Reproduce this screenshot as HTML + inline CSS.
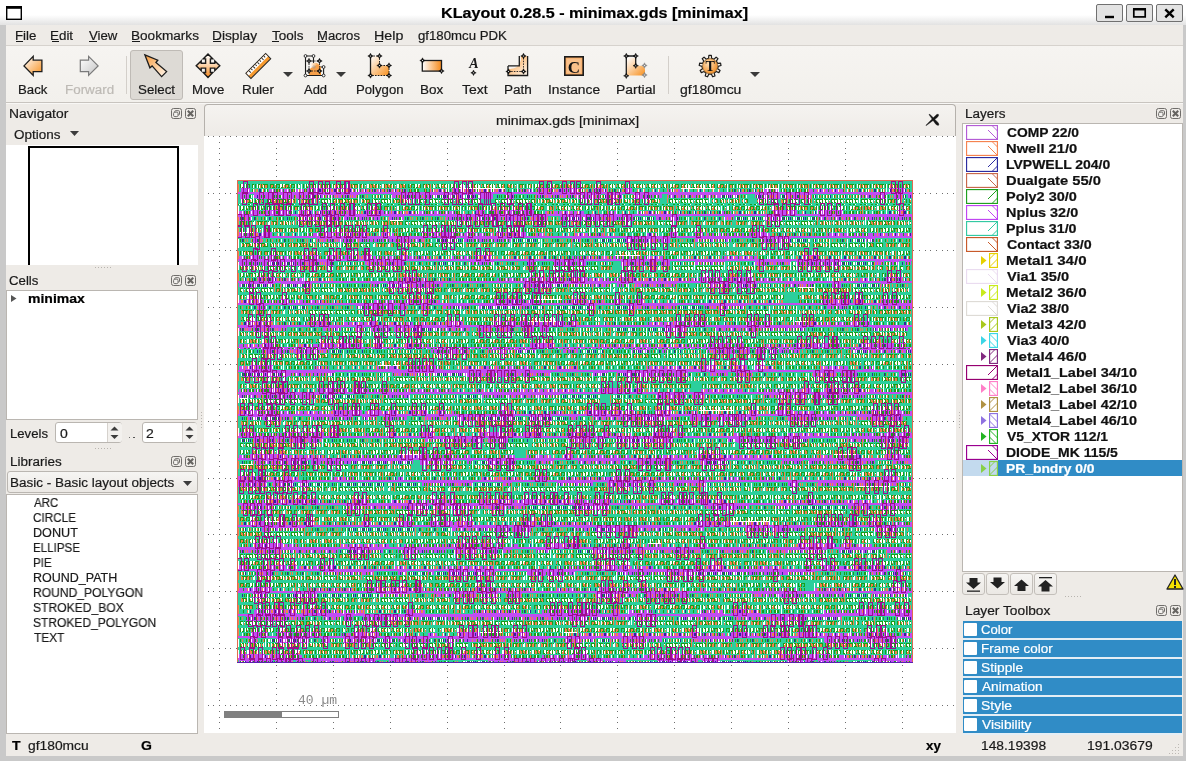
<!DOCTYPE html>
<html><head><meta charset="utf-8"><style>
html,body{margin:0;padding:0;}
body{width:1186px;height:761px;overflow:hidden;position:relative;background:#eeebe7;font-family:"Liberation Sans",sans-serif;}
.t{position:absolute;white-space:pre;line-height:1;transform-origin:0 0;will-change:transform;-webkit-text-stroke:0.2px currentColor;}
</style></head><body>
<div style="position:absolute;left:0px;top:0px;width:1186px;height:25px;background:linear-gradient(#fff 0,#fff 15px,#e2e2e2 25px);"></div>
<svg style="position:absolute;left:0;top:0;overflow:visible" width="1" height="1"><rect x="6.7" y="6.7" width="14.6" height="12.6" fill="#fff" stroke="#000" stroke-width="1.4"/><rect x="6" y="6" width="16" height="2.8" fill="#000"/></svg>
<span class="t" style="left:440.59px;top:5.58px;font-size:14.5px;font-weight:bold;transform:scaleX(1.1109);">KLayout 0.28.5 - minimax.gds [minimax]</span>
<div style="position:absolute;left:1096px;top:4px;width:27px;height:18px;box-sizing:border-box;border:1px solid #707070;border-radius:2px;background:#e3e3e3;"></div>
<div style="position:absolute;left:1126px;top:4px;width:27px;height:18px;box-sizing:border-box;border:1px solid #707070;border-radius:2px;background:#e3e3e3;"></div>
<div style="position:absolute;left:1156px;top:4px;width:27px;height:18px;box-sizing:border-box;border:1px solid #707070;border-radius:2px;background:#e3e3e3;"></div>
<svg style="position:absolute;left:0;top:0;overflow:visible" width="1" height="1"><rect x="1105" y="15.8" width="9" height="2.4" fill="#000"/><rect x="1133.8" y="9.3" width="11.4" height="7.6" fill="none" stroke="#000" stroke-width="1.7"/><rect x="1133" y="8" width="13" height="2.4" fill="#000"/><path d="M1165.3 9.4L1173.7 17.4M1173.7 9.4L1165.3 17.4" stroke="#000" stroke-width="2.4"/></svg>
<div style="position:absolute;left:0px;top:25px;width:6px;height:736px;background:#c9c9c9;"></div>
<div style="position:absolute;left:1183px;top:25px;width:3px;height:736px;background:#c9c9c9;"></div>
<div style="position:absolute;left:0px;top:756px;width:1186px;height:5px;background:#c9c9c9;"></div>
<div style="position:absolute;left:6px;top:25px;width:1177px;height:20px;background:#eeebe7;"></div>
<div style="position:absolute;left:6px;top:45px;width:1177px;height:1px;background:#d6d2cd;"></div>
<span class="t" style="left:14.94px;top:29.68px;font-size:12.5px;color:#1a1a1a;transform:scaleX(1.0632);">File</span>
<div style="position:absolute;left:16px;top:41px;width:7px;height:1px;background:#1a1a1a;"></div>
<span class="t" style="left:50.43px;top:29.68px;font-size:12.5px;color:#1a1a1a;transform:scaleX(1.0714);">Edit</span>
<div style="position:absolute;left:52px;top:41px;width:7px;height:1px;background:#1a1a1a;"></div>
<span class="t" style="left:88.80px;top:29.68px;font-size:12.5px;color:#1a1a1a;transform:scaleX(1.0556);">View</span>
<div style="position:absolute;left:89px;top:41px;width:8px;height:1px;background:#1a1a1a;"></div>
<span class="t" style="left:131.11px;top:29.68px;font-size:12.5px;color:#1a1a1a;transform:scaleX(1.0869);">Bookmarks</span>
<div style="position:absolute;left:132px;top:41px;width:8px;height:1px;background:#1a1a1a;"></div>
<span class="t" style="left:211.90px;top:29.68px;font-size:12.5px;color:#1a1a1a;transform:scaleX(1.1000);">Display</span>
<div style="position:absolute;left:213px;top:41px;width:8px;height:1px;background:#1a1a1a;"></div>
<span class="t" style="left:272.00px;top:29.68px;font-size:12.5px;color:#1a1a1a;transform:scaleX(1.0793);">Tools</span>
<div style="position:absolute;left:272px;top:41px;width:7px;height:1px;background:#1a1a1a;"></div>
<span class="t" style="left:317.35px;top:29.68px;font-size:12.5px;color:#1a1a1a;transform:scaleX(1.0475);">Macros</span>
<div style="position:absolute;left:318px;top:41px;width:8px;height:1px;background:#1a1a1a;"></div>
<span class="t" style="left:373.86px;top:29.68px;font-size:12.5px;color:#1a1a1a;transform:scaleX(1.1417);">Help</span>
<div style="position:absolute;left:375px;top:41px;width:8px;height:1px;background:#1a1a1a;"></div>
<span class="t" style="left:417.80px;top:29.68px;font-size:12.5px;color:#1a1a1a;transform:scaleX(1.0571);">gf180mcu PDK</span>
<div style="position:absolute;left:6px;top:46px;width:1177px;height:56px;background:linear-gradient(#f6f4f1,#f2f0ec);"></div>
<div style="position:absolute;left:6px;top:102px;width:1177px;height:1px;background:#c8c4bf;"></div>
<div style="position:absolute;left:6px;top:103px;width:1177px;height:1px;background:#f8f7f5;"></div>
<div style="position:absolute;left:126px;top:56px;width:1px;height:38px;background:#d3cfca;"></div>
<div style="position:absolute;left:668px;top:56px;width:1px;height:38px;background:#d3cfca;"></div>
<div style="position:absolute;left:130px;top:50px;width:53px;height:50px;box-sizing:border-box;border:1px solid #bfbbb6;border-radius:3px;background:#dddad5;"></div>
<span class="t" style="left:17.54px;top:83.67px;font-size:12.5px;color:#1a1a1a;transform:scaleX(1.0556);">Back</span>
<span class="t" style="left:64.73px;top:83.67px;font-size:12.5px;color:#bdbab5;transform:scaleX(1.0727);">Forward</span>
<span class="t" style="left:137.54px;top:83.67px;font-size:12.5px;color:#1a1a1a;transform:scaleX(1.0647);">Select</span>
<span class="t" style="left:191.94px;top:83.67px;font-size:12.5px;color:#1a1a1a;transform:scaleX(1.0552);">Move</span>
<span class="t" style="left:241.93px;top:83.67px;font-size:12.5px;color:#1a1a1a;transform:scaleX(1.0690);">Ruler</span>
<span class="t" style="left:303.60px;top:83.67px;font-size:12.5px;color:#1a1a1a;transform:scaleX(1.0364);">Add</span>
<span class="t" style="left:355.65px;top:83.67px;font-size:12.5px;color:#1a1a1a;transform:scaleX(1.0523);">Polygon</span>
<span class="t" style="left:420.32px;top:83.67px;font-size:12.5px;color:#1a1a1a;transform:scaleX(1.0800);">Box</span>
<span class="t" style="left:462.00px;top:83.67px;font-size:12.5px;color:#1a1a1a;transform:scaleX(1.1174);">Text</span>
<span class="t" style="left:503.92px;top:83.67px;font-size:12.5px;color:#1a1a1a;transform:scaleX(1.0833);">Path</span>
<span class="t" style="left:547.90px;top:83.67px;font-size:12.5px;color:#1a1a1a;transform:scaleX(1.1022);">Instance</span>
<span class="t" style="left:616.39px;top:83.67px;font-size:12.5px;color:#1a1a1a;transform:scaleX(1.1147);">Partial</span>
<span class="t" style="left:680.00px;top:83.67px;font-size:12.5px;color:#1a1a1a;transform:scaleX(1.1185);">gf180mcu</span>
<svg style="position:absolute;left:0;top:0" width="0" height="0"><defs><linearGradient id="og" x1="0" y1="0" x2="1" y2="1"><stop offset="0" stop-color="#ffffff"/><stop offset="0.25" stop-color="#fde3c8"/><stop offset="1" stop-color="#f7901e"/></linearGradient><linearGradient id="ogh" x1="0" y1="0" x2="1" y2="0"><stop offset="0" stop-color="#ffffff"/><stop offset="1" stop-color="#f5891a"/></linearGradient><linearGradient id="ogr" x1="1" y1="1" x2="0" y2="0"><stop offset="0" stop-color="#fff8f0"/><stop offset="1" stop-color="#f89b3c"/></linearGradient><linearGradient id="ogv" x1="0" y1="0" x2="0" y2="1"><stop offset="0" stop-color="#ffffff"/><stop offset="0.4" stop-color="#fde0c0"/><stop offset="1" stop-color="#f5861a"/></linearGradient><linearGradient id="gg" x1="0" y1="0" x2="1" y2="1"><stop offset="0" stop-color="#ffffff"/><stop offset="1" stop-color="#c4c4c4"/></linearGradient><radialGradient id="gr" cx="0.4" cy="0.35" r="0.7"><stop offset="0" stop-color="#fde0b8"/><stop offset="1" stop-color="#f08a20"/></radialGradient></defs></svg>
<svg style="position:absolute;left:0px;top:0px;overflow:visible" width="1" height="1" viewBox="0 0 1 1"><path d="M24 65.9L33.2 56.4V60.2H41.9V71.6H33.2V75.4Z" fill="url(#og)" stroke="#1c1c1c" stroke-width="1.3" stroke-linejoin="miter"/></svg>
<svg style="position:absolute;left:0px;top:0px;overflow:visible" width="1" height="1" viewBox="0 0 1 1"><path d="M98.1 65.9L88.6 56.4V60.2H80.3V71.6H88.6V75.4Z" fill="url(#gg)" stroke="#7a7a7a" stroke-width="1.2" stroke-linejoin="miter"/></svg>
<svg style="position:absolute;left:0px;top:0px;overflow:visible" width="1" height="1" viewBox="0 0 1 1"><path d="M144.9 54.9L157.8 60.2L155.9 62.5L166.6 71.6L161.6 76.6L152.1 65.9L149.9 67.8Z" fill="url(#ogr)" stroke="#1c1c1c" stroke-width="1.3" stroke-linejoin="miter"/></svg>
<svg style="position:absolute;left:0px;top:0px;overflow:visible" width="1" height="1" viewBox="0 0 1 1"><path d="M205.60 63.30L205.60 58.90L203.20 58.90L208.00 53.90L212.80 58.90L210.40 58.90L210.40 63.30L214.80 63.30L214.80 60.90L219.80 65.70L214.80 70.50L214.80 68.10L210.40 68.10L210.40 72.50L212.80 72.50L208.00 77.50L203.20 72.50L205.60 72.50L205.60 68.10L201.20 68.10L201.20 70.50L196.20 65.70L201.20 60.90L201.20 63.30Z" fill="url(#ogv)" stroke="#1c1c1c" stroke-width="1.4" stroke-linejoin="miter"/></svg>
<svg style="position:absolute;left:0px;top:0px;overflow:visible" width="1" height="1" viewBox="0 0 1 1"><g transform="translate(258.3,66) rotate(-45)"><rect x="-14" y="-3.6" width="28" height="7.2" fill="#f79a2e" stroke="#2a2a2a" stroke-width="1"/><rect x="-13.5" y="-3.1" width="27" height="3.2" fill="#fff"/><path d="M-10 -3.1v2.6M-7 -3.1v1.8M-4 -3.1v2.6M-1 -3.1v1.8M2 -3.1v2.6M5 -3.1v1.8M8 -3.1v2.6M11 -3.1v1.8" stroke="#2a2a2a" stroke-width="1"/></g></svg>
<svg style="position:absolute;left:0px;top:0px;overflow:visible" width="1" height="1" viewBox="0 0 1 1"><path d="M305.5 56H313.5V67H323.6V75.5H305.5Z" fill="none" stroke="#1c1c1c" stroke-width="1.1"/><path d="M310 64Q318 60 321 68V75H310Z" fill="url(#ogh)"/><path d="M314 67Q318 62 320.5 68L320 75H309V70Q311 67 314 67Z" fill="#f7a04a"/><path d="M309 61V71M319.5 61V71M309 61H319.5M309 71H319.5" stroke="#1c1c1c" stroke-width="0.9" stroke-dasharray="1.4 1.2"/><circle cx="314" cy="67" r="1.2" fill="none" stroke="#999" stroke-width="0.7"/><circle cx="305.5" cy="56" r="1.4" fill="#fff" stroke="#1c1c1c" stroke-width="0.9"/><circle cx="313.5" cy="56" r="1.4" fill="#fff" stroke="#1c1c1c" stroke-width="0.9"/><circle cx="305.5" cy="75.5" r="1.4" fill="#fff" stroke="#1c1c1c" stroke-width="0.9"/><circle cx="323.6" cy="75.5" r="1.4" fill="#fff" stroke="#1c1c1c" stroke-width="0.9"/><circle cx="323.6" cy="67" r="1.4" fill="#fff" stroke="#1c1c1c" stroke-width="0.9"/><path d="M309 58.3L309.9 60.1L311.7 61L309.9 61.9L309 63.7L308.1 61.9L306.3 61L308.1 60.1Z" fill="#111" stroke="#111" stroke-width="0.5" stroke-linejoin="round"/><circle cx="309" cy="61" r="0.55" fill="#fff"/><path d="M319.5 58.3L320.4 60.1L322.2 61L320.4 61.9L319.5 63.7L318.6 61.9L316.8 61L318.6 60.1Z" fill="#111" stroke="#111" stroke-width="0.5" stroke-linejoin="round"/><circle cx="319.5" cy="61" r="0.55" fill="#fff"/><path d="M309 68.3L309.9 70.1L311.7 71L309.9 71.9L309 73.7L308.1 71.9L306.3 71L308.1 70.1Z" fill="#111" stroke="#111" stroke-width="0.5" stroke-linejoin="round"/><circle cx="309" cy="71" r="0.55" fill="#fff"/><path d="M319.5 68.3L320.4 70.1L322.2 71L320.4 71.9L319.5 73.7L318.6 71.9L316.8 71L318.6 70.1Z" fill="#111" stroke="#111" stroke-width="0.5" stroke-linejoin="round"/><circle cx="319.5" cy="71" r="0.55" fill="#fff"/></svg>
<svg style="position:absolute;left:283px;top:72px;overflow:visible" width="10" height="5" viewBox="0 0 10 5"><path d="M0 0H10L5 5Z" fill="#3a3a3a"/></svg>
<svg style="position:absolute;left:336px;top:72px;overflow:visible" width="10" height="5" viewBox="0 0 10 5"><path d="M0 0H10L5 5Z" fill="#3a3a3a"/></svg>
<svg style="position:absolute;left:750px;top:72px;overflow:visible" width="10" height="5" viewBox="0 0 10 5"><path d="M0 0H10L5 5Z" fill="#3a3a3a"/></svg>
<svg style="position:absolute;left:0px;top:0px;overflow:visible" width="1" height="1" viewBox="0 0 1 1"><path d="M370.5 56H379.5V65.5H389V75.5H370.5Z" fill="url(#og)"/><path d="M370.5 56V75.5" stroke="#1c1c1c" stroke-width="1.3"/><path d="M370.5 56H379.5V65.5H389V75.5H370.5" fill="none" stroke="#1c1c1c" stroke-width="1" stroke-dasharray="1.6 1.2"/><path d="M370.5 53.3L371.4 55.1L373.2 56L371.4 56.9L370.5 58.7L369.6 56.9L367.8 56L369.6 55.1Z" fill="#111" stroke="#111" stroke-width="0.5" stroke-linejoin="round"/><circle cx="370.5" cy="56" r="0.55" fill="#fff"/><path d="M379.5 53.3L380.4 55.1L382.2 56L380.4 56.9L379.5 58.7L378.6 56.9L376.8 56L378.6 55.1Z" fill="#111" stroke="#111" stroke-width="0.5" stroke-linejoin="round"/><circle cx="379.5" cy="56" r="0.55" fill="#fff"/><path d="M379.5 62.8L380.4 64.6L382.2 65.5L380.4 66.4L379.5 68.2L378.6 66.4L376.8 65.5L378.6 64.6Z" fill="#111" stroke="#111" stroke-width="0.5" stroke-linejoin="round"/><circle cx="379.5" cy="65.5" r="0.55" fill="#fff"/><path d="M389 62.8L389.9 64.6L391.7 65.5L389.9 66.4L389 68.2L388.1 66.4L386.3 65.5L388.1 64.6Z" fill="#111" stroke="#111" stroke-width="0.5" stroke-linejoin="round"/><circle cx="389" cy="65.5" r="0.55" fill="#fff"/><path d="M370.5 72.8L371.4 74.6L373.2 75.5L371.4 76.4L370.5 78.2L369.6 76.4L367.8 75.5L369.6 74.6Z" fill="#111" stroke="#111" stroke-width="0.5" stroke-linejoin="round"/><circle cx="370.5" cy="75.5" r="0.55" fill="#fff"/><path d="M389 72.8L389.9 74.6L391.7 75.5L389.9 76.4L389 78.2L388.1 76.4L386.3 75.5L388.1 74.6Z" fill="#111" stroke="#111" stroke-width="0.5" stroke-linejoin="round"/><circle cx="389" cy="75.5" r="0.55" fill="#fff"/></svg>
<svg style="position:absolute;left:0px;top:0px;overflow:visible" width="1" height="1" viewBox="0 0 1 1"><rect x="422.3" y="60.5" width="19.2" height="10.6" fill="url(#ogh)" stroke="#1c1c1c" stroke-width="1.3"/><path d="M422.5 57.8L423.4 59.6L425.2 60.5L423.4 61.4L422.5 63.2L421.6 61.4L419.8 60.5L421.6 59.6Z" fill="#111" stroke="#111" stroke-width="0.5" stroke-linejoin="round"/><circle cx="422.5" cy="60.5" r="0.55" fill="#fff"/><path d="M441.5 68.3L442.4 70.1L444.2 71L442.4 71.9L441.5 73.7L440.6 71.9L438.8 71L440.6 70.1Z" fill="#111" stroke="#111" stroke-width="0.5" stroke-linejoin="round"/><circle cx="441.5" cy="71" r="0.55" fill="#fff"/></svg>
<svg style="position:absolute;left:0px;top:0px;overflow:visible" width="1" height="1" viewBox="0 0 1 1"><text x="473.8" y="68.3" text-anchor="middle" font-family="Liberation Serif" font-style="italic" font-weight="bold" font-size="14" fill="#1c1c1c">A</text><path d="M473.5 70.1L474.4 71.89999999999999L476.2 72.8L474.4 73.7L473.5 75.5L472.6 73.7L470.8 72.8L472.6 71.89999999999999Z" fill="#111" stroke="#111" stroke-width="0.5" stroke-linejoin="round"/><circle cx="473.5" cy="72.8" r="0.55" fill="#fff"/></svg>
<svg style="position:absolute;left:0px;top:0px;overflow:visible" width="1" height="1" viewBox="0 0 1 1"><path d="M508 65.9H519.3V56H527.6V75.5H508Z" fill="#f3f1ee"/><path d="M509 69Q519 69 521 60V56H527V75H509Z" fill="url(#ogr)"/><path d="M508 65.9H519.3V56M527.6 56V75.5H508V65.9" fill="none" stroke="#1c1c1c" stroke-width="1.3"/><path d="M508.5 71.5H523.5V56" fill="none" stroke="#1c1c1c" stroke-width="0.9" stroke-dasharray="1.5 1.2"/><path d="M508.5 68.8L509.4 70.6L511.2 71.5L509.4 72.4L508.5 74.2L507.6 72.4L505.8 71.5L507.6 70.6Z" fill="#111" stroke="#111" stroke-width="0.5" stroke-linejoin="round"/><circle cx="508.5" cy="71.5" r="0.55" fill="#fff"/><path d="M523.5 68.8L524.4 70.6L526.2 71.5L524.4 72.4L523.5 74.2L522.6 72.4L520.8 71.5L522.6 70.6Z" fill="#111" stroke="#111" stroke-width="0.5" stroke-linejoin="round"/><circle cx="523.5" cy="71.5" r="0.55" fill="#fff"/><path d="M523.5 53.3L524.4 55.1L526.2 56L524.4 56.9L523.5 58.7L522.6 56.9L520.8 56L522.6 55.1Z" fill="#111" stroke="#111" stroke-width="0.5" stroke-linejoin="round"/><circle cx="523.5" cy="56" r="0.55" fill="#fff"/></svg>
<svg style="position:absolute;left:0px;top:0px;overflow:visible" width="1" height="1" viewBox="0 0 1 1"><rect x="564.8" y="56.8" width="18.4" height="18.4" fill="#f7a860" stroke="#1c1c1c" stroke-width="1.6"/><rect x="566.5" y="58.5" width="15" height="15" fill="#f9c08a"/><text x="574" y="72.6" text-anchor="middle" font-family="Liberation Serif" font-weight="bold" font-size="17" fill="#111">C</text></svg>
<svg style="position:absolute;left:0px;top:0px;overflow:visible" width="1" height="1" viewBox="0 0 1 1"><path d="M627 58H635.7V65.7H641Q645 66 645 70V75.5H627Z" fill="url(#og)"/><path d="M626.3 75.8V56H635.7V65.7" fill="none" stroke="#1c1c1c" stroke-width="1.3"/><path d="M626.3 53.3L627.1999999999999 55.1L629.0 56L627.1999999999999 56.9L626.3 58.7L625.4 56.9L623.5999999999999 56L625.4 55.1Z" fill="#111" stroke="#111" stroke-width="0.5" stroke-linejoin="round"/><circle cx="626.3" cy="56" r="0.55" fill="#fff"/><path d="M635.7 53.3L636.6 55.1L638.4000000000001 56L636.6 56.9L635.7 58.7L634.8000000000001 56.9L633.0 56L634.8000000000001 55.1Z" fill="#111" stroke="#111" stroke-width="0.5" stroke-linejoin="round"/><circle cx="635.7" cy="56" r="0.55" fill="#fff"/><path d="M635.7 63.0L636.6 64.8L638.4000000000001 65.7L636.6 66.60000000000001L635.7 68.4L634.8000000000001 66.60000000000001L633.0 65.7L634.8000000000001 64.8Z" fill="#111" stroke="#111" stroke-width="0.5" stroke-linejoin="round"/><circle cx="635.7" cy="65.7" r="0.55" fill="#fff"/><path d="M626.3 73.1L627.1999999999999 74.89999999999999L629.0 75.8L627.1999999999999 76.7L626.3 78.5L625.4 76.7L623.5999999999999 75.8L625.4 74.89999999999999Z" fill="#111" stroke="#111" stroke-width="0.5" stroke-linejoin="round"/><circle cx="626.3" cy="75.8" r="0.55" fill="#fff"/><path d="M644.5 62.8L645.4 64.6L647.2 65.5L645.4 66.4L644.5 68.2L643.6 66.4L641.8 65.5L643.6 64.6Z" fill="#8a8a8a" stroke="#8a8a8a" stroke-width="0.5" stroke-linejoin="round"/><circle cx="644.5" cy="65.5" r="0.55" fill="#fff"/><path d="M644.5 72.3L645.4 74.1L647.2 75L645.4 75.9L644.5 77.7L643.6 75.9L641.8 75L643.6 74.1Z" fill="#8a8a8a" stroke="#8a8a8a" stroke-width="0.5" stroke-linejoin="round"/><circle cx="644.5" cy="75" r="0.55" fill="#fff"/></svg>
<svg style="position:absolute;left:0px;top:0px;overflow:visible" width="1" height="1" viewBox="0 0 1 1"><polygon points="708.57,58.35 708.88,55.37 711.32,55.37 711.63,58.35 712.84,58.68 713.98,59.20 716.13,57.12 717.99,58.68 716.32,61.17 717.03,62.20 717.57,63.33 720.56,63.12 720.98,65.52 718.10,66.34 717.98,67.59 717.66,68.80 720.09,70.56 718.87,72.67 716.14,71.45 715.24,72.33 714.22,73.06 714.95,75.96 712.66,76.79 711.35,74.10 710.10,74.20 708.85,74.10 707.54,76.79 705.25,75.96 705.98,73.06 704.96,72.33 704.06,71.45 701.33,72.67 700.11,70.56 702.54,68.80 702.22,67.59 702.10,66.34 699.22,65.52 699.64,63.12 702.63,63.33 703.17,62.20 703.88,61.17 702.21,58.68 704.07,57.12 706.22,59.20 707.36,58.68" fill="#fdf3e6" stroke="#1c1c1c" stroke-width="1.2" stroke-linejoin="round"/><circle cx="710.1" cy="66.2" r="7.6" fill="url(#gr)" stroke="#6a4a20" stroke-width="0.6"/><text x="710.1" y="71.2" text-anchor="middle" font-family="Liberation Serif" font-weight="bold" font-size="14" fill="#111">T</text></svg>
<span class="t" style="left:9.39px;top:107.77px;font-size:12.5px;color:#1a1a1a;transform:scaleX(1.1077);">Navigator</span>
<div style="position:absolute;left:171px;top:108px;width:11px;height:11px;box-sizing:border-box;border:1px solid #6f6d6a;border-radius:2.5px;"></div><div style="position:absolute;left:185px;top:108px;width:11px;height:11px;box-sizing:border-box;border:1px solid #6f6d6a;border-radius:2.5px;"></div><svg style="position:absolute;left:171px;top:108px" width="11" height="11"><rect x="3.7" y="2.7" width="4.8" height="4.3" rx="1" fill="none" stroke="#6f6d6a" stroke-width="1"/><rect x="2.6" y="4.2" width="4.4" height="4.4" rx="1.2" fill="#f4f2ef" stroke="#6f6d6a" stroke-width="1"/></svg><svg style="position:absolute;left:185px;top:108px" width="11" height="11"><path d="M2.8 2.8L8.2 8.2M8.2 2.8L2.8 8.2" stroke="#666461" stroke-width="2.1"/></svg>
<span class="t" style="left:13.72px;top:129.17px;font-size:12.5px;color:#1a1a1a;transform:scaleX(1.0762);">Options</span>
<svg style="position:absolute;left:70px;top:131px" width="9" height="5"><path d="M0 0H9L4.5 5Z" fill="#3c3c3c"/></svg>
<div style="position:absolute;left:6px;top:145px;width:192px;height:120px;background:#fff;"></div>
<div style="position:absolute;left:28px;top:146px;width:151px;height:2px;background:#000;"></div>
<div style="position:absolute;left:28px;top:146px;width:2px;height:119px;background:#000;"></div>
<div style="position:absolute;left:177px;top:146px;width:2px;height:119px;background:#000;"></div>
<span class="t" style="left:9.44px;top:274.58px;font-size:12.5px;color:#1a1a1a;transform:scaleX(1.0577);">Cells</span>
<div style="position:absolute;left:171px;top:275px;width:11px;height:11px;box-sizing:border-box;border:1px solid #6f6d6a;border-radius:2.5px;"></div><div style="position:absolute;left:185px;top:275px;width:11px;height:11px;box-sizing:border-box;border:1px solid #6f6d6a;border-radius:2.5px;"></div><svg style="position:absolute;left:171px;top:275px" width="11" height="11"><rect x="3.7" y="2.7" width="4.8" height="4.3" rx="1" fill="none" stroke="#6f6d6a" stroke-width="1"/><rect x="2.6" y="4.2" width="4.4" height="4.4" rx="1.2" fill="#f4f2ef" stroke="#6f6d6a" stroke-width="1"/></svg><svg style="position:absolute;left:185px;top:275px" width="11" height="11"><path d="M2.8 2.8L8.2 8.2M8.2 2.8L2.8 8.2" stroke="#666461" stroke-width="2.1"/></svg>
<div style="position:absolute;left:6px;top:290px;width:192px;height:130px;box-sizing:border-box;border:1px solid #bab6b1;background:#fff;"></div>
<svg style="position:absolute;left:11px;top:295px" width="6" height="7"><path d="M0 0L5.5 3.5L0 7Z" fill="#555"/></svg>
<span class="t" style="left:27.58px;top:292.68px;font-size:12.5px;font-weight:bold;transform:scaleX(1.1200);">minimax</span>
<span class="t" style="left:10.45px;top:427.68px;font-size:12.5px;color:#1a1a1a;transform:scaleX(1.0514);">Levels</span>
<div style="position:absolute;left:55px;top:422px;width:67px;height:21px;box-sizing:border-box;border:1px solid #bab6b1;border-radius:3px;background:#fff;"></div><div style="position:absolute;left:107px;top:423px;width:14px;height:19px;background:#f3f1ee;border-left:1px solid #d6d2cd;border-radius:0 2px 2px 0;"></div><svg style="position:absolute;left:110px;top:426px" width="9" height="14"><path d="M0.5 4.5L4.5 0.5L8.5 4.5Z" fill="#3c3c3c"/><path d="M0.5 9L4.5 13L8.5 9Z" fill="#3c3c3c"/></svg>
<div style="position:absolute;left:142px;top:422px;width:55px;height:21px;box-sizing:border-box;border:1px solid #bab6b1;border-radius:3px;background:#fff;"></div><div style="position:absolute;left:182px;top:423px;width:14px;height:19px;background:#f3f1ee;border-left:1px solid #d6d2cd;border-radius:0 2px 2px 0;"></div><svg style="position:absolute;left:185px;top:426px" width="9" height="14"><path d="M0.5 4.5L4.5 0.5L8.5 4.5Z" fill="#3c3c3c"/><path d="M0.5 9L4.5 13L8.5 9Z" fill="#3c3c3c"/></svg>
<span class="t" style="left:60.30px;top:427.68px;font-size:12.5px;color:#1a1a1a;transform:scaleX(1.1200);">0</span>
<span class="t" style="left:146.38px;top:427.68px;font-size:12.5px;color:#1a1a1a;transform:scaleX(1.1200);">2</span>
<div style="position:absolute;left:128.5px;top:436.5px;width:1.6px;height:1.6px;background:#444;border-radius:1px;"></div>
<div style="position:absolute;left:133px;top:436.5px;width:1.6px;height:1.6px;background:#444;border-radius:1px;"></div>
<div style="position:absolute;left:95px;top:267px;width:1px;height:1px;background:#b8b4af;"></div>
<div style="position:absolute;left:98px;top:267px;width:1px;height:1px;background:#b8b4af;"></div>
<div style="position:absolute;left:101px;top:267px;width:1px;height:1px;background:#b8b4af;"></div>
<div style="position:absolute;left:104px;top:267px;width:1px;height:1px;background:#b8b4af;"></div>
<div style="position:absolute;left:107px;top:267px;width:1px;height:1px;background:#b8b4af;"></div>
<div style="position:absolute;left:110px;top:267px;width:1px;height:1px;background:#b8b4af;"></div>
<div style="position:absolute;left:95px;top:448px;width:1px;height:1px;background:#b8b4af;"></div>
<div style="position:absolute;left:98px;top:448px;width:1px;height:1px;background:#b8b4af;"></div>
<div style="position:absolute;left:101px;top:448px;width:1px;height:1px;background:#b8b4af;"></div>
<div style="position:absolute;left:104px;top:448px;width:1px;height:1px;background:#b8b4af;"></div>
<div style="position:absolute;left:107px;top:448px;width:1px;height:1px;background:#b8b4af;"></div>
<div style="position:absolute;left:110px;top:448px;width:1px;height:1px;background:#b8b4af;"></div>
<div style="position:absolute;left:1065px;top:596px;width:1px;height:1px;background:#b8b4af;"></div>
<div style="position:absolute;left:1068px;top:596px;width:1px;height:1px;background:#b8b4af;"></div>
<div style="position:absolute;left:1071px;top:596px;width:1px;height:1px;background:#b8b4af;"></div>
<div style="position:absolute;left:1074px;top:596px;width:1px;height:1px;background:#b8b4af;"></div>
<div style="position:absolute;left:1077px;top:596px;width:1px;height:1px;background:#b8b4af;"></div>
<div style="position:absolute;left:1080px;top:596px;width:1px;height:1px;background:#b8b4af;"></div>
<div style="position:absolute;left:201px;top:412px;width:1px;height:1px;background:#b8b4af;"></div>
<div style="position:absolute;left:201px;top:415px;width:1px;height:1px;background:#b8b4af;"></div>
<div style="position:absolute;left:201px;top:418px;width:1px;height:1px;background:#b8b4af;"></div>
<div style="position:absolute;left:201px;top:421px;width:1px;height:1px;background:#b8b4af;"></div>
<div style="position:absolute;left:201px;top:424px;width:1px;height:1px;background:#b8b4af;"></div>
<div style="position:absolute;left:201px;top:427px;width:1px;height:1px;background:#b8b4af;"></div>
<div style="position:absolute;left:959px;top:412px;width:1px;height:1px;background:#b8b4af;"></div>
<div style="position:absolute;left:959px;top:415px;width:1px;height:1px;background:#b8b4af;"></div>
<div style="position:absolute;left:959px;top:418px;width:1px;height:1px;background:#b8b4af;"></div>
<div style="position:absolute;left:959px;top:421px;width:1px;height:1px;background:#b8b4af;"></div>
<div style="position:absolute;left:959px;top:424px;width:1px;height:1px;background:#b8b4af;"></div>
<div style="position:absolute;left:959px;top:427px;width:1px;height:1px;background:#b8b4af;"></div>
<span class="t" style="left:9.52px;top:455.68px;font-size:12.5px;color:#1a1a1a;transform:scaleX(1.0766);">Libraries</span>
<div style="position:absolute;left:171px;top:456px;width:11px;height:11px;box-sizing:border-box;border:1px solid #6f6d6a;border-radius:2.5px;"></div><div style="position:absolute;left:185px;top:456px;width:11px;height:11px;box-sizing:border-box;border:1px solid #6f6d6a;border-radius:2.5px;"></div><svg style="position:absolute;left:171px;top:456px" width="11" height="11"><rect x="3.7" y="2.7" width="4.8" height="4.3" rx="1" fill="none" stroke="#6f6d6a" stroke-width="1"/><rect x="2.6" y="4.2" width="4.4" height="4.4" rx="1.2" fill="#f4f2ef" stroke="#6f6d6a" stroke-width="1"/></svg><svg style="position:absolute;left:185px;top:456px" width="11" height="11"><path d="M2.8 2.8L8.2 8.2M8.2 2.8L2.8 8.2" stroke="#666461" stroke-width="2.1"/></svg>
<div style="position:absolute;left:7px;top:471px;width:191px;height:22px;box-sizing:border-box;border:1px solid #bab6b1;border-radius:3px;background:linear-gradient(#f6f5f3,#ebe8e4);"></div>
<span class="t" style="left:10.12px;top:477.18px;font-size:12.5px;color:#1a1a1a;transform:scaleX(1.0795);">Basic - Basic layout objects</span>
<svg style="position:absolute;left:183px;top:481px" width="9" height="5"><path d="M0 0H9L4.5 5Z" fill="#3c3c3c"/></svg>
<div style="position:absolute;left:6px;top:494px;width:192px;height:240px;box-sizing:border-box;border:1px solid #bab6b1;background:#fff;"></div>
<span class="t" style="left:33.90px;top:496.58px;font-size:12.5px;color:#1a1a1a;transform:scaleX(0.9231);">ARC</span>
<span class="t" style="left:32.96px;top:511.58px;font-size:12.5px;color:#1a1a1a;transform:scaleX(0.9378);">CIRCLE</span>
<span class="t" style="left:32.89px;top:526.58px;font-size:12.5px;color:#1a1a1a;transform:scaleX(1.0093);">DONUT</span>
<span class="t" style="left:32.97px;top:541.58px;font-size:12.5px;color:#1a1a1a;transform:scaleX(0.9260);">ELLIPSE</span>
<span class="t" style="left:32.97px;top:556.58px;font-size:12.5px;color:#1a1a1a;transform:scaleX(0.9316);">PIE</span>
<span class="t" style="left:32.90px;top:571.58px;font-size:12.5px;color:#1a1a1a;">ROUND_PATH</span>
<span class="t" style="left:32.93px;top:586.58px;font-size:12.5px;color:#1a1a1a;transform:scaleX(0.9679);">ROUND_POLYGON</span>
<span class="t" style="left:32.93px;top:601.58px;font-size:12.5px;color:#1a1a1a;transform:scaleX(0.9674);">STROKED_BOX</span>
<span class="t" style="left:32.94px;top:616.58px;font-size:12.5px;color:#1a1a1a;transform:scaleX(0.9603);">STROKED_POLYGON</span>
<span class="t" style="left:33.90px;top:631.58px;font-size:12.5px;color:#1a1a1a;transform:scaleX(0.9500);">TEXT</span>
<span class="t" style="left:11.80px;top:739.58px;font-size:12.5px;font-weight:bold;transform:scaleX(1.1200);">T</span>
<span class="t" style="left:27.50px;top:739.58px;font-size:12.5px;color:#1a1a1a;transform:scaleX(1.1056);">gf180mcu</span>
<span class="t" style="left:141.00px;top:739.58px;font-size:12.5px;font-weight:bold;transform:scaleX(1.1200);">G</span>
<span class="t" style="left:925.50px;top:739.58px;font-size:12.5px;font-weight:bold;transform:scaleX(1.0714);">xy</span>
<span class="t" style="left:981.20px;top:739.98px;font-size:12.5px;color:#1a1a1a;transform:scaleX(1.1017);">148.19398</span>
<span class="t" style="left:1086.89px;top:739.98px;font-size:12.5px;color:#1a1a1a;transform:scaleX(1.1103);">191.03679</span>
<div style="position:absolute;left:204px;top:104px;width:752px;height:32px;box-sizing:border-box;border:1px solid #b5b1ac;border-bottom:none;border-radius:4px 4px 0 0;background:linear-gradient(#f5f3f0,#eeebe7);"></div>
<span class="t" style="left:495.57px;top:114.97px;font-size:12.5px;color:#1a1a1a;transform:scaleX(1.1262);">minimax.gds [minimax]</span>
<svg style="position:absolute;left:0;top:0;overflow:visible" width="1" height="1"><path d="M929 114.6L929.8 114.3L937.6 122.2Q939.6 124.4 938.6 125.2Q937.6 125.8 935.8 124.2Z" fill="#151515" stroke="#151515" stroke-width="0.5"/><path d="M926.2 125.6L926 125.2L935.6 115.6Q937.2 113.8 938.4 114.4Q939.2 115.4 937.2 117.4Z" fill="#151515" stroke="#151515" stroke-width="0.5"/></svg>
<div style="position:absolute;left:204px;top:136px;width:752px;height:597px;background:#fff;"></div>
<svg style="position:absolute;left:0;top:0" width="1186" height="761"><path stroke="#6e6e6e" stroke-width="1" shape-rendering="crispEdges" d="M208.5 136v1m5 -1v1m6 -1v1m6 -1v1m5 -1v1m6 -1v1m6 -1v1m5 -1v1m6 -1v1m6 -1v1m6 -1v1m5 -1v1m6 -1v1m6 -1v1m5 -1v1m6 -1v1m6 -1v1m5 -1v1m6 -1v1m6 -1v1m5 -1v1m6 -1v1m6 -1v1m5 -1v1m6 -1v1m6 -1v1m6 -1v1m5 -1v1m6 -1v1m6 -1v1m5 -1v1m6 -1v1m6 -1v1m5 -1v1m6 -1v1m6 -1v1m5 -1v1m6 -1v1m6 -1v1m6 -1v1m5 -1v1m6 -1v1m6 -1v1m5 -1v1m6 -1v1m6 -1v1m5 -1v1m6 -1v1m6 -1v1m5 -1v1m6 -1v1m6 -1v1m6 -1v1m5 -1v1m6 -1v1m6 -1v1m5 -1v1m6 -1v1m6 -1v1m5 -1v1m6 -1v1m6 -1v1m5 -1v1m6 -1v1m6 -1v1m5 -1v1m6 -1v1m6 -1v1m6 -1v1m5 -1v1m6 -1v1m6 -1v1m5 -1v1m6 -1v1m6 -1v1m5 -1v1m6 -1v1m6 -1v1m5 -1v1m6 -1v1m6 -1v1m6 -1v1m5 -1v1m6 -1v1m6 -1v1m5 -1v1m6 -1v1m6 -1v1m5 -1v1m6 -1v1m6 -1v1m5 -1v1m6 -1v1m6 -1v1m5 -1v1m6 -1v1m6 -1v1m6 -1v1m5 -1v1m6 -1v1m6 -1v1m5 -1v1m6 -1v1m6 -1v1m5 -1v1m6 -1v1m6 -1v1m5 -1v1m6 -1v1m6 -1v1m6 -1v1m5 -1v1m6 -1v1m6 -1v1m5 -1v1m6 -1v1m6 -1v1m5 -1v1m6 -1v1m6 -1v1m5 -1v1m6 -1v1m6 -1v1m5 -1v1m6 -1v1m6 -1v1m6 -1v1m5 -1v1m6 -1v1m6 -1v1m5 -1v1m6 -1v1M208.5 193v1m5 -1v1m6 -1v1m6 -1v1m5 -1v1m6 -1v1m6 -1v1m5 -1v1m6 -1v1m6 -1v1m6 -1v1m5 -1v1m6 -1v1m6 -1v1m5 -1v1m6 -1v1m6 -1v1m5 -1v1m6 -1v1m6 -1v1m5 -1v1m6 -1v1m6 -1v1m5 -1v1m6 -1v1m6 -1v1m6 -1v1m5 -1v1m6 -1v1m6 -1v1m5 -1v1m6 -1v1m6 -1v1m5 -1v1m6 -1v1m6 -1v1m5 -1v1m6 -1v1m6 -1v1m6 -1v1m5 -1v1m6 -1v1m6 -1v1m5 -1v1m6 -1v1m6 -1v1m5 -1v1m6 -1v1m6 -1v1m5 -1v1m6 -1v1m6 -1v1m6 -1v1m5 -1v1m6 -1v1m6 -1v1m5 -1v1m6 -1v1m6 -1v1m5 -1v1m6 -1v1m6 -1v1m5 -1v1m6 -1v1m6 -1v1m5 -1v1m6 -1v1m6 -1v1m6 -1v1m5 -1v1m6 -1v1m6 -1v1m5 -1v1m6 -1v1m6 -1v1m5 -1v1m6 -1v1m6 -1v1m5 -1v1m6 -1v1m6 -1v1m6 -1v1m5 -1v1m6 -1v1m6 -1v1m5 -1v1m6 -1v1m6 -1v1m5 -1v1m6 -1v1m6 -1v1m5 -1v1m6 -1v1m6 -1v1m5 -1v1m6 -1v1m6 -1v1m6 -1v1m5 -1v1m6 -1v1m6 -1v1m5 -1v1m6 -1v1m6 -1v1m5 -1v1m6 -1v1m6 -1v1m5 -1v1m6 -1v1m6 -1v1m6 -1v1m5 -1v1m6 -1v1m6 -1v1m5 -1v1m6 -1v1m6 -1v1m5 -1v1m6 -1v1m6 -1v1m5 -1v1m6 -1v1m6 -1v1m5 -1v1m6 -1v1m6 -1v1m6 -1v1m5 -1v1m6 -1v1m6 -1v1m5 -1v1m6 -1v1M208.5 250v1m5 -1v1m6 -1v1m6 -1v1m5 -1v1m6 -1v1m6 -1v1m5 -1v1m6 -1v1m6 -1v1m6 -1v1m5 -1v1m6 -1v1m6 -1v1m5 -1v1m6 -1v1m6 -1v1m5 -1v1m6 -1v1m6 -1v1m5 -1v1m6 -1v1m6 -1v1m5 -1v1m6 -1v1m6 -1v1m6 -1v1m5 -1v1m6 -1v1m6 -1v1m5 -1v1m6 -1v1m6 -1v1m5 -1v1m6 -1v1m6 -1v1m5 -1v1m6 -1v1m6 -1v1m6 -1v1m5 -1v1m6 -1v1m6 -1v1m5 -1v1m6 -1v1m6 -1v1m5 -1v1m6 -1v1m6 -1v1m5 -1v1m6 -1v1m6 -1v1m6 -1v1m5 -1v1m6 -1v1m6 -1v1m5 -1v1m6 -1v1m6 -1v1m5 -1v1m6 -1v1m6 -1v1m5 -1v1m6 -1v1m6 -1v1m5 -1v1m6 -1v1m6 -1v1m6 -1v1m5 -1v1m6 -1v1m6 -1v1m5 -1v1m6 -1v1m6 -1v1m5 -1v1m6 -1v1m6 -1v1m5 -1v1m6 -1v1m6 -1v1m6 -1v1m5 -1v1m6 -1v1m6 -1v1m5 -1v1m6 -1v1m6 -1v1m5 -1v1m6 -1v1m6 -1v1m5 -1v1m6 -1v1m6 -1v1m5 -1v1m6 -1v1m6 -1v1m6 -1v1m5 -1v1m6 -1v1m6 -1v1m5 -1v1m6 -1v1m6 -1v1m5 -1v1m6 -1v1m6 -1v1m5 -1v1m6 -1v1m6 -1v1m6 -1v1m5 -1v1m6 -1v1m6 -1v1m5 -1v1m6 -1v1m6 -1v1m5 -1v1m6 -1v1m6 -1v1m5 -1v1m6 -1v1m6 -1v1m5 -1v1m6 -1v1m6 -1v1m6 -1v1m5 -1v1m6 -1v1m6 -1v1m5 -1v1m6 -1v1M208.5 307v1m5 -1v1m6 -1v1m6 -1v1m5 -1v1m6 -1v1m6 -1v1m5 -1v1m6 -1v1m6 -1v1m6 -1v1m5 -1v1m6 -1v1m6 -1v1m5 -1v1m6 -1v1m6 -1v1m5 -1v1m6 -1v1m6 -1v1m5 -1v1m6 -1v1m6 -1v1m5 -1v1m6 -1v1m6 -1v1m6 -1v1m5 -1v1m6 -1v1m6 -1v1m5 -1v1m6 -1v1m6 -1v1m5 -1v1m6 -1v1m6 -1v1m5 -1v1m6 -1v1m6 -1v1m6 -1v1m5 -1v1m6 -1v1m6 -1v1m5 -1v1m6 -1v1m6 -1v1m5 -1v1m6 -1v1m6 -1v1m5 -1v1m6 -1v1m6 -1v1m6 -1v1m5 -1v1m6 -1v1m6 -1v1m5 -1v1m6 -1v1m6 -1v1m5 -1v1m6 -1v1m6 -1v1m5 -1v1m6 -1v1m6 -1v1m5 -1v1m6 -1v1m6 -1v1m6 -1v1m5 -1v1m6 -1v1m6 -1v1m5 -1v1m6 -1v1m6 -1v1m5 -1v1m6 -1v1m6 -1v1m5 -1v1m6 -1v1m6 -1v1m6 -1v1m5 -1v1m6 -1v1m6 -1v1m5 -1v1m6 -1v1m6 -1v1m5 -1v1m6 -1v1m6 -1v1m5 -1v1m6 -1v1m6 -1v1m5 -1v1m6 -1v1m6 -1v1m6 -1v1m5 -1v1m6 -1v1m6 -1v1m5 -1v1m6 -1v1m6 -1v1m5 -1v1m6 -1v1m6 -1v1m5 -1v1m6 -1v1m6 -1v1m6 -1v1m5 -1v1m6 -1v1m6 -1v1m5 -1v1m6 -1v1m6 -1v1m5 -1v1m6 -1v1m6 -1v1m5 -1v1m6 -1v1m6 -1v1m5 -1v1m6 -1v1m6 -1v1m6 -1v1m5 -1v1m6 -1v1m6 -1v1m5 -1v1m6 -1v1M208.5 364v1m5 -1v1m6 -1v1m6 -1v1m5 -1v1m6 -1v1m6 -1v1m5 -1v1m6 -1v1m6 -1v1m6 -1v1m5 -1v1m6 -1v1m6 -1v1m5 -1v1m6 -1v1m6 -1v1m5 -1v1m6 -1v1m6 -1v1m5 -1v1m6 -1v1m6 -1v1m5 -1v1m6 -1v1m6 -1v1m6 -1v1m5 -1v1m6 -1v1m6 -1v1m5 -1v1m6 -1v1m6 -1v1m5 -1v1m6 -1v1m6 -1v1m5 -1v1m6 -1v1m6 -1v1m6 -1v1m5 -1v1m6 -1v1m6 -1v1m5 -1v1m6 -1v1m6 -1v1m5 -1v1m6 -1v1m6 -1v1m5 -1v1m6 -1v1m6 -1v1m6 -1v1m5 -1v1m6 -1v1m6 -1v1m5 -1v1m6 -1v1m6 -1v1m5 -1v1m6 -1v1m6 -1v1m5 -1v1m6 -1v1m6 -1v1m5 -1v1m6 -1v1m6 -1v1m6 -1v1m5 -1v1m6 -1v1m6 -1v1m5 -1v1m6 -1v1m6 -1v1m5 -1v1m6 -1v1m6 -1v1m5 -1v1m6 -1v1m6 -1v1m6 -1v1m5 -1v1m6 -1v1m6 -1v1m5 -1v1m6 -1v1m6 -1v1m5 -1v1m6 -1v1m6 -1v1m5 -1v1m6 -1v1m6 -1v1m5 -1v1m6 -1v1m6 -1v1m6 -1v1m5 -1v1m6 -1v1m6 -1v1m5 -1v1m6 -1v1m6 -1v1m5 -1v1m6 -1v1m6 -1v1m5 -1v1m6 -1v1m6 -1v1m6 -1v1m5 -1v1m6 -1v1m6 -1v1m5 -1v1m6 -1v1m6 -1v1m5 -1v1m6 -1v1m6 -1v1m5 -1v1m6 -1v1m6 -1v1m5 -1v1m6 -1v1m6 -1v1m6 -1v1m5 -1v1m6 -1v1m6 -1v1m5 -1v1m6 -1v1M208.5 421v1m5 -1v1m6 -1v1m6 -1v1m5 -1v1m6 -1v1m6 -1v1m5 -1v1m6 -1v1m6 -1v1m6 -1v1m5 -1v1m6 -1v1m6 -1v1m5 -1v1m6 -1v1m6 -1v1m5 -1v1m6 -1v1m6 -1v1m5 -1v1m6 -1v1m6 -1v1m5 -1v1m6 -1v1m6 -1v1m6 -1v1m5 -1v1m6 -1v1m6 -1v1m5 -1v1m6 -1v1m6 -1v1m5 -1v1m6 -1v1m6 -1v1m5 -1v1m6 -1v1m6 -1v1m6 -1v1m5 -1v1m6 -1v1m6 -1v1m5 -1v1m6 -1v1m6 -1v1m5 -1v1m6 -1v1m6 -1v1m5 -1v1m6 -1v1m6 -1v1m6 -1v1m5 -1v1m6 -1v1m6 -1v1m5 -1v1m6 -1v1m6 -1v1m5 -1v1m6 -1v1m6 -1v1m5 -1v1m6 -1v1m6 -1v1m5 -1v1m6 -1v1m6 -1v1m6 -1v1m5 -1v1m6 -1v1m6 -1v1m5 -1v1m6 -1v1m6 -1v1m5 -1v1m6 -1v1m6 -1v1m5 -1v1m6 -1v1m6 -1v1m6 -1v1m5 -1v1m6 -1v1m6 -1v1m5 -1v1m6 -1v1m6 -1v1m5 -1v1m6 -1v1m6 -1v1m5 -1v1m6 -1v1m6 -1v1m5 -1v1m6 -1v1m6 -1v1m6 -1v1m5 -1v1m6 -1v1m6 -1v1m5 -1v1m6 -1v1m6 -1v1m5 -1v1m6 -1v1m6 -1v1m5 -1v1m6 -1v1m6 -1v1m6 -1v1m5 -1v1m6 -1v1m6 -1v1m5 -1v1m6 -1v1m6 -1v1m5 -1v1m6 -1v1m6 -1v1m5 -1v1m6 -1v1m6 -1v1m5 -1v1m6 -1v1m6 -1v1m6 -1v1m5 -1v1m6 -1v1m6 -1v1m5 -1v1m6 -1v1M208.5 478v1m5 -1v1m6 -1v1m6 -1v1m5 -1v1m6 -1v1m6 -1v1m5 -1v1m6 -1v1m6 -1v1m6 -1v1m5 -1v1m6 -1v1m6 -1v1m5 -1v1m6 -1v1m6 -1v1m5 -1v1m6 -1v1m6 -1v1m5 -1v1m6 -1v1m6 -1v1m5 -1v1m6 -1v1m6 -1v1m6 -1v1m5 -1v1m6 -1v1m6 -1v1m5 -1v1m6 -1v1m6 -1v1m5 -1v1m6 -1v1m6 -1v1m5 -1v1m6 -1v1m6 -1v1m6 -1v1m5 -1v1m6 -1v1m6 -1v1m5 -1v1m6 -1v1m6 -1v1m5 -1v1m6 -1v1m6 -1v1m5 -1v1m6 -1v1m6 -1v1m6 -1v1m5 -1v1m6 -1v1m6 -1v1m5 -1v1m6 -1v1m6 -1v1m5 -1v1m6 -1v1m6 -1v1m5 -1v1m6 -1v1m6 -1v1m5 -1v1m6 -1v1m6 -1v1m6 -1v1m5 -1v1m6 -1v1m6 -1v1m5 -1v1m6 -1v1m6 -1v1m5 -1v1m6 -1v1m6 -1v1m5 -1v1m6 -1v1m6 -1v1m6 -1v1m5 -1v1m6 -1v1m6 -1v1m5 -1v1m6 -1v1m6 -1v1m5 -1v1m6 -1v1m6 -1v1m5 -1v1m6 -1v1m6 -1v1m5 -1v1m6 -1v1m6 -1v1m6 -1v1m5 -1v1m6 -1v1m6 -1v1m5 -1v1m6 -1v1m6 -1v1m5 -1v1m6 -1v1m6 -1v1m5 -1v1m6 -1v1m6 -1v1m6 -1v1m5 -1v1m6 -1v1m6 -1v1m5 -1v1m6 -1v1m6 -1v1m5 -1v1m6 -1v1m6 -1v1m5 -1v1m6 -1v1m6 -1v1m5 -1v1m6 -1v1m6 -1v1m6 -1v1m5 -1v1m6 -1v1m6 -1v1m5 -1v1m6 -1v1M208.5 534v1m5 -1v1m6 -1v1m6 -1v1m5 -1v1m6 -1v1m6 -1v1m5 -1v1m6 -1v1m6 -1v1m6 -1v1m5 -1v1m6 -1v1m6 -1v1m5 -1v1m6 -1v1m6 -1v1m5 -1v1m6 -1v1m6 -1v1m5 -1v1m6 -1v1m6 -1v1m5 -1v1m6 -1v1m6 -1v1m6 -1v1m5 -1v1m6 -1v1m6 -1v1m5 -1v1m6 -1v1m6 -1v1m5 -1v1m6 -1v1m6 -1v1m5 -1v1m6 -1v1m6 -1v1m6 -1v1m5 -1v1m6 -1v1m6 -1v1m5 -1v1m6 -1v1m6 -1v1m5 -1v1m6 -1v1m6 -1v1m5 -1v1m6 -1v1m6 -1v1m6 -1v1m5 -1v1m6 -1v1m6 -1v1m5 -1v1m6 -1v1m6 -1v1m5 -1v1m6 -1v1m6 -1v1m5 -1v1m6 -1v1m6 -1v1m5 -1v1m6 -1v1m6 -1v1m6 -1v1m5 -1v1m6 -1v1m6 -1v1m5 -1v1m6 -1v1m6 -1v1m5 -1v1m6 -1v1m6 -1v1m5 -1v1m6 -1v1m6 -1v1m6 -1v1m5 -1v1m6 -1v1m6 -1v1m5 -1v1m6 -1v1m6 -1v1m5 -1v1m6 -1v1m6 -1v1m5 -1v1m6 -1v1m6 -1v1m5 -1v1m6 -1v1m6 -1v1m6 -1v1m5 -1v1m6 -1v1m6 -1v1m5 -1v1m6 -1v1m6 -1v1m5 -1v1m6 -1v1m6 -1v1m5 -1v1m6 -1v1m6 -1v1m6 -1v1m5 -1v1m6 -1v1m6 -1v1m5 -1v1m6 -1v1m6 -1v1m5 -1v1m6 -1v1m6 -1v1m5 -1v1m6 -1v1m6 -1v1m5 -1v1m6 -1v1m6 -1v1m6 -1v1m5 -1v1m6 -1v1m6 -1v1m5 -1v1m6 -1v1M208.5 591v1m5 -1v1m6 -1v1m6 -1v1m5 -1v1m6 -1v1m6 -1v1m5 -1v1m6 -1v1m6 -1v1m6 -1v1m5 -1v1m6 -1v1m6 -1v1m5 -1v1m6 -1v1m6 -1v1m5 -1v1m6 -1v1m6 -1v1m5 -1v1m6 -1v1m6 -1v1m5 -1v1m6 -1v1m6 -1v1m6 -1v1m5 -1v1m6 -1v1m6 -1v1m5 -1v1m6 -1v1m6 -1v1m5 -1v1m6 -1v1m6 -1v1m5 -1v1m6 -1v1m6 -1v1m6 -1v1m5 -1v1m6 -1v1m6 -1v1m5 -1v1m6 -1v1m6 -1v1m5 -1v1m6 -1v1m6 -1v1m5 -1v1m6 -1v1m6 -1v1m6 -1v1m5 -1v1m6 -1v1m6 -1v1m5 -1v1m6 -1v1m6 -1v1m5 -1v1m6 -1v1m6 -1v1m5 -1v1m6 -1v1m6 -1v1m5 -1v1m6 -1v1m6 -1v1m6 -1v1m5 -1v1m6 -1v1m6 -1v1m5 -1v1m6 -1v1m6 -1v1m5 -1v1m6 -1v1m6 -1v1m5 -1v1m6 -1v1m6 -1v1m6 -1v1m5 -1v1m6 -1v1m6 -1v1m5 -1v1m6 -1v1m6 -1v1m5 -1v1m6 -1v1m6 -1v1m5 -1v1m6 -1v1m6 -1v1m5 -1v1m6 -1v1m6 -1v1m6 -1v1m5 -1v1m6 -1v1m6 -1v1m5 -1v1m6 -1v1m6 -1v1m5 -1v1m6 -1v1m6 -1v1m5 -1v1m6 -1v1m6 -1v1m6 -1v1m5 -1v1m6 -1v1m6 -1v1m5 -1v1m6 -1v1m6 -1v1m5 -1v1m6 -1v1m6 -1v1m5 -1v1m6 -1v1m6 -1v1m5 -1v1m6 -1v1m6 -1v1m6 -1v1m5 -1v1m6 -1v1m6 -1v1m5 -1v1m6 -1v1M208.5 648v1m5 -1v1m6 -1v1m6 -1v1m5 -1v1m6 -1v1m6 -1v1m5 -1v1m6 -1v1m6 -1v1m6 -1v1m5 -1v1m6 -1v1m6 -1v1m5 -1v1m6 -1v1m6 -1v1m5 -1v1m6 -1v1m6 -1v1m5 -1v1m6 -1v1m6 -1v1m5 -1v1m6 -1v1m6 -1v1m6 -1v1m5 -1v1m6 -1v1m6 -1v1m5 -1v1m6 -1v1m6 -1v1m5 -1v1m6 -1v1m6 -1v1m5 -1v1m6 -1v1m6 -1v1m6 -1v1m5 -1v1m6 -1v1m6 -1v1m5 -1v1m6 -1v1m6 -1v1m5 -1v1m6 -1v1m6 -1v1m5 -1v1m6 -1v1m6 -1v1m6 -1v1m5 -1v1m6 -1v1m6 -1v1m5 -1v1m6 -1v1m6 -1v1m5 -1v1m6 -1v1m6 -1v1m5 -1v1m6 -1v1m6 -1v1m5 -1v1m6 -1v1m6 -1v1m6 -1v1m5 -1v1m6 -1v1m6 -1v1m5 -1v1m6 -1v1m6 -1v1m5 -1v1m6 -1v1m6 -1v1m5 -1v1m6 -1v1m6 -1v1m6 -1v1m5 -1v1m6 -1v1m6 -1v1m5 -1v1m6 -1v1m6 -1v1m5 -1v1m6 -1v1m6 -1v1m5 -1v1m6 -1v1m6 -1v1m5 -1v1m6 -1v1m6 -1v1m6 -1v1m5 -1v1m6 -1v1m6 -1v1m5 -1v1m6 -1v1m6 -1v1m5 -1v1m6 -1v1m6 -1v1m5 -1v1m6 -1v1m6 -1v1m6 -1v1m5 -1v1m6 -1v1m6 -1v1m5 -1v1m6 -1v1m6 -1v1m5 -1v1m6 -1v1m6 -1v1m5 -1v1m6 -1v1m6 -1v1m5 -1v1m6 -1v1m6 -1v1m6 -1v1m5 -1v1m6 -1v1m6 -1v1m5 -1v1m6 -1v1M208.5 705v1m5 -1v1m6 -1v1m6 -1v1m5 -1v1m6 -1v1m6 -1v1m5 -1v1m6 -1v1m6 -1v1m6 -1v1m5 -1v1m6 -1v1m6 -1v1m5 -1v1m6 -1v1m6 -1v1m5 -1v1m6 -1v1m6 -1v1m5 -1v1m6 -1v1m6 -1v1m5 -1v1m6 -1v1m6 -1v1m6 -1v1m5 -1v1m6 -1v1m6 -1v1m5 -1v1m6 -1v1m6 -1v1m5 -1v1m6 -1v1m6 -1v1m5 -1v1m6 -1v1m6 -1v1m6 -1v1m5 -1v1m6 -1v1m6 -1v1m5 -1v1m6 -1v1m6 -1v1m5 -1v1m6 -1v1m6 -1v1m5 -1v1m6 -1v1m6 -1v1m6 -1v1m5 -1v1m6 -1v1m6 -1v1m5 -1v1m6 -1v1m6 -1v1m5 -1v1m6 -1v1m6 -1v1m5 -1v1m6 -1v1m6 -1v1m5 -1v1m6 -1v1m6 -1v1m6 -1v1m5 -1v1m6 -1v1m6 -1v1m5 -1v1m6 -1v1m6 -1v1m5 -1v1m6 -1v1m6 -1v1m5 -1v1m6 -1v1m6 -1v1m6 -1v1m5 -1v1m6 -1v1m6 -1v1m5 -1v1m6 -1v1m6 -1v1m5 -1v1m6 -1v1m6 -1v1m5 -1v1m6 -1v1m6 -1v1m5 -1v1m6 -1v1m6 -1v1m6 -1v1m5 -1v1m6 -1v1m6 -1v1m5 -1v1m6 -1v1m6 -1v1m5 -1v1m6 -1v1m6 -1v1m5 -1v1m6 -1v1m6 -1v1m6 -1v1m5 -1v1m6 -1v1m6 -1v1m5 -1v1m6 -1v1m6 -1v1m5 -1v1m6 -1v1m6 -1v1m5 -1v1m6 -1v1m6 -1v1m5 -1v1m6 -1v1m6 -1v1m6 -1v1m5 -1v1m6 -1v1m6 -1v1m5 -1v1m6 -1v1M219.5 136v1m0 5v1m0 5v1m0 4v1m0 5v1m0 5v1m0 4v1m0 5v1m0 5v1m0 4v1m0 5v1m0 5v1m0 4v1m0 5v1m0 5v1m0 5v1m0 4v1m0 5v1m0 5v1m0 4v1m0 5v1m0 5v1m0 4v1m0 5v1m0 5v1m0 4v1m0 5v1m0 5v1m0 5v1m0 4v1m0 5v1m0 5v1m0 4v1m0 5v1m0 5v1m0 4v1m0 5v1m0 5v1m0 4v1m0 5v1m0 5v1m0 4v1m0 5v1m0 5v1m0 5v1m0 4v1m0 5v1m0 5v1m0 4v1m0 5v1m0 5v1m0 4v1m0 5v1m0 5v1m0 4v1m0 5v1m0 5v1m0 5v1m0 4v1m0 5v1m0 5v1m0 4v1m0 5v1m0 5v1m0 4v1m0 5v1m0 5v1m0 4v1m0 5v1m0 5v1m0 4v1m0 5v1m0 5v1m0 5v1m0 4v1m0 5v1m0 5v1m0 4v1m0 5v1m0 5v1m0 4v1m0 5v1m0 5v1m0 4v1m0 5v1m0 5v1m0 5v1m0 4v1m0 5v1m0 5v1m0 4v1m0 5v1m0 5v1m0 4v1m0 5v1m0 5v1m0 4v1m0 5v1m0 5v1m0 5v1m0 4v1m0 5v1m0 5v1m0 4v1m0 5v1M276.5 136v1m0 5v1m0 5v1m0 4v1m0 5v1m0 5v1m0 4v1m0 5v1m0 5v1m0 4v1m0 5v1m0 5v1m0 4v1m0 5v1m0 5v1m0 5v1m0 4v1m0 5v1m0 5v1m0 4v1m0 5v1m0 5v1m0 4v1m0 5v1m0 5v1m0 4v1m0 5v1m0 5v1m0 5v1m0 4v1m0 5v1m0 5v1m0 4v1m0 5v1m0 5v1m0 4v1m0 5v1m0 5v1m0 4v1m0 5v1m0 5v1m0 4v1m0 5v1m0 5v1m0 5v1m0 4v1m0 5v1m0 5v1m0 4v1m0 5v1m0 5v1m0 4v1m0 5v1m0 5v1m0 4v1m0 5v1m0 5v1m0 5v1m0 4v1m0 5v1m0 5v1m0 4v1m0 5v1m0 5v1m0 4v1m0 5v1m0 5v1m0 4v1m0 5v1m0 5v1m0 4v1m0 5v1m0 5v1m0 5v1m0 4v1m0 5v1m0 5v1m0 4v1m0 5v1m0 5v1m0 4v1m0 5v1m0 5v1m0 4v1m0 5v1m0 5v1m0 5v1m0 4v1m0 5v1m0 5v1m0 4v1m0 5v1m0 5v1m0 4v1m0 5v1m0 5v1m0 4v1m0 5v1m0 5v1m0 5v1m0 4v1m0 5v1m0 5v1m0 4v1m0 5v1M333.5 136v1m0 5v1m0 5v1m0 4v1m0 5v1m0 5v1m0 4v1m0 5v1m0 5v1m0 4v1m0 5v1m0 5v1m0 4v1m0 5v1m0 5v1m0 5v1m0 4v1m0 5v1m0 5v1m0 4v1m0 5v1m0 5v1m0 4v1m0 5v1m0 5v1m0 4v1m0 5v1m0 5v1m0 5v1m0 4v1m0 5v1m0 5v1m0 4v1m0 5v1m0 5v1m0 4v1m0 5v1m0 5v1m0 4v1m0 5v1m0 5v1m0 4v1m0 5v1m0 5v1m0 5v1m0 4v1m0 5v1m0 5v1m0 4v1m0 5v1m0 5v1m0 4v1m0 5v1m0 5v1m0 4v1m0 5v1m0 5v1m0 5v1m0 4v1m0 5v1m0 5v1m0 4v1m0 5v1m0 5v1m0 4v1m0 5v1m0 5v1m0 4v1m0 5v1m0 5v1m0 4v1m0 5v1m0 5v1m0 5v1m0 4v1m0 5v1m0 5v1m0 4v1m0 5v1m0 5v1m0 4v1m0 5v1m0 5v1m0 4v1m0 5v1m0 5v1m0 5v1m0 4v1m0 5v1m0 5v1m0 4v1m0 5v1m0 5v1m0 4v1m0 5v1m0 5v1m0 4v1m0 5v1m0 5v1m0 5v1m0 4v1m0 5v1m0 5v1m0 4v1m0 5v1M390.5 136v1m0 5v1m0 5v1m0 4v1m0 5v1m0 5v1m0 4v1m0 5v1m0 5v1m0 4v1m0 5v1m0 5v1m0 4v1m0 5v1m0 5v1m0 5v1m0 4v1m0 5v1m0 5v1m0 4v1m0 5v1m0 5v1m0 4v1m0 5v1m0 5v1m0 4v1m0 5v1m0 5v1m0 5v1m0 4v1m0 5v1m0 5v1m0 4v1m0 5v1m0 5v1m0 4v1m0 5v1m0 5v1m0 4v1m0 5v1m0 5v1m0 4v1m0 5v1m0 5v1m0 5v1m0 4v1m0 5v1m0 5v1m0 4v1m0 5v1m0 5v1m0 4v1m0 5v1m0 5v1m0 4v1m0 5v1m0 5v1m0 5v1m0 4v1m0 5v1m0 5v1m0 4v1m0 5v1m0 5v1m0 4v1m0 5v1m0 5v1m0 4v1m0 5v1m0 5v1m0 4v1m0 5v1m0 5v1m0 5v1m0 4v1m0 5v1m0 5v1m0 4v1m0 5v1m0 5v1m0 4v1m0 5v1m0 5v1m0 4v1m0 5v1m0 5v1m0 5v1m0 4v1m0 5v1m0 5v1m0 4v1m0 5v1m0 5v1m0 4v1m0 5v1m0 5v1m0 4v1m0 5v1m0 5v1m0 5v1m0 4v1m0 5v1m0 5v1m0 4v1m0 5v1M447.5 136v1m0 5v1m0 5v1m0 4v1m0 5v1m0 5v1m0 4v1m0 5v1m0 5v1m0 4v1m0 5v1m0 5v1m0 4v1m0 5v1m0 5v1m0 5v1m0 4v1m0 5v1m0 5v1m0 4v1m0 5v1m0 5v1m0 4v1m0 5v1m0 5v1m0 4v1m0 5v1m0 5v1m0 5v1m0 4v1m0 5v1m0 5v1m0 4v1m0 5v1m0 5v1m0 4v1m0 5v1m0 5v1m0 4v1m0 5v1m0 5v1m0 4v1m0 5v1m0 5v1m0 5v1m0 4v1m0 5v1m0 5v1m0 4v1m0 5v1m0 5v1m0 4v1m0 5v1m0 5v1m0 4v1m0 5v1m0 5v1m0 5v1m0 4v1m0 5v1m0 5v1m0 4v1m0 5v1m0 5v1m0 4v1m0 5v1m0 5v1m0 4v1m0 5v1m0 5v1m0 4v1m0 5v1m0 5v1m0 5v1m0 4v1m0 5v1m0 5v1m0 4v1m0 5v1m0 5v1m0 4v1m0 5v1m0 5v1m0 4v1m0 5v1m0 5v1m0 5v1m0 4v1m0 5v1m0 5v1m0 4v1m0 5v1m0 5v1m0 4v1m0 5v1m0 5v1m0 4v1m0 5v1m0 5v1m0 5v1m0 4v1m0 5v1m0 5v1m0 4v1m0 5v1M504.5 136v1m0 5v1m0 5v1m0 4v1m0 5v1m0 5v1m0 4v1m0 5v1m0 5v1m0 4v1m0 5v1m0 5v1m0 4v1m0 5v1m0 5v1m0 5v1m0 4v1m0 5v1m0 5v1m0 4v1m0 5v1m0 5v1m0 4v1m0 5v1m0 5v1m0 4v1m0 5v1m0 5v1m0 5v1m0 4v1m0 5v1m0 5v1m0 4v1m0 5v1m0 5v1m0 4v1m0 5v1m0 5v1m0 4v1m0 5v1m0 5v1m0 4v1m0 5v1m0 5v1m0 5v1m0 4v1m0 5v1m0 5v1m0 4v1m0 5v1m0 5v1m0 4v1m0 5v1m0 5v1m0 4v1m0 5v1m0 5v1m0 5v1m0 4v1m0 5v1m0 5v1m0 4v1m0 5v1m0 5v1m0 4v1m0 5v1m0 5v1m0 4v1m0 5v1m0 5v1m0 4v1m0 5v1m0 5v1m0 5v1m0 4v1m0 5v1m0 5v1m0 4v1m0 5v1m0 5v1m0 4v1m0 5v1m0 5v1m0 4v1m0 5v1m0 5v1m0 5v1m0 4v1m0 5v1m0 5v1m0 4v1m0 5v1m0 5v1m0 4v1m0 5v1m0 5v1m0 4v1m0 5v1m0 5v1m0 5v1m0 4v1m0 5v1m0 5v1m0 4v1m0 5v1M560.5 136v1m0 5v1m0 5v1m0 4v1m0 5v1m0 5v1m0 4v1m0 5v1m0 5v1m0 4v1m0 5v1m0 5v1m0 4v1m0 5v1m0 5v1m0 5v1m0 4v1m0 5v1m0 5v1m0 4v1m0 5v1m0 5v1m0 4v1m0 5v1m0 5v1m0 4v1m0 5v1m0 5v1m0 5v1m0 4v1m0 5v1m0 5v1m0 4v1m0 5v1m0 5v1m0 4v1m0 5v1m0 5v1m0 4v1m0 5v1m0 5v1m0 4v1m0 5v1m0 5v1m0 5v1m0 4v1m0 5v1m0 5v1m0 4v1m0 5v1m0 5v1m0 4v1m0 5v1m0 5v1m0 4v1m0 5v1m0 5v1m0 5v1m0 4v1m0 5v1m0 5v1m0 4v1m0 5v1m0 5v1m0 4v1m0 5v1m0 5v1m0 4v1m0 5v1m0 5v1m0 4v1m0 5v1m0 5v1m0 5v1m0 4v1m0 5v1m0 5v1m0 4v1m0 5v1m0 5v1m0 4v1m0 5v1m0 5v1m0 4v1m0 5v1m0 5v1m0 5v1m0 4v1m0 5v1m0 5v1m0 4v1m0 5v1m0 5v1m0 4v1m0 5v1m0 5v1m0 4v1m0 5v1m0 5v1m0 5v1m0 4v1m0 5v1m0 5v1m0 4v1m0 5v1M617.5 136v1m0 5v1m0 5v1m0 4v1m0 5v1m0 5v1m0 4v1m0 5v1m0 5v1m0 4v1m0 5v1m0 5v1m0 4v1m0 5v1m0 5v1m0 5v1m0 4v1m0 5v1m0 5v1m0 4v1m0 5v1m0 5v1m0 4v1m0 5v1m0 5v1m0 4v1m0 5v1m0 5v1m0 5v1m0 4v1m0 5v1m0 5v1m0 4v1m0 5v1m0 5v1m0 4v1m0 5v1m0 5v1m0 4v1m0 5v1m0 5v1m0 4v1m0 5v1m0 5v1m0 5v1m0 4v1m0 5v1m0 5v1m0 4v1m0 5v1m0 5v1m0 4v1m0 5v1m0 5v1m0 4v1m0 5v1m0 5v1m0 5v1m0 4v1m0 5v1m0 5v1m0 4v1m0 5v1m0 5v1m0 4v1m0 5v1m0 5v1m0 4v1m0 5v1m0 5v1m0 4v1m0 5v1m0 5v1m0 5v1m0 4v1m0 5v1m0 5v1m0 4v1m0 5v1m0 5v1m0 4v1m0 5v1m0 5v1m0 4v1m0 5v1m0 5v1m0 5v1m0 4v1m0 5v1m0 5v1m0 4v1m0 5v1m0 5v1m0 4v1m0 5v1m0 5v1m0 4v1m0 5v1m0 5v1m0 5v1m0 4v1m0 5v1m0 5v1m0 4v1m0 5v1M674.5 136v1m0 5v1m0 5v1m0 4v1m0 5v1m0 5v1m0 4v1m0 5v1m0 5v1m0 4v1m0 5v1m0 5v1m0 4v1m0 5v1m0 5v1m0 5v1m0 4v1m0 5v1m0 5v1m0 4v1m0 5v1m0 5v1m0 4v1m0 5v1m0 5v1m0 4v1m0 5v1m0 5v1m0 5v1m0 4v1m0 5v1m0 5v1m0 4v1m0 5v1m0 5v1m0 4v1m0 5v1m0 5v1m0 4v1m0 5v1m0 5v1m0 4v1m0 5v1m0 5v1m0 5v1m0 4v1m0 5v1m0 5v1m0 4v1m0 5v1m0 5v1m0 4v1m0 5v1m0 5v1m0 4v1m0 5v1m0 5v1m0 5v1m0 4v1m0 5v1m0 5v1m0 4v1m0 5v1m0 5v1m0 4v1m0 5v1m0 5v1m0 4v1m0 5v1m0 5v1m0 4v1m0 5v1m0 5v1m0 5v1m0 4v1m0 5v1m0 5v1m0 4v1m0 5v1m0 5v1m0 4v1m0 5v1m0 5v1m0 4v1m0 5v1m0 5v1m0 5v1m0 4v1m0 5v1m0 5v1m0 4v1m0 5v1m0 5v1m0 4v1m0 5v1m0 5v1m0 4v1m0 5v1m0 5v1m0 5v1m0 4v1m0 5v1m0 5v1m0 4v1m0 5v1M731.5 136v1m0 5v1m0 5v1m0 4v1m0 5v1m0 5v1m0 4v1m0 5v1m0 5v1m0 4v1m0 5v1m0 5v1m0 4v1m0 5v1m0 5v1m0 5v1m0 4v1m0 5v1m0 5v1m0 4v1m0 5v1m0 5v1m0 4v1m0 5v1m0 5v1m0 4v1m0 5v1m0 5v1m0 5v1m0 4v1m0 5v1m0 5v1m0 4v1m0 5v1m0 5v1m0 4v1m0 5v1m0 5v1m0 4v1m0 5v1m0 5v1m0 4v1m0 5v1m0 5v1m0 5v1m0 4v1m0 5v1m0 5v1m0 4v1m0 5v1m0 5v1m0 4v1m0 5v1m0 5v1m0 4v1m0 5v1m0 5v1m0 5v1m0 4v1m0 5v1m0 5v1m0 4v1m0 5v1m0 5v1m0 4v1m0 5v1m0 5v1m0 4v1m0 5v1m0 5v1m0 4v1m0 5v1m0 5v1m0 5v1m0 4v1m0 5v1m0 5v1m0 4v1m0 5v1m0 5v1m0 4v1m0 5v1m0 5v1m0 4v1m0 5v1m0 5v1m0 5v1m0 4v1m0 5v1m0 5v1m0 4v1m0 5v1m0 5v1m0 4v1m0 5v1m0 5v1m0 4v1m0 5v1m0 5v1m0 5v1m0 4v1m0 5v1m0 5v1m0 4v1m0 5v1M788.5 136v1m0 5v1m0 5v1m0 4v1m0 5v1m0 5v1m0 4v1m0 5v1m0 5v1m0 4v1m0 5v1m0 5v1m0 4v1m0 5v1m0 5v1m0 5v1m0 4v1m0 5v1m0 5v1m0 4v1m0 5v1m0 5v1m0 4v1m0 5v1m0 5v1m0 4v1m0 5v1m0 5v1m0 5v1m0 4v1m0 5v1m0 5v1m0 4v1m0 5v1m0 5v1m0 4v1m0 5v1m0 5v1m0 4v1m0 5v1m0 5v1m0 4v1m0 5v1m0 5v1m0 5v1m0 4v1m0 5v1m0 5v1m0 4v1m0 5v1m0 5v1m0 4v1m0 5v1m0 5v1m0 4v1m0 5v1m0 5v1m0 5v1m0 4v1m0 5v1m0 5v1m0 4v1m0 5v1m0 5v1m0 4v1m0 5v1m0 5v1m0 4v1m0 5v1m0 5v1m0 4v1m0 5v1m0 5v1m0 5v1m0 4v1m0 5v1m0 5v1m0 4v1m0 5v1m0 5v1m0 4v1m0 5v1m0 5v1m0 4v1m0 5v1m0 5v1m0 5v1m0 4v1m0 5v1m0 5v1m0 4v1m0 5v1m0 5v1m0 4v1m0 5v1m0 5v1m0 4v1m0 5v1m0 5v1m0 5v1m0 4v1m0 5v1m0 5v1m0 4v1m0 5v1M845.5 136v1m0 5v1m0 5v1m0 4v1m0 5v1m0 5v1m0 4v1m0 5v1m0 5v1m0 4v1m0 5v1m0 5v1m0 4v1m0 5v1m0 5v1m0 5v1m0 4v1m0 5v1m0 5v1m0 4v1m0 5v1m0 5v1m0 4v1m0 5v1m0 5v1m0 4v1m0 5v1m0 5v1m0 5v1m0 4v1m0 5v1m0 5v1m0 4v1m0 5v1m0 5v1m0 4v1m0 5v1m0 5v1m0 4v1m0 5v1m0 5v1m0 4v1m0 5v1m0 5v1m0 5v1m0 4v1m0 5v1m0 5v1m0 4v1m0 5v1m0 5v1m0 4v1m0 5v1m0 5v1m0 4v1m0 5v1m0 5v1m0 5v1m0 4v1m0 5v1m0 5v1m0 4v1m0 5v1m0 5v1m0 4v1m0 5v1m0 5v1m0 4v1m0 5v1m0 5v1m0 4v1m0 5v1m0 5v1m0 5v1m0 4v1m0 5v1m0 5v1m0 4v1m0 5v1m0 5v1m0 4v1m0 5v1m0 5v1m0 4v1m0 5v1m0 5v1m0 5v1m0 4v1m0 5v1m0 5v1m0 4v1m0 5v1m0 5v1m0 4v1m0 5v1m0 5v1m0 4v1m0 5v1m0 5v1m0 5v1m0 4v1m0 5v1m0 5v1m0 4v1m0 5v1M902.5 136v1m0 5v1m0 5v1m0 4v1m0 5v1m0 5v1m0 4v1m0 5v1m0 5v1m0 4v1m0 5v1m0 5v1m0 4v1m0 5v1m0 5v1m0 5v1m0 4v1m0 5v1m0 5v1m0 4v1m0 5v1m0 5v1m0 4v1m0 5v1m0 5v1m0 4v1m0 5v1m0 5v1m0 5v1m0 4v1m0 5v1m0 5v1m0 4v1m0 5v1m0 5v1m0 4v1m0 5v1m0 5v1m0 4v1m0 5v1m0 5v1m0 4v1m0 5v1m0 5v1m0 5v1m0 4v1m0 5v1m0 5v1m0 4v1m0 5v1m0 5v1m0 4v1m0 5v1m0 5v1m0 4v1m0 5v1m0 5v1m0 5v1m0 4v1m0 5v1m0 5v1m0 4v1m0 5v1m0 5v1m0 4v1m0 5v1m0 5v1m0 4v1m0 5v1m0 5v1m0 4v1m0 5v1m0 5v1m0 5v1m0 4v1m0 5v1m0 5v1m0 4v1m0 5v1m0 5v1m0 4v1m0 5v1m0 5v1m0 4v1m0 5v1m0 5v1m0 5v1m0 4v1m0 5v1m0 5v1m0 4v1m0 5v1m0 5v1m0 4v1m0 5v1m0 5v1m0 4v1m0 5v1m0 5v1m0 5v1m0 4v1m0 5v1m0 5v1m0 4v1m0 5v1"/></svg><svg style="position:absolute;left:237px;top:180px" width="676" height="483" viewBox="0 0 676 483" shape-rendering="crispEdges"><defs><pattern id="tT0" patternUnits="userSpaceOnUse" width="15" height="24"><rect x="0" y="2" width="1" height="4" fill="#1a9e1a"/><rect x="1" y="2" width="1" height="3" fill="#ffffff"/><rect x="1" y="5" width="1" height="1" fill="#f2804c"/><rect x="2" y="2" width="1" height="1" fill="#ffffff"/><rect x="2" y="3" width="1" height="3" fill="#f2804c"/><rect x="3" y="2" width="1" height="4" fill="#1a9e1a"/><rect x="4" y="2" width="1" height="1" fill="#1a9e1a"/><rect x="4" y="3" width="1" height="3" fill="#f2804c"/><rect x="5" y="2" width="1" height="1" fill="#1a9e1a"/><rect x="5" y="3" width="1" height="2" fill="#f2804c"/><rect x="5" y="5" width="1" height="1" fill="#1a9e1a"/><rect x="6" y="2" width="1" height="4" fill="#1a9e1a"/><rect x="7" y="5" width="1" height="1" fill="#1a9e1a"/><rect x="8" y="2" width="1" height="1" fill="#ffffff"/><rect x="8" y="3" width="1" height="3" fill="#f2804c"/><rect x="9" y="2" width="1" height="4" fill="#1a9e1a"/><rect x="10" y="2" width="1" height="1" fill="#1a9e1a"/><rect x="11" y="2" width="1" height="1" fill="#1a9e1a"/><rect x="11" y="5" width="1" height="1" fill="#1a9e1a"/><rect x="12" y="2" width="1" height="4" fill="#1a9e1a"/><rect x="13" y="2" width="1" height="4" fill="#ffffff"/><rect x="14" y="2" width="1" height="3" fill="#ffffff"/><rect x="14" y="5" width="1" height="1" fill="#1a9e1a"/></pattern><pattern id="mT0" patternUnits="userSpaceOnUse" width="15" height="24"><rect x="0" y="7" width="1" height="3" fill="#1a9e1a"/><rect x="1" y="7" width="1" height="3" fill="#ffffff"/><rect x="2" y="7" width="1" height="3" fill="#f2804c"/><rect x="4" y="7" width="1" height="3" fill="#f2804c"/><rect x="5" y="7" width="1" height="3" fill="#f2804c"/><rect x="7" y="7" width="1" height="3" fill="#30289a"/><rect x="8" y="7" width="1" height="3" fill="#30289a"/><rect x="10" y="7" width="1" height="3" fill="#ffffff"/><rect x="11" y="7" width="1" height="3" fill="#f2804c"/><rect x="12" y="7" width="1" height="3" fill="#1a9e1a"/><rect x="14" y="7" width="1" height="3" fill="#ffffff"/></pattern><pattern id="tT1" patternUnits="userSpaceOnUse" width="15" height="24"><rect x="0" y="2" width="1" height="4" fill="#1a9e1a"/><rect x="1" y="2" width="1" height="4" fill="#ffffff"/><rect x="2" y="2" width="1" height="1" fill="#1a9e1a"/><rect x="2" y="3" width="1" height="3" fill="#ffffff"/><rect x="3" y="2" width="1" height="4" fill="#1a9e1a"/><rect x="4" y="2" width="1" height="4" fill="#ffffff"/><rect x="5" y="2" width="1" height="3" fill="#ffffff"/><rect x="5" y="5" width="1" height="1" fill="#1a9e1a"/><rect x="6" y="2" width="1" height="4" fill="#1a9e1a"/><rect x="8" y="2" width="1" height="4" fill="#ffffff"/><rect x="9" y="2" width="1" height="4" fill="#1a9e1a"/><rect x="10" y="2" width="1" height="2" fill="#ffffff"/><rect x="10" y="4" width="1" height="1" fill="#f2804c"/><rect x="10" y="5" width="1" height="1" fill="#1a9e1a"/><rect x="11" y="2" width="1" height="1" fill="#1a9e1a"/><rect x="12" y="2" width="1" height="4" fill="#1a9e1a"/><rect x="13" y="2" width="1" height="1" fill="#1a9e1a"/><rect x="14" y="2" width="1" height="1" fill="#1a9e1a"/><rect x="14" y="3" width="1" height="3" fill="#f2804c"/></pattern><pattern id="mT1" patternUnits="userSpaceOnUse" width="15" height="24"><rect x="0" y="7" width="1" height="3" fill="#1a9e1a"/><rect x="1" y="7" width="1" height="3" fill="#1a9e1a"/><rect x="4" y="7" width="1" height="3" fill="#1a9e1a"/><rect x="5" y="7" width="1" height="3" fill="#ffffff"/><rect x="7" y="7" width="1" height="3" fill="#1a9e1a"/><rect x="8" y="7" width="1" height="3" fill="#f2804c"/><rect x="9" y="7" width="1" height="3" fill="#1a9e1a"/><rect x="12" y="7" width="1" height="3" fill="#1a9e1a"/><rect x="13" y="7" width="1" height="3" fill="#1a9e1a"/><rect x="14" y="7" width="1" height="3" fill="#ffffff"/></pattern><pattern id="tT2" patternUnits="userSpaceOnUse" width="15" height="24"><rect x="0" y="2" width="1" height="4" fill="#1a9e1a"/><rect x="1" y="2" width="1" height="3" fill="#f2804c"/><rect x="1" y="5" width="1" height="1" fill="#1a9e1a"/><rect x="2" y="2" width="1" height="1" fill="#ffffff"/><rect x="2" y="3" width="1" height="3" fill="#f2804c"/><rect x="3" y="2" width="1" height="4" fill="#1a9e1a"/><rect x="4" y="2" width="1" height="1" fill="#1a9e1a"/><rect x="4" y="3" width="1" height="3" fill="#f2804c"/><rect x="5" y="2" width="1" height="4" fill="#ffffff"/><rect x="6" y="2" width="1" height="4" fill="#1a9e1a"/><rect x="8" y="2" width="1" height="1" fill="#1a9e1a"/><rect x="8" y="3" width="1" height="1" fill="#ffffff"/><rect x="8" y="4" width="1" height="2" fill="#f2804c"/><rect x="10" y="2" width="1" height="4" fill="#ffffff"/><rect x="11" y="2" width="1" height="4" fill="#ffffff"/><rect x="12" y="2" width="1" height="4" fill="#1a9e1a"/><rect x="13" y="2" width="1" height="4" fill="#f2804c"/><rect x="14" y="2" width="1" height="1" fill="#1a9e1a"/><rect x="14" y="3" width="1" height="3" fill="#f2804c"/></pattern><pattern id="mT2" patternUnits="userSpaceOnUse" width="15" height="24"><rect x="1" y="7" width="1" height="3" fill="#ffffff"/><rect x="2" y="7" width="1" height="3" fill="#f2804c"/><rect x="6" y="7" width="1" height="3" fill="#1a9e1a"/><rect x="10" y="7" width="1" height="3" fill="#f2804c"/><rect x="11" y="7" width="1" height="3" fill="#ffffff"/><rect x="13" y="7" width="1" height="3" fill="#30289a"/></pattern><pattern id="tT3" patternUnits="userSpaceOnUse" width="15" height="24"><rect x="0" y="2" width="1" height="4" fill="#1a9e1a"/><rect x="1" y="2" width="1" height="4" fill="#ffffff"/><rect x="2" y="2" width="1" height="1" fill="#1a9e1a"/><rect x="2" y="3" width="1" height="3" fill="#ffffff"/><rect x="4" y="2" width="1" height="3" fill="#f2804c"/><rect x="4" y="5" width="1" height="1" fill="#1a9e1a"/><rect x="5" y="2" width="1" height="1" fill="#1a9e1a"/><rect x="6" y="2" width="1" height="4" fill="#1a9e1a"/><rect x="7" y="2" width="1" height="3" fill="#ffffff"/><rect x="7" y="5" width="1" height="1" fill="#1a9e1a"/><rect x="8" y="2" width="1" height="4" fill="#ffffff"/><rect x="9" y="2" width="1" height="4" fill="#1a9e1a"/><rect x="10" y="2" width="1" height="1" fill="#1a9e1a"/><rect x="10" y="3" width="1" height="1" fill="#ffffff"/><rect x="10" y="4" width="1" height="2" fill="#f2804c"/><rect x="11" y="2" width="1" height="4" fill="#f2804c"/><rect x="12" y="2" width="1" height="4" fill="#1a9e1a"/><rect x="13" y="2" width="1" height="1" fill="#1a9e1a"/><rect x="13" y="3" width="1" height="2" fill="#ffffff"/><rect x="13" y="5" width="1" height="1" fill="#f2804c"/><rect x="14" y="2" width="1" height="4" fill="#ffffff"/></pattern><pattern id="mT3" patternUnits="userSpaceOnUse" width="15" height="24"><rect x="1" y="7" width="1" height="3" fill="#1a9e1a"/><rect x="5" y="7" width="1" height="3" fill="#ffffff"/><rect x="7" y="7" width="1" height="3" fill="#1a9e1a"/><rect x="9" y="7" width="1" height="3" fill="#1a9e1a"/><rect x="10" y="7" width="1" height="3" fill="#1a9e1a"/><rect x="11" y="7" width="1" height="3" fill="#f2804c"/><rect x="12" y="7" width="1" height="3" fill="#1a9e1a"/><rect x="14" y="7" width="1" height="3" fill="#ffffff"/></pattern><pattern id="tT4" patternUnits="userSpaceOnUse" width="15" height="24"><rect x="0" y="2" width="1" height="4" fill="#1a9e1a"/><rect x="1" y="2" width="1" height="1" fill="#1a9e1a"/><rect x="1" y="3" width="1" height="3" fill="#ffffff"/><rect x="3" y="2" width="1" height="4" fill="#1a9e1a"/><rect x="5" y="2" width="1" height="4" fill="#ffffff"/><rect x="6" y="2" width="1" height="4" fill="#1a9e1a"/><rect x="7" y="2" width="1" height="1" fill="#1a9e1a"/><rect x="7" y="3" width="1" height="3" fill="#ffffff"/><rect x="8" y="2" width="1" height="4" fill="#f2804c"/><rect x="9" y="2" width="1" height="4" fill="#1a9e1a"/><rect x="10" y="2" width="1" height="3" fill="#f2804c"/><rect x="10" y="5" width="1" height="1" fill="#1a9e1a"/><rect x="11" y="2" width="1" height="1" fill="#1a9e1a"/><rect x="11" y="3" width="1" height="3" fill="#ffffff"/><rect x="12" y="2" width="1" height="4" fill="#1a9e1a"/><rect x="13" y="2" width="1" height="1" fill="#1a9e1a"/><rect x="13" y="3" width="1" height="3" fill="#f2804c"/><rect x="14" y="2" width="1" height="1" fill="#1a9e1a"/><rect x="14" y="3" width="1" height="3" fill="#f2804c"/></pattern><pattern id="mT4" patternUnits="userSpaceOnUse" width="15" height="24"><rect x="0" y="7" width="1" height="3" fill="#1a9e1a"/><rect x="2" y="7" width="1" height="3" fill="#30289a"/><rect x="3" y="7" width="1" height="3" fill="#1a9e1a"/><rect x="5" y="7" width="1" height="3" fill="#f2804c"/><rect x="7" y="7" width="1" height="3" fill="#ffffff"/><rect x="8" y="7" width="1" height="3" fill="#30289a"/><rect x="10" y="7" width="1" height="3" fill="#f2804c"/><rect x="11" y="7" width="1" height="3" fill="#f2804c"/><rect x="12" y="7" width="1" height="3" fill="#1a9e1a"/><rect x="14" y="7" width="1" height="3" fill="#f2804c"/></pattern><pattern id="tM0" patternUnits="userSpaceOnUse" width="15" height="24"><rect x="0" y="6" width="1" height="4" fill="#1a9e1a"/><rect x="1" y="6" width="1" height="4" fill="#ffffff"/><rect x="2" y="6" width="1" height="1" fill="#1a9e1a"/><rect x="2" y="7" width="1" height="2" fill="#ffffff"/><rect x="2" y="9" width="1" height="1" fill="#1a9e1a"/><rect x="3" y="6" width="1" height="4" fill="#1a9e1a"/><rect x="4" y="6" width="1" height="3" fill="#f2804c"/><rect x="4" y="9" width="1" height="1" fill="#1a9e1a"/><rect x="5" y="6" width="1" height="1" fill="#1a9e1a"/><rect x="5" y="7" width="1" height="3" fill="#f2804c"/><rect x="6" y="6" width="1" height="4" fill="#1a9e1a"/><rect x="7" y="6" width="1" height="1" fill="#1a9e1a"/><rect x="7" y="7" width="1" height="1" fill="#ffffff"/><rect x="7" y="8" width="1" height="2" fill="#f2804c"/><rect x="8" y="6" width="1" height="4" fill="#f2804c"/><rect x="9" y="6" width="1" height="4" fill="#1a9e1a"/><rect x="10" y="6" width="1" height="4" fill="#ffffff"/><rect x="11" y="6" width="1" height="1" fill="#1a9e1a"/><rect x="11" y="7" width="1" height="3" fill="#f2804c"/><rect x="12" y="6" width="1" height="4" fill="#1a9e1a"/><rect x="13" y="6" width="1" height="1" fill="#1a9e1a"/><rect x="13" y="7" width="1" height="3" fill="#f2804c"/><rect x="14" y="6" width="1" height="1" fill="#1a9e1a"/><rect x="14" y="7" width="1" height="3" fill="#f2804c"/></pattern><pattern id="mM0" patternUnits="userSpaceOnUse" width="15" height="24"><rect x="2" y="2" width="1" height="3" fill="#30289a"/><rect x="3" y="2" width="1" height="3" fill="#1a9e1a"/><rect x="5" y="2" width="1" height="3" fill="#f2804c"/><rect x="9" y="2" width="1" height="3" fill="#1a9e1a"/><rect x="11" y="2" width="1" height="3" fill="#f2804c"/><rect x="12" y="2" width="1" height="3" fill="#1a9e1a"/><rect x="14" y="2" width="1" height="3" fill="#ffffff"/></pattern><pattern id="tM1" patternUnits="userSpaceOnUse" width="15" height="24"><rect x="0" y="6" width="1" height="4" fill="#1a9e1a"/><rect x="1" y="6" width="1" height="4" fill="#ffffff"/><rect x="2" y="6" width="1" height="1" fill="#1a9e1a"/><rect x="2" y="7" width="1" height="3" fill="#f2804c"/><rect x="4" y="6" width="1" height="4" fill="#ffffff"/><rect x="5" y="6" width="1" height="1" fill="#1a9e1a"/><rect x="5" y="7" width="1" height="2" fill="#f2804c"/><rect x="5" y="9" width="1" height="1" fill="#1a9e1a"/><rect x="6" y="6" width="1" height="4" fill="#1a9e1a"/><rect x="7" y="6" width="1" height="1" fill="#ffffff"/><rect x="7" y="7" width="1" height="3" fill="#f2804c"/><rect x="8" y="6" width="1" height="1" fill="#1a9e1a"/><rect x="8" y="7" width="1" height="3" fill="#ffffff"/><rect x="9" y="6" width="1" height="4" fill="#1a9e1a"/><rect x="10" y="6" width="1" height="1" fill="#1a9e1a"/><rect x="10" y="7" width="1" height="3" fill="#f2804c"/><rect x="11" y="6" width="1" height="1" fill="#1a9e1a"/><rect x="11" y="7" width="1" height="2" fill="#f2804c"/><rect x="11" y="9" width="1" height="1" fill="#1a9e1a"/><rect x="12" y="6" width="1" height="4" fill="#1a9e1a"/><rect x="13" y="6" width="1" height="1" fill="#ffffff"/><rect x="13" y="7" width="1" height="2" fill="#f2804c"/><rect x="13" y="9" width="1" height="1" fill="#1a9e1a"/><rect x="14" y="6" width="1" height="3" fill="#ffffff"/><rect x="14" y="9" width="1" height="1" fill="#1a9e1a"/></pattern><pattern id="mM1" patternUnits="userSpaceOnUse" width="15" height="24"><rect x="0" y="2" width="1" height="3" fill="#1a9e1a"/><rect x="1" y="2" width="1" height="3" fill="#ffffff"/><rect x="3" y="2" width="1" height="3" fill="#1a9e1a"/><rect x="4" y="2" width="1" height="3" fill="#ffffff"/><rect x="5" y="2" width="1" height="3" fill="#f2804c"/><rect x="6" y="2" width="1" height="3" fill="#1a9e1a"/><rect x="7" y="2" width="1" height="3" fill="#ffffff"/><rect x="8" y="2" width="1" height="3" fill="#30289a"/><rect x="11" y="2" width="1" height="3" fill="#ffffff"/><rect x="12" y="2" width="1" height="3" fill="#1a9e1a"/><rect x="13" y="2" width="1" height="3" fill="#f2804c"/></pattern><pattern id="tM2" patternUnits="userSpaceOnUse" width="15" height="24"><rect x="1" y="6" width="1" height="1" fill="#1a9e1a"/><rect x="1" y="7" width="1" height="3" fill="#ffffff"/><rect x="2" y="6" width="1" height="4" fill="#ffffff"/><rect x="4" y="6" width="1" height="4" fill="#f2804c"/><rect x="5" y="6" width="1" height="1" fill="#1a9e1a"/><rect x="5" y="7" width="1" height="3" fill="#f2804c"/><rect x="6" y="6" width="1" height="4" fill="#1a9e1a"/><rect x="7" y="6" width="1" height="1" fill="#1a9e1a"/><rect x="7" y="7" width="1" height="3" fill="#ffffff"/><rect x="8" y="6" width="1" height="1" fill="#1a9e1a"/><rect x="8" y="7" width="1" height="2" fill="#f2804c"/><rect x="8" y="9" width="1" height="1" fill="#1a9e1a"/><rect x="9" y="6" width="1" height="4" fill="#1a9e1a"/><rect x="10" y="6" width="1" height="1" fill="#1a9e1a"/><rect x="10" y="7" width="1" height="3" fill="#f2804c"/><rect x="11" y="6" width="1" height="4" fill="#f2804c"/><rect x="12" y="6" width="1" height="4" fill="#1a9e1a"/><rect x="13" y="6" width="1" height="1" fill="#1a9e1a"/><rect x="14" y="6" width="1" height="1" fill="#1a9e1a"/><rect x="14" y="7" width="1" height="3" fill="#f2804c"/></pattern><pattern id="mM2" patternUnits="userSpaceOnUse" width="15" height="24"><rect x="0" y="2" width="1" height="3" fill="#1a9e1a"/><rect x="3" y="2" width="1" height="3" fill="#1a9e1a"/><rect x="5" y="2" width="1" height="3" fill="#30289a"/><rect x="6" y="2" width="1" height="3" fill="#1a9e1a"/><rect x="8" y="2" width="1" height="3" fill="#f2804c"/><rect x="10" y="2" width="1" height="3" fill="#f2804c"/><rect x="14" y="2" width="1" height="3" fill="#f2804c"/></pattern><pattern id="tM3" patternUnits="userSpaceOnUse" width="15" height="24"><rect x="0" y="6" width="1" height="4" fill="#1a9e1a"/><rect x="1" y="6" width="1" height="4" fill="#ffffff"/><rect x="2" y="6" width="1" height="1" fill="#1a9e1a"/><rect x="2" y="7" width="1" height="3" fill="#ffffff"/><rect x="3" y="6" width="1" height="4" fill="#1a9e1a"/><rect x="4" y="6" width="1" height="1" fill="#1a9e1a"/><rect x="4" y="7" width="1" height="2" fill="#ffffff"/><rect x="4" y="9" width="1" height="1" fill="#1a9e1a"/><rect x="5" y="6" width="1" height="1" fill="#1a9e1a"/><rect x="5" y="7" width="1" height="3" fill="#ffffff"/><rect x="7" y="6" width="1" height="1" fill="#1a9e1a"/><rect x="7" y="7" width="1" height="1" fill="#ffffff"/><rect x="7" y="8" width="1" height="2" fill="#f2804c"/><rect x="9" y="6" width="1" height="4" fill="#1a9e1a"/><rect x="10" y="6" width="1" height="1" fill="#1a9e1a"/><rect x="10" y="7" width="1" height="2" fill="#ffffff"/><rect x="10" y="9" width="1" height="1" fill="#1a9e1a"/><rect x="11" y="6" width="1" height="1" fill="#1a9e1a"/><rect x="11" y="7" width="1" height="3" fill="#ffffff"/><rect x="12" y="6" width="1" height="4" fill="#1a9e1a"/><rect x="13" y="6" width="1" height="1" fill="#1a9e1a"/><rect x="13" y="7" width="1" height="2" fill="#ffffff"/><rect x="13" y="9" width="1" height="1" fill="#1a9e1a"/><rect x="14" y="6" width="1" height="1" fill="#1a9e1a"/><rect x="14" y="7" width="1" height="3" fill="#ffffff"/></pattern><pattern id="mM3" patternUnits="userSpaceOnUse" width="15" height="24"><rect x="1" y="2" width="1" height="3" fill="#1a9e1a"/><rect x="5" y="2" width="1" height="3" fill="#30289a"/><rect x="7" y="2" width="1" height="3" fill="#1a9e1a"/><rect x="9" y="2" width="1" height="3" fill="#1a9e1a"/><rect x="12" y="2" width="1" height="3" fill="#1a9e1a"/><rect x="13" y="2" width="1" height="3" fill="#1a9e1a"/><rect x="14" y="2" width="1" height="3" fill="#ffffff"/></pattern><pattern id="tM4" patternUnits="userSpaceOnUse" width="15" height="24"><rect x="0" y="6" width="1" height="4" fill="#1a9e1a"/><rect x="1" y="6" width="1" height="4" fill="#f2804c"/><rect x="2" y="6" width="1" height="4" fill="#ffffff"/><rect x="3" y="6" width="1" height="4" fill="#1a9e1a"/><rect x="4" y="6" width="1" height="1" fill="#ffffff"/><rect x="4" y="7" width="1" height="2" fill="#f2804c"/><rect x="4" y="9" width="1" height="1" fill="#1a9e1a"/><rect x="5" y="6" width="1" height="1" fill="#1a9e1a"/><rect x="5" y="7" width="1" height="3" fill="#ffffff"/><rect x="6" y="6" width="1" height="4" fill="#1a9e1a"/><rect x="7" y="6" width="1" height="4" fill="#ffffff"/><rect x="8" y="6" width="1" height="1" fill="#1a9e1a"/><rect x="8" y="7" width="1" height="3" fill="#f2804c"/><rect x="10" y="6" width="1" height="1" fill="#1a9e1a"/><rect x="10" y="7" width="1" height="2" fill="#f2804c"/><rect x="10" y="9" width="1" height="1" fill="#1a9e1a"/><rect x="11" y="6" width="1" height="4" fill="#ffffff"/><rect x="13" y="6" width="1" height="1" fill="#1a9e1a"/><rect x="13" y="7" width="1" height="2" fill="#ffffff"/><rect x="13" y="9" width="1" height="1" fill="#1a9e1a"/><rect x="14" y="6" width="1" height="1" fill="#1a9e1a"/><rect x="14" y="7" width="1" height="3" fill="#f2804c"/></pattern><pattern id="mM4" patternUnits="userSpaceOnUse" width="15" height="24"><rect x="0" y="2" width="1" height="3" fill="#1a9e1a"/><rect x="1" y="2" width="1" height="3" fill="#ffffff"/><rect x="2" y="2" width="1" height="3" fill="#ffffff"/><rect x="4" y="2" width="1" height="3" fill="#ffffff"/><rect x="5" y="2" width="1" height="3" fill="#30289a"/><rect x="6" y="2" width="1" height="3" fill="#1a9e1a"/><rect x="7" y="2" width="1" height="3" fill="#30289a"/><rect x="8" y="2" width="1" height="3" fill="#ffffff"/><rect x="9" y="2" width="1" height="3" fill="#1a9e1a"/><rect x="10" y="2" width="1" height="3" fill="#ffffff"/><rect x="11" y="2" width="1" height="3" fill="#30289a"/><rect x="13" y="2" width="1" height="3" fill="#30289a"/></pattern><pattern id="rl" patternUnits="userSpaceOnUse" width="11" height="24"><rect x="0" y="0" width="2" height="1" fill="#1a9e1a"/><rect x="2" y="0" width="1" height="1" fill="#ffffff"/><rect x="7" y="0" width="2" height="1" fill="#1a9e1a"/></pattern></defs><rect x="0" y="0" width="676" height="483" fill="#2ccf9c"/><path fill="#c24cf2" d="M0 12H676V14H0zM0 34H676V36H0zM0 56H676V58H0zM0 79H676V81H0zM0 101H676V103H0zM0 123H676V125H0zM0 145H676V147H0zM0 167H676V169H0zM0 190H676V192H0zM0 212H676V214H0zM0 234H676V236H0zM0 256H676V258H0zM0 278H676V280H0zM0 300H676V302H0zM0 323H676V325H0zM0 345H676V347H0zM0 367H676V369H0zM0 389H676V391H0zM0 411H676V413H0zM0 434H676V436H0zM0 456H676V458H0zM0 478H676V480H0zM4 8h9v5h-9zM70 8h9v5h-9zM79 8h9v5h-9zM86 8h9v5h-9zM97 8h9v5h-9zM106 8h9v5h-9zM105 8h9v5h-9zM215 8h9v5h-9zM223 8h9v5h-9zM229 8h9v5h-9zM300 8h9v5h-9zM308 8h9v5h-9zM323 8h9v5h-9zM331 8h9v5h-9zM337 8h9v5h-9zM357 8h9v5h-9zM386 8h9v5h-9zM652 8h9v5h-9zM659 8h9v5h-9zM32 9h27v4h-27zM59 9h6v4h-6zM65 9h15v4h-15zM80 9h42v4h-42zM122 9h48v4h-48zM194 9h18v4h-18zM221 9h48v4h-48zM281 9h15v4h-15zM308 9h18v4h-18zM356 9h15v4h-15zM431 9h12v4h-12zM527 9h15v4h-15zM572 9h36v4h-36zM3 13h9v6h-9zM20 13h9v6h-9zM29 13h9v6h-9zM34 13h9v6h-9zM44 13h9v6h-9zM48 13h9v6h-9zM60 13h9v6h-9zM74 13h9v6h-9zM69 13h9v6h-9zM162 13h9v6h-9zM169 13h9v6h-9zM176 13h9v6h-9zM186 13h9v6h-9zM205 13h9v6h-9zM213 13h9v6h-9zM219 13h9v6h-9zM229 13h9v6h-9zM241 13h9v6h-9zM245 13h9v6h-9zM247 13h9v6h-9zM268 13h9v6h-9zM341 13h9v6h-9zM348 13h9v6h-9zM355 13h9v6h-9zM368 13h9v6h-9zM369 13h9v6h-9zM376 13h9v6h-9zM396 13h9v6h-9zM405 13h9v6h-9zM520 13h9v6h-9zM528 13h9v6h-9zM534 13h9v6h-9zM547 13h9v6h-9zM556 13h9v6h-9zM565 13h9v6h-9zM641 13h9v6h-9zM657 13h9v6h-9zM17 13h12v5h-12zM29 13h30v5h-30zM59 13h21v5h-21zM80 13h15v5h-15zM95 13h27v5h-27zM155 13h9v5h-9zM191 13h30v5h-30zM299 13h42v5h-42zM341 13h15v5h-15zM404 13h21v5h-21zM431 13h42v5h-42zM473 13h9v5h-9zM482 13h21v5h-21zM518 13h12v5h-12zM569 13h6v5h-6zM623 13h27v5h-27zM671 13h4v5h-4zM14 30h9v5h-9zM26 30h9v5h-9zM35 30h9v5h-9zM40 30h9v5h-9zM47 30h9v5h-9zM62 30h9v5h-9zM66 30h9v5h-9zM83 30h9v5h-9zM91 30h9v5h-9zM101 30h9v5h-9zM110 30h9v5h-9zM111 30h9v5h-9zM128 30h9v5h-9zM137 30h9v5h-9zM132 30h9v5h-9zM239 30h9v5h-9zM252 30h9v5h-9zM261 30h9v5h-9zM270 30h9v5h-9zM279 30h9v5h-9zM288 30h9v5h-9zM287 30h9v5h-9zM535 30h9v5h-9zM543 30h9v5h-9zM551 30h9v5h-9zM581 30h9v5h-9zM588 30h9v5h-9zM597 30h9v5h-9zM660 30h9v5h-9zM2 31h27v4h-27zM29 31h27v4h-27zM77 31h24v4h-24zM101 31h15v4h-15zM146 31h9v4h-9zM155 31h9v4h-9zM164 31h18v4h-18zM182 31h42v4h-42zM260 31h30v4h-30zM308 31h9v4h-9zM317 31h30v4h-30zM371 31h9v4h-9zM401 31h36v4h-36zM485 31h9v4h-9zM-2 35h9v6h-9zM5 35h9v6h-9zM60 35h9v6h-9zM68 35h9v6h-9zM76 35h9v6h-9zM87 35h9v6h-9zM88 35h9v6h-9zM95 35h9v6h-9zM218 35h9v6h-9zM227 35h9v6h-9zM236 35h9v6h-9zM245 35h9v6h-9zM254 35h9v6h-9zM253 35h9v6h-9zM267 35h9v6h-9zM274 35h9v6h-9zM281 35h9v6h-9zM294 35h9v6h-9zM299 35h9v6h-9zM302 35h9v6h-9zM323 35h9v6h-9zM330 35h9v6h-9zM337 35h9v6h-9zM347 35h9v6h-9zM356 35h9v6h-9zM364 35h9v6h-9zM370 35h9v6h-9zM383 35h9v6h-9zM388 35h9v6h-9zM433 35h9v6h-9zM528 35h9v6h-9zM536 35h9v6h-9zM107 35h36v5h-36zM152 35h15v5h-15zM209 35h27v5h-27zM236 35h12v5h-12zM248 35h27v5h-27zM326 35h18v5h-18zM344 35h15v5h-15zM374 35h15v5h-15zM389 35h6v5h-6zM419 35h18v5h-18zM488 35h9v5h-9zM581 35h48v5h-48zM629 35h30v5h-30zM659 35h16v5h-16zM-2 52h9v5h-9zM6 52h9v5h-9zM12 52h9v5h-9zM25 52h9v5h-9zM26 52h9v5h-9zM81 52h9v5h-9zM88 52h9v5h-9zM97 52h9v5h-9zM105 52h9v5h-9zM109 52h9v5h-9zM116 52h9v5h-9zM123 52h9v5h-9zM144 52h9v5h-9zM184 52h9v5h-9zM193 52h9v5h-9zM202 52h9v5h-9zM205 52h9v5h-9zM212 52h9v5h-9zM229 52h9v5h-9zM259 52h9v5h-9zM268 52h9v5h-9zM275 52h9v5h-9zM280 52h9v5h-9zM432 52h9v5h-9zM457 52h9v5h-9zM513 52h9v5h-9zM520 52h9v5h-9zM2 53h15v4h-15zM17 53h9v4h-9zM71 53h6v4h-6zM77 53h15v4h-15zM155 53h6v4h-6zM209 53h48v4h-48zM299 53h9v4h-9zM338 53h15v4h-15zM353 53h6v4h-6zM359 53h9v4h-9zM410 53h12v4h-12zM470 53h12v4h-12zM482 53h42v4h-42zM524 53h9v4h-9zM590 53h6v4h-6zM596 53h15v4h-15zM611 53h21v4h-21zM632 53h9v4h-9zM641 53h34v4h-34zM16 57h9v6h-9zM107 57h9v6h-9zM158 57h9v6h-9zM165 57h9v6h-9zM203 57h9v6h-9zM211 57h9v6h-9zM388 57h9v6h-9zM395 57h9v6h-9zM402 57h9v6h-9zM412 57h9v6h-9zM424 57h9v6h-9zM523 57h9v6h-9zM531 57h9v6h-9zM539 57h9v6h-9zM545 57h9v6h-9zM80 57h24v5h-24zM104 57h18v5h-18zM122 57h12v5h-12zM134 57h24v5h-24zM158 57h30v5h-30zM227 57h48v5h-48zM335 57h9v5h-9zM398 57h15v5h-15zM413 57h12v5h-12zM425 57h6v5h-6zM458 57h36v5h-36zM629 57h9v5h-9zM14 75h9v5h-9zM32 75h9v5h-9zM65 75h9v5h-9zM73 75h9v5h-9zM90 75h9v5h-9zM97 75h9v5h-9zM108 75h9v5h-9zM114 75h9v5h-9zM126 75h9v5h-9zM125 75h9v5h-9zM162 75h9v5h-9zM237 75h9v5h-9zM246 75h9v5h-9zM565 75h9v5h-9zM574 75h9v5h-9zM2 76h24v4h-24zM26 76h30v4h-30zM122 76h15v4h-15zM137 76h9v4h-9zM146 76h18v4h-18zM164 76h12v4h-12zM176 76h18v4h-18zM215 76h21v4h-21zM335 76h6v4h-6zM341 76h27v4h-27zM368 76h9v4h-9zM377 76h27v4h-27zM404 76h9v4h-9zM413 76h15v4h-15zM485 76h36v4h-36zM3 80h9v6h-9zM12 80h9v6h-9zM25 80h9v6h-9zM34 80h9v6h-9zM41 80h9v6h-9zM52 80h9v6h-9zM61 80h9v6h-9zM70 80h9v6h-9zM73 80h9v6h-9zM88 80h9v6h-9zM130 80h9v6h-9zM138 80h9v6h-9zM146 80h9v6h-9zM154 80h9v6h-9zM158 80h9v6h-9zM290 80h9v6h-9zM316 80h9v6h-9zM325 80h9v6h-9zM330 80h9v6h-9zM340 80h9v6h-9zM384 80h9v6h-9zM392 80h9v6h-9zM400 80h9v6h-9zM411 80h9v6h-9zM412 80h9v6h-9zM424 80h9v6h-9zM520 80h9v6h-9zM559 80h9v6h-9zM568 80h9v6h-9zM577 80h9v6h-9zM586 80h9v6h-9zM595 80h9v6h-9zM2 80h27v5h-27zM29 80h30v5h-30zM59 80h30v5h-30zM128 80h36v5h-36zM233 80h24v5h-24zM458 80h30v5h-30zM518 80h36v5h-36zM638 80h9v5h-9zM653 80h9v5h-9zM668 80h6v5h-6zM20 97h9v5h-9zM29 97h9v5h-9zM166 97h9v5h-9zM173 97h9v5h-9zM292 97h9v5h-9zM300 97h9v5h-9zM310 97h9v5h-9zM316 97h9v5h-9zM320 97h9v5h-9zM332 97h9v5h-9zM334 97h9v5h-9zM341 97h9v5h-9zM382 97h9v5h-9zM389 97h9v5h-9zM462 97h9v5h-9zM469 97h9v5h-9zM476 97h9v5h-9zM489 97h9v5h-9zM498 97h9v5h-9zM507 97h9v5h-9zM648 97h9v5h-9zM657 97h9v5h-9zM29 98h24v4h-24zM53 98h15v4h-15zM161 98h30v4h-30zM260 98h48v4h-48zM329 98h15v4h-15zM344 98h24v4h-24zM368 98h21v4h-21zM389 98h15v4h-15zM404 98h18v4h-18zM422 98h30v4h-30zM452 98h9v4h-9zM518 98h27v4h-27zM623 98h9v4h-9zM10 102h9v6h-9zM66 102h9v6h-9zM150 102h9v6h-9zM159 102h9v6h-9zM168 102h9v6h-9zM177 102h9v6h-9zM186 102h9v6h-9zM190 102h9v6h-9zM286 102h9v6h-9zM295 102h9v6h-9zM300 102h9v6h-9zM307 102h9v6h-9zM471 102h9v6h-9zM480 102h9v6h-9zM485 102h9v6h-9zM498 102h9v6h-9zM507 102h9v6h-9zM511 102h9v6h-9zM595 102h9v6h-9zM2 102h36v5h-36zM44 102h30v5h-30zM134 102h9v5h-9zM173 102h24v5h-24zM197 102h9v5h-9zM296 102h36v5h-36zM332 102h24v5h-24zM356 102h18v5h-18zM380 102h12v5h-12zM398 102h42v5h-42zM548 102h12v5h-12zM560 102h18v5h-18zM644 102h9v5h-9zM10 119h9v5h-9zM17 119h9v5h-9zM43 119h9v5h-9zM170 119h9v5h-9zM177 119h9v5h-9zM188 119h9v5h-9zM257 119h9v5h-9zM264 119h9v5h-9zM273 119h9v5h-9zM278 119h9v5h-9zM293 119h9v5h-9zM297 119h9v5h-9zM334 119h9v5h-9zM341 119h9v5h-9zM376 119h9v5h-9zM398 119h9v5h-9zM584 119h9v5h-9zM592 119h9v5h-9zM602 119h9v5h-9zM605 119h9v5h-9zM616 119h9v5h-9zM619 119h9v5h-9zM644 119h9v5h-9zM653 119h9v5h-9zM2 120h21v4h-21zM23 120h36v4h-36zM59 120h9v4h-9zM68 120h9v4h-9zM77 120h15v4h-15zM137 120h27v4h-27zM164 120h24v4h-24zM188 120h15v4h-15zM281 120h15v4h-15zM326 120h42v4h-42zM644 120h31v4h-31zM20 124h9v6h-9zM125 124h9v6h-9zM134 124h9v6h-9zM139 124h9v6h-9zM149 124h9v6h-9zM161 124h9v6h-9zM184 124h9v6h-9zM350 124h9v6h-9zM390 124h9v6h-9zM481 124h9v6h-9zM119 124h9v5h-9zM206 124h9v5h-9zM215 124h9v5h-9zM224 124h9v5h-9zM242 124h42v5h-42zM284 124h9v5h-9zM398 124h42v5h-42zM467 124h15v5h-15zM482 124h27v5h-27zM590 124h6v5h-6zM596 124h15v5h-15zM641 124h34v5h-34zM9 141h9v5h-9zM17 141h9v5h-9zM27 141h9v5h-9zM71 141h9v5h-9zM80 141h9v5h-9zM85 141h9v5h-9zM132 141h9v5h-9zM208 141h9v5h-9zM216 141h9v5h-9zM255 141h9v5h-9zM262 141h9v5h-9zM271 141h9v5h-9zM282 141h9v5h-9zM287 141h9v5h-9zM295 141h9v5h-9zM305 141h9v5h-9zM313 141h9v5h-9zM319 141h9v5h-9zM332 141h9v5h-9zM437 141h9v5h-9zM446 141h9v5h-9zM455 141h9v5h-9zM461 141h9v5h-9zM508 141h9v5h-9zM515 141h9v5h-9zM526 141h9v5h-9zM563 141h9v5h-9zM570 141h9v5h-9zM615 141h9v5h-9zM624 141h9v5h-9zM107 142h30v4h-30zM146 142h21v4h-21zM167 142h9v4h-9zM182 142h30v4h-30zM212 142h6v4h-6zM218 142h9v4h-9zM263 142h27v4h-27zM290 142h30v4h-30zM326 142h18v4h-18zM410 142h27v4h-27zM557 142h15v4h-15zM572 142h15v4h-15zM587 142h6v4h-6zM593 142h24v4h-24zM17 146h9v6h-9zM25 146h9v6h-9zM118 146h9v6h-9zM135 146h9v6h-9zM144 146h9v6h-9zM157 146h9v6h-9zM165 146h9v6h-9zM175 146h9v6h-9zM178 146h9v6h-9zM240 146h9v6h-9zM247 146h9v6h-9zM258 146h9v6h-9zM264 146h9v6h-9zM268 146h9v6h-9zM285 146h9v6h-9zM288 146h9v6h-9zM303 146h9v6h-9zM427 146h9v6h-9zM436 146h9v6h-9zM441 146h9v6h-9zM512 146h9v6h-9zM2 146h48v5h-48zM86 146h9v5h-9zM95 146h9v5h-9zM134 146h12v5h-12zM173 146h30v5h-30zM203 146h30v5h-30zM479 146h42v5h-42zM521 146h48v5h-48zM635 146h36v5h-36zM25 163h9v5h-9zM32 163h9v5h-9zM82 163h9v5h-9zM89 163h9v5h-9zM100 163h9v5h-9zM103 163h9v5h-9zM110 163h9v5h-9zM117 163h9v5h-9zM136 163h9v5h-9zM138 163h9v5h-9zM168 163h9v5h-9zM177 163h9v5h-9zM293 163h9v5h-9zM300 163h9v5h-9zM309 163h9v5h-9zM471 163h9v5h-9zM479 163h9v5h-9zM487 163h9v5h-9zM498 163h9v5h-9zM558 163h9v5h-9zM567 163h9v5h-9zM574 163h9v5h-9zM585 163h9v5h-9zM594 163h9v5h-9zM593 163h9v5h-9zM624 163h9v5h-9zM632 163h9v5h-9zM640 163h9v5h-9zM648 163h9v5h-9zM660 163h9v5h-9zM2 164h30v4h-30zM62 164h15v4h-15zM77 164h30v4h-30zM176 164h21v4h-21zM362 164h36v4h-36zM398 164h21v4h-21zM419 164h30v4h-30zM449 164h36v4h-36zM527 164h48v4h-48zM24 168h9v6h-9zM31 168h9v6h-9zM38 168h9v6h-9zM58 168h9v6h-9zM67 168h9v6h-9zM74 168h9v6h-9zM199 168h9v6h-9zM207 168h9v6h-9zM213 168h9v6h-9zM223 168h9v6h-9zM261 168h9v6h-9zM476 168h9v6h-9zM484 168h9v6h-9zM490 168h9v6h-9zM500 168h9v6h-9zM504 168h9v6h-9zM521 168h9v6h-9zM518 168h9v6h-9zM532 168h9v6h-9zM29 168h36v5h-36zM65 168h6v5h-6zM71 168h9v5h-9zM80 168h12v5h-12zM194 168h21v5h-21zM251 168h27v5h-27zM278 168h21v5h-21zM326 168h15v5h-15zM395 168h18v5h-18zM425 168h6v5h-6zM470 168h24v5h-24zM542 168h21v5h-21zM614 168h18v5h-18zM632 168h36v5h-36zM668 168h7v5h-7zM13 185h9v6h-9zM22 185h9v6h-9zM27 185h9v6h-9zM169 185h9v6h-9zM176 185h9v6h-9zM183 185h9v6h-9zM190 185h9v6h-9zM462 185h9v6h-9zM471 185h9v6h-9zM492 185h9v6h-9zM501 185h9v6h-9zM519 185h9v6h-9zM2 186h6v5h-6zM8 186h12v5h-12zM77 186h15v5h-15zM140 186h15v5h-15zM155 186h9v5h-9zM179 186h27v5h-27zM224 186h27v5h-27zM251 186h9v5h-9zM260 186h36v5h-36zM320 186h21v5h-21zM410 186h30v5h-30zM440 186h27v5h-27zM467 186h6v5h-6zM518 186h21v5h-21zM584 186h12v5h-12zM596 186h15v5h-15zM626 186h12v5h-12zM6 191h9v6h-9zM15 191h9v6h-9zM24 191h9v6h-9zM33 191h9v6h-9zM42 191h9v6h-9zM230 191h9v6h-9zM237 191h9v6h-9zM248 191h9v6h-9zM251 191h9v6h-9zM258 191h9v6h-9zM265 191h9v6h-9zM272 191h9v6h-9zM286 191h9v6h-9zM388 191h9v6h-9zM396 191h9v6h-9zM404 191h9v6h-9zM412 191h9v6h-9zM420 191h9v6h-9zM428 191h9v6h-9zM442 191h9v6h-9zM437 191h9v6h-9zM498 191h9v6h-9zM506 191h9v6h-9zM576 191h9v6h-9zM585 191h9v6h-9zM590 191h9v6h-9zM603 191h9v6h-9zM608 191h9v6h-9zM611 191h9v6h-9zM662 191h9v6h-9zM50 191h24v5h-24zM74 191h9v5h-9zM83 191h6v5h-6zM89 191h9v5h-9zM155 191h24v5h-24zM179 191h15v5h-15zM194 191h36v5h-36zM230 191h30v5h-30zM260 191h6v5h-6zM266 191h48v5h-48zM356 191h15v5h-15zM380 191h24v5h-24zM404 191h6v5h-6zM473 191h18v5h-18zM23 208h9v5h-9zM32 208h9v5h-9zM39 208h9v5h-9zM44 208h9v5h-9zM80 208h9v5h-9zM89 208h9v5h-9zM94 208h9v5h-9zM101 208h9v5h-9zM116 208h9v5h-9zM115 208h9v5h-9zM122 208h9v5h-9zM143 208h9v5h-9zM362 208h9v5h-9zM369 208h9v5h-9zM378 208h9v5h-9zM386 208h9v5h-9zM398 208h9v5h-9zM565 208h9v5h-9zM588 208h9v5h-9zM595 208h9v5h-9zM604 208h9v5h-9zM615 208h9v5h-9zM2 209h36v4h-36zM116 209h36v4h-36zM152 209h21v4h-21zM173 209h42v4h-42zM239 209h9v4h-9zM257 209h27v4h-27zM284 209h36v4h-36zM320 209h18v4h-18zM464 209h42v4h-42zM521 209h15v4h-15zM536 209h24v4h-24zM560 209h9v4h-9zM587 209h9v4h-9zM611 209h24v4h-24zM635 209h12v4h-12zM27 213h9v6h-9zM36 213h9v6h-9zM41 213h9v6h-9zM51 213h9v6h-9zM63 213h9v6h-9zM70 213h9v6h-9zM89 213h9v6h-9zM419 213h9v6h-9zM426 213h9v6h-9zM435 213h9v6h-9zM440 213h9v6h-9zM455 213h9v6h-9zM459 213h9v6h-9zM540 213h9v6h-9zM547 213h9v6h-9zM556 213h9v6h-9zM561 213h9v6h-9zM576 213h9v6h-9zM575 213h9v6h-9zM594 213h9v6h-9zM589 213h9v6h-9zM2 213h9v5h-9zM11 213h15v5h-15zM26 213h48v5h-48zM74 213h9v5h-9zM146 213h27v5h-27zM245 213h27v5h-27zM272 213h30v5h-30zM302 213h21v5h-21zM527 213h9v5h-9zM536 213h15v5h-15zM581 213h48v5h-48zM668 213h7v5h-7zM1 230h9v5h-9zM9 230h9v5h-9zM19 230h9v5h-9zM28 230h9v5h-9zM33 230h9v5h-9zM95 230h9v5h-9zM104 230h9v5h-9zM113 230h9v5h-9zM116 230h9v5h-9zM131 230h9v5h-9zM135 230h9v5h-9zM152 230h9v5h-9zM173 230h9v5h-9zM182 230h9v5h-9zM200 230h9v5h-9zM261 230h9v5h-9zM268 230h9v5h-9zM348 230h9v5h-9zM355 230h9v5h-9zM362 230h9v5h-9zM372 230h9v5h-9zM376 230h9v5h-9zM388 230h9v5h-9zM418 230h9v5h-9zM426 230h9v5h-9zM512 230h9v5h-9zM539 230h9v5h-9zM547 230h9v5h-9zM634 230h9v5h-9zM642 230h9v5h-9zM648 230h9v5h-9zM655 230h9v5h-9zM2 231h15v4h-15zM17 231h42v4h-42zM59 231h24v4h-24zM83 231h18v4h-18zM128 231h27v4h-27zM215 231h9v4h-9zM311 231h18v4h-18zM356 231h6v4h-6zM446 231h15v4h-15zM533 231h15v4h-15zM548 231h6v4h-6zM554 231h21v4h-21zM575 231h27v4h-27zM602 231h42v4h-42zM644 231h12v4h-12zM656 231h19v4h-19zM27 235h9v6h-9zM36 235h9v6h-9zM146 235h9v6h-9zM220 235h9v6h-9zM229 235h9v6h-9zM236 235h9v6h-9zM241 235h9v6h-9zM252 235h9v6h-9zM265 235h9v6h-9zM262 235h9v6h-9zM269 235h9v6h-9zM292 235h9v6h-9zM299 235h9v6h-9zM306 235h9v6h-9zM384 235h9v6h-9zM392 235h9v6h-9zM398 235h9v6h-9zM405 235h9v6h-9zM412 235h9v6h-9zM419 235h9v6h-9zM453 235h9v6h-9zM462 235h9v6h-9zM467 235h9v6h-9zM480 235h9v6h-9zM489 235h9v6h-9zM493 235h9v6h-9zM495 235h9v6h-9zM502 235h9v6h-9zM551 235h9v6h-9zM558 235h9v6h-9zM565 235h9v6h-9zM572 235h9v6h-9zM633 235h9v6h-9zM640 235h9v6h-9zM651 235h9v6h-9zM657 235h9v6h-9zM11 235h15v5h-15zM26 235h18v5h-18zM44 235h12v5h-12zM74 235h42v5h-42zM125 235h15v5h-15zM149 235h21v5h-21zM188 235h27v5h-27zM224 235h18v5h-18zM332 235h9v5h-9zM356 235h48v5h-48zM428 235h15v5h-15zM461 235h24v5h-24zM506 235h15v5h-15zM572 235h30v5h-30zM620 235h15v5h-15zM3 252h9v5h-9zM10 252h9v5h-9zM46 252h9v5h-9zM54 252h9v5h-9zM64 252h9v5h-9zM73 252h9v5h-9zM78 252h9v5h-9zM91 252h9v5h-9zM94 252h9v5h-9zM95 252h9v5h-9zM150 252h9v5h-9zM182 252h9v5h-9zM189 252h9v5h-9zM241 252h9v5h-9zM250 252h9v5h-9zM257 252h9v5h-9zM262 252h9v5h-9zM269 252h9v5h-9zM286 252h9v5h-9zM295 252h9v5h-9zM297 252h9v5h-9zM329 252h9v5h-9zM337 252h9v5h-9zM343 252h9v5h-9zM350 252h9v5h-9zM365 252h9v5h-9zM415 252h9v5h-9zM422 252h9v5h-9zM429 252h9v5h-9zM439 252h9v5h-9zM650 252h9v5h-9zM665 252h9v5h-9zM2 253h42v4h-42zM44 253h48v4h-48zM128 253h18v4h-18zM182 253h6v4h-6zM263 253h24v4h-24zM368 253h21v4h-21zM389 253h6v4h-6zM497 253h12v4h-12zM551 253h42v4h-42zM614 253h15v4h-15zM629 253h46v4h-46zM16 257h9v6h-9zM24 257h9v6h-9zM30 257h9v6h-9zM40 257h9v6h-9zM52 257h9v6h-9zM61 257h9v6h-9zM58 257h9v6h-9zM72 257h9v6h-9zM206 257h9v6h-9zM215 257h9v6h-9zM222 257h9v6h-9zM233 257h9v6h-9zM238 257h9v6h-9zM251 257h9v6h-9zM260 257h9v6h-9zM262 257h9v6h-9zM332 257h9v6h-9zM340 257h9v6h-9zM346 257h9v6h-9zM359 257h9v6h-9zM378 257h9v6h-9zM386 257h9v6h-9zM394 257h9v6h-9zM405 257h9v6h-9zM414 257h9v6h-9zM420 257h9v6h-9zM427 257h9v6h-9zM500 257h9v6h-9zM508 257h9v6h-9zM516 257h9v6h-9zM527 257h9v6h-9zM532 257h9v6h-9zM545 257h9v6h-9zM554 257h9v6h-9zM556 257h9v6h-9zM642 257h9v6h-9zM649 257h9v6h-9zM660 257h9v6h-9zM663 257h9v6h-9zM59 257h27v5h-27zM188 257h36v5h-36zM224 257h12v5h-12zM392 257h12v5h-12zM491 257h9v5h-9zM500 257h42v5h-42zM542 257h9v5h-9zM551 257h21v5h-21zM611 257h15v5h-15zM626 257h24v5h-24zM13 274h9v5h-9zM22 274h9v5h-9zM30 274h9v5h-9zM39 274h9v5h-9zM162 274h9v5h-9zM169 274h9v5h-9zM180 274h9v5h-9zM183 274h9v5h-9zM194 274h9v5h-9zM207 274h9v5h-9zM327 274h9v5h-9zM460 274h9v5h-9zM468 274h9v5h-9zM476 274h9v5h-9zM599 274h9v5h-9zM608 274h9v5h-9zM613 274h9v5h-9zM648 274h9v5h-9zM655 274h9v5h-9zM2 275h12v4h-12zM14 275h48v4h-48zM62 275h15v4h-15zM77 275h12v4h-12zM125 275h36v4h-36zM161 275h24v4h-24zM185 275h48v4h-48zM263 275h15v4h-15zM290 275h12v4h-12zM302 275h12v4h-12zM350 275h42v4h-42zM419 275h9v4h-9zM428 275h24v4h-24zM461 275h9v4h-9zM470 275h21v4h-21zM491 275h36v4h-36zM527 275h9v4h-9zM584 275h12v4h-12zM653 275h21v4h-21zM19 279h9v6h-9zM34 279h9v6h-9zM43 279h9v6h-9zM52 279h9v6h-9zM55 279h9v6h-9zM62 279h9v6h-9zM74 279h9v6h-9zM88 279h9v6h-9zM97 279h9v6h-9zM183 279h9v6h-9zM192 279h9v6h-9zM197 279h9v6h-9zM207 279h9v6h-9zM249 279h9v6h-9zM257 279h9v6h-9zM267 279h9v6h-9zM270 279h9v6h-9zM399 279h9v6h-9zM407 279h9v6h-9zM417 279h9v6h-9zM426 279h9v6h-9zM427 279h9v6h-9zM463 279h9v6h-9zM471 279h9v6h-9zM481 279h9v6h-9zM610 279h9v6h-9zM617 279h9v6h-9zM17 279h36v5h-36zM74 279h15v5h-15zM89 279h24v5h-24zM113 279h42v5h-42zM155 279h21v5h-21zM188 279h15v5h-15zM230 279h6v5h-6zM263 279h9v5h-9zM299 279h18v5h-18zM341 279h42v5h-42zM416 279h15v5h-15zM545 279h21v5h-21zM572 279h18v5h-18zM590 279h48v5h-48zM656 279h19v5h-19zM1 296h9v5h-9zM9 296h9v5h-9zM19 296h9v5h-9zM22 296h9v5h-9zM45 296h9v5h-9zM296 296h9v5h-9zM303 296h9v5h-9zM377 296h9v5h-9zM386 296h9v5h-9zM645 296h9v5h-9zM652 296h9v5h-9zM20 297h27v4h-27zM47 297h15v4h-15zM95 297h12v4h-12zM107 297h15v4h-15zM161 297h6v4h-6zM209 297h12v4h-12zM245 297h18v4h-18zM263 297h24v4h-24zM329 297h42v4h-42zM371 297h15v4h-15zM386 297h42v4h-42zM428 297h48v4h-48zM491 297h18v4h-18zM524 297h15v4h-15zM620 297h27v4h-27zM671 297h4v4h-4zM0 301h9v6h-9zM9 301h9v6h-9zM16 301h9v6h-9zM21 301h9v6h-9zM36 301h9v6h-9zM40 301h9v6h-9zM48 301h9v6h-9zM63 301h9v6h-9zM370 301h9v6h-9zM378 301h9v6h-9zM384 301h9v6h-9zM394 301h9v6h-9zM398 301h9v6h-9zM410 301h9v6h-9zM460 301h9v6h-9zM553 301h9v6h-9zM626 301h9v6h-9zM635 301h9v6h-9zM644 301h9v6h-9zM185 301h6v5h-6zM191 301h18v5h-18zM209 301h27v5h-27zM266 301h9v5h-9zM320 301h36v5h-36zM380 301h15v5h-15zM437 301h15v5h-15zM452 301h12v5h-12zM551 301h9v5h-9zM581 301h36v5h-36zM617 301h36v5h-36zM653 301h9v5h-9zM27 319h9v5h-9zM34 319h9v5h-9zM43 319h9v5h-9zM54 319h9v5h-9zM63 319h9v5h-9zM72 319h9v5h-9zM115 319h9v5h-9zM123 319h9v5h-9zM193 319h9v5h-9zM201 319h9v5h-9zM211 319h9v5h-9zM240 319h9v5h-9zM247 319h9v5h-9zM256 319h9v5h-9zM264 319h9v5h-9zM268 319h9v5h-9zM285 319h9v5h-9zM293 319h9v5h-9zM301 319h9v5h-9zM311 319h9v5h-9zM314 319h9v5h-9zM325 319h9v5h-9zM338 319h9v5h-9zM356 319h9v5h-9zM365 319h9v5h-9zM422 319h9v5h-9zM429 319h9v5h-9zM440 319h9v5h-9zM443 319h9v5h-9zM450 319h9v5h-9zM462 319h9v5h-9zM464 319h9v5h-9zM478 319h9v5h-9zM569 319h9v5h-9zM11 320h18v4h-18zM56 320h24v4h-24zM155 320h24v4h-24zM179 320h9v4h-9zM188 320h21v4h-21zM251 320h24v4h-24zM275 320h30v4h-30zM305 320h30v4h-30zM335 320h21v4h-21zM386 320h18v4h-18zM536 320h21v4h-21zM557 320h48v4h-48zM605 320h30v4h-30zM644 320h31v4h-31zM4 324h9v6h-9zM11 324h9v6h-9zM18 324h9v6h-9zM28 324h9v6h-9zM108 324h9v6h-9zM116 324h9v6h-9zM169 324h9v6h-9zM177 324h9v6h-9zM183 324h9v6h-9zM196 324h9v6h-9zM201 324h9v6h-9zM214 324h9v6h-9zM217 324h9v6h-9zM225 324h9v6h-9zM253 324h9v6h-9zM260 324h9v6h-9zM336 324h9v6h-9zM345 324h9v6h-9zM354 324h9v6h-9zM363 324h9v6h-9zM474 324h9v6h-9zM483 324h9v6h-9zM490 324h9v6h-9zM615 324h9v6h-9zM624 324h9v6h-9zM643 324h9v6h-9zM651 324h9v6h-9zM20 324h6v5h-6zM113 324h15v5h-15zM128 324h30v5h-30zM158 324h21v5h-21zM200 324h15v5h-15zM230 324h15v5h-15zM245 324h24v5h-24zM269 324h21v5h-21zM395 324h15v5h-15zM467 324h24v5h-24zM491 324h21v5h-21zM539 324h15v5h-15zM611 324h6v5h-6zM653 324h22v5h-22zM13 341h9v5h-9zM21 341h9v5h-9zM29 341h9v5h-9zM40 341h9v5h-9zM41 341h9v5h-9zM53 341h9v5h-9zM67 341h9v5h-9zM69 341h9v5h-9zM125 341h9v5h-9zM160 341h9v5h-9zM168 341h9v5h-9zM192 341h9v5h-9zM201 341h9v5h-9zM206 341h9v5h-9zM219 341h9v5h-9zM228 341h9v5h-9zM284 341h9v5h-9zM291 341h9v5h-9zM302 341h9v5h-9zM308 341h9v5h-9zM459 341h9v5h-9zM466 341h9v5h-9zM475 341h9v5h-9zM486 341h9v5h-9zM578 341h9v5h-9zM585 341h9v5h-9zM592 341h9v5h-9zM599 341h9v5h-9zM610 341h9v5h-9zM613 341h9v5h-9zM630 341h9v5h-9zM637 341h9v5h-9zM209 342h15v4h-15zM314 342h42v4h-42zM467 342h24v4h-24zM491 342h42v4h-42zM656 342h19v4h-19zM25 346h9v6h-9zM257 346h9v6h-9zM264 346h9v6h-9zM275 346h9v6h-9zM278 346h9v6h-9zM285 346h9v6h-9zM358 346h9v6h-9zM367 346h9v6h-9zM376 346h9v6h-9zM385 346h9v6h-9zM390 346h9v6h-9zM393 346h9v6h-9zM508 346h9v6h-9zM515 346h9v6h-9zM524 346h9v6h-9zM535 346h9v6h-9zM544 346h9v6h-9zM638 346h9v6h-9zM646 346h9v6h-9zM652 346h9v6h-9zM26 346h42v5h-42zM215 346h30v5h-30zM245 346h15v5h-15zM290 346h6v5h-6zM338 346h15v5h-15zM395 346h30v5h-30zM437 346h30v5h-30zM539 346h30v5h-30zM16 363h9v5h-9zM23 363h9v5h-9zM30 363h9v5h-9zM37 363h9v5h-9zM219 363h9v5h-9zM226 363h9v5h-9zM233 363h9v5h-9zM243 363h9v5h-9zM247 363h9v5h-9zM259 363h9v5h-9zM307 363h9v5h-9zM315 363h9v5h-9zM325 363h9v5h-9zM334 363h9v5h-9zM335 363h9v5h-9zM384 363h9v5h-9zM461 363h9v5h-9zM561 363h9v5h-9zM570 363h9v5h-9zM577 363h9v5h-9zM588 363h9v5h-9zM589 363h9v5h-9zM606 363h9v5h-9zM41 364h15v4h-15zM56 364h6v4h-6zM104 364h48v4h-48zM167 364h42v4h-42zM209 364h15v4h-15zM275 364h6v4h-6zM317 364h12v4h-12zM410 364h15v4h-15zM602 364h21v4h-21zM623 364h12v4h-12zM18 368h9v6h-9zM26 368h9v6h-9zM36 368h9v6h-9zM111 368h9v6h-9zM118 368h9v6h-9zM125 368h9v6h-9zM165 368h9v6h-9zM172 368h9v6h-9zM217 368h9v6h-9zM226 368h9v6h-9zM231 368h9v6h-9zM243 368h9v6h-9zM252 368h9v6h-9zM354 368h9v6h-9zM363 368h9v6h-9zM370 368h9v6h-9zM378 368h9v6h-9zM386 368h9v6h-9zM399 368h9v6h-9zM437 368h9v6h-9zM445 368h9v6h-9zM570 368h9v6h-9zM578 368h9v6h-9zM2 368h42v5h-42zM44 368h15v5h-15zM59 368h42v5h-42zM131 368h15v5h-15zM161 368h12v5h-12zM173 368h36v5h-36zM218 368h9v5h-9zM266 368h9v5h-9zM299 368h15v5h-15zM407 368h15v5h-15zM422 368h42v5h-42zM482 368h30v5h-30zM530 368h12v5h-12zM542 368h6v5h-6zM548 368h42v5h-42zM602 368h15v5h-15zM617 368h9v5h-9zM626 368h15v5h-15zM650 368h25v5h-25zM-2 385h9v5h-9zM5 385h9v5h-9zM24 385h9v5h-9zM31 385h9v5h-9zM40 385h9v5h-9zM51 385h9v5h-9zM81 385h9v5h-9zM90 385h9v5h-9zM357 385h9v5h-9zM366 385h9v5h-9zM371 385h9v5h-9zM384 385h9v5h-9zM457 385h9v5h-9zM471 385h9v5h-9zM478 385h9v5h-9zM567 385h9v5h-9zM583 385h9v5h-9zM591 385h9v5h-9zM615 385h9v5h-9zM622 385h9v5h-9zM633 385h9v5h-9zM639 385h9v5h-9zM62 386h15v4h-15zM77 386h18v4h-18zM158 386h12v4h-12zM206 386h15v4h-15zM221 386h36v4h-36zM326 386h42v4h-42zM368 386h27v4h-27zM401 386h6v4h-6zM407 386h9v4h-9zM506 386h15v4h-15zM521 386h24v4h-24zM593 386h12v4h-12zM605 386h21v4h-21zM18 390h9v6h-9zM27 390h9v6h-9zM210 390h9v6h-9zM217 390h9v6h-9zM224 390h9v6h-9zM237 390h9v6h-9zM246 390h9v6h-9zM250 390h9v6h-9zM292 390h9v6h-9zM299 390h9v6h-9zM310 390h9v6h-9zM319 390h9v6h-9zM399 390h9v6h-9zM428 390h9v6h-9zM435 390h9v6h-9zM444 390h9v6h-9zM449 390h9v6h-9zM460 390h9v6h-9zM534 390h9v6h-9zM657 390h9v6h-9zM86 390h15v5h-15zM101 390h24v5h-24zM125 390h12v5h-12zM161 390h9v5h-9zM191 390h6v5h-6zM290 390h18v5h-18zM308 390h30v5h-30zM380 390h9v5h-9zM389 390h27v5h-27zM416 390h18v5h-18zM434 390h15v5h-15zM458 390h48v5h-48zM506 390h42v5h-42zM548 390h30v5h-30zM632 390h18v5h-18zM17 407h9v5h-9zM26 407h9v5h-9zM128 407h9v5h-9zM137 407h9v5h-9zM142 407h9v5h-9zM152 407h9v5h-9zM156 407h9v5h-9zM163 407h9v5h-9zM176 407h9v5h-9zM177 407h9v5h-9zM238 407h9v5h-9zM247 407h9v5h-9zM362 407h9v5h-9zM369 407h9v5h-9zM384 407h9v5h-9zM402 407h9v5h-9zM654 407h9v5h-9zM662 407h9v5h-9zM2 408h15v4h-15zM71 408h48v4h-48zM143 408h36v4h-36zM197 408h30v4h-30zM251 408h48v4h-48zM320 408h9v4h-9zM329 408h15v4h-15zM371 408h48v4h-48zM419 408h24v4h-24zM464 408h6v4h-6zM524 408h36v4h-36zM578 408h36v4h-36zM668 408h7v4h-7zM15 412h9v6h-9zM22 412h9v6h-9zM57 412h9v6h-9zM65 412h9v6h-9zM71 412h9v6h-9zM216 412h9v6h-9zM224 412h9v6h-9zM230 412h9v6h-9zM243 412h9v6h-9zM252 412h9v6h-9zM269 412h9v6h-9zM276 412h9v6h-9zM358 412h9v6h-9zM367 412h9v6h-9zM372 412h9v6h-9zM379 412h9v6h-9zM407 412h9v6h-9zM416 412h9v6h-9zM425 412h9v6h-9zM431 412h9v6h-9zM443 412h9v6h-9zM545 412h9v6h-9zM553 412h9v6h-9zM143 412h30v5h-30zM197 412h18v5h-18zM359 412h15v5h-15zM374 412h9v5h-9zM383 412h18v5h-18zM515 412h15v5h-15zM530 412h12v5h-12zM542 412h30v5h-30zM572 412h9v5h-9zM581 412h27v5h-27zM635 412h36v5h-36zM19 429h9v6h-9zM26 429h9v6h-9zM35 429h9v6h-9zM40 429h9v6h-9zM51 429h9v6h-9zM64 429h9v6h-9zM73 429h9v6h-9zM82 429h9v6h-9zM169 429h9v6h-9zM311 429h9v6h-9zM318 429h9v6h-9zM329 429h9v6h-9zM338 429h9v6h-9zM343 429h9v6h-9zM346 429h9v6h-9zM353 429h9v6h-9zM374 429h9v6h-9zM494 429h9v6h-9zM503 429h9v6h-9zM620 429h9v6h-9zM629 429h9v6h-9zM638 429h9v6h-9zM641 429h9v6h-9zM656 429h9v6h-9zM665 429h9v6h-9zM17 430h9v5h-9zM68 430h21v5h-21zM89 430h18v5h-18zM107 430h12v5h-12zM119 430h9v5h-9zM173 430h15v5h-15zM236 430h48v5h-48zM305 430h42v5h-42zM392 430h24v5h-24zM464 430h15v5h-15zM479 430h9v5h-9zM494 430h30v5h-30zM587 430h12v5h-12zM599 430h24v5h-24zM623 430h6v5h-6zM629 430h46v5h-46zM9 435h9v6h-9zM17 435h9v6h-9zM27 435h9v6h-9zM33 435h9v6h-9zM41 435h9v6h-9zM107 435h9v6h-9zM126 435h9v6h-9zM135 435h9v6h-9zM142 435h9v6h-9zM147 435h9v6h-9zM154 435h9v6h-9zM166 435h9v6h-9zM333 435h9v6h-9zM341 435h9v6h-9zM398 435h9v6h-9zM407 435h9v6h-9zM412 435h9v6h-9zM532 435h9v6h-9zM541 435h9v6h-9zM550 435h9v6h-9zM559 435h9v6h-9zM560 435h9v6h-9zM29 435h30v5h-30zM59 435h9v5h-9zM86 435h18v5h-18zM146 435h36v5h-36zM182 435h27v5h-27zM209 435h48v5h-48zM257 435h30v5h-30zM287 435h30v5h-30zM317 435h30v5h-30zM353 435h24v5h-24zM377 435h18v5h-18zM443 435h18v5h-18zM461 435h24v5h-24zM497 435h36v5h-36zM563 435h42v5h-42zM659 435h16v5h-16zM14 452h9v5h-9zM22 452h9v5h-9zM39 452h9v5h-9zM47 452h9v5h-9zM57 452h9v5h-9zM66 452h9v5h-9zM75 452h9v5h-9zM115 452h9v5h-9zM123 452h9v5h-9zM133 452h9v5h-9zM220 452h9v5h-9zM229 452h9v5h-9zM234 452h9v5h-9zM244 452h9v5h-9zM252 452h9v5h-9zM255 452h9v5h-9zM274 452h9v5h-9zM283 452h9v5h-9zM453 452h9v5h-9zM494 452h9v5h-9zM503 452h9v5h-9zM524 452h9v5h-9zM531 452h9v5h-9zM542 452h9v5h-9zM545 452h9v5h-9zM560 452h9v5h-9zM569 452h9v5h-9zM566 452h9v5h-9zM573 452h9v5h-9zM628 452h9v5h-9zM637 452h9v5h-9zM642 452h9v5h-9zM104 453h9v4h-9zM113 453h15v4h-15zM128 453h12v4h-12zM167 453h9v4h-9zM191 453h9v4h-9zM242 453h24v4h-24zM341 453h42v4h-42zM383 453h24v4h-24zM407 453h27v4h-27zM434 453h30v4h-30zM464 453h24v4h-24zM497 453h9v4h-9zM506 453h6v4h-6zM512 453h42v4h-42zM563 453h15v4h-15zM578 453h36v4h-36zM614 453h12v4h-12zM650 453h9v4h-9zM665 453h10v4h-10zM11 457h9v6h-9zM39 457h9v6h-9zM48 457h9v6h-9zM55 457h9v6h-9zM63 457h9v6h-9zM84 457h9v6h-9zM106 457h9v6h-9zM115 457h9v6h-9zM122 457h9v6h-9zM130 457h9v6h-9zM146 457h9v6h-9zM166 457h9v6h-9zM173 457h9v6h-9zM184 457h9v6h-9zM209 457h9v6h-9zM328 457h9v6h-9zM336 457h9v6h-9zM384 457h9v6h-9zM393 457h9v6h-9zM400 457h9v6h-9zM588 457h9v6h-9zM596 457h9v6h-9zM604 457h9v6h-9zM631 457h9v6h-9zM639 457h9v6h-9zM647 457h9v6h-9zM652 457h9v6h-9zM161 457h30v5h-30zM218 457h15v5h-15zM233 457h36v5h-36zM275 457h36v5h-36zM338 457h9v5h-9zM347 457h12v5h-12zM374 457h9v5h-9zM410 457h15v5h-15zM455 457h15v5h-15zM470 457h27v5h-27zM587 457h48v5h-48zM635 457h18v5h-18zM1 474h9v5h-9zM10 474h9v5h-9zM19 474h9v5h-9zM33 474h9v5h-9zM40 474h9v5h-9zM49 474h9v5h-9zM54 474h9v5h-9zM174 474h9v5h-9zM183 474h9v5h-9zM190 474h9v5h-9zM198 474h9v5h-9zM206 474h9v5h-9zM209 474h9v5h-9zM222 474h9v5h-9zM237 474h9v5h-9zM256 474h9v5h-9zM265 474h9v5h-9zM335 474h9v5h-9zM342 474h9v5h-9zM411 474h9v5h-9zM418 474h9v5h-9zM427 474h9v5h-9zM432 474h9v5h-9zM439 474h9v5h-9zM446 474h9v5h-9zM541 474h9v5h-9zM548 474h9v5h-9zM557 474h9v5h-9zM562 474h9v5h-9zM573 474h9v5h-9zM584 474h9v5h-9zM2 475h36v4h-36zM38 475h27v4h-27zM167 475h36v4h-36zM203 475h30v4h-30zM305 475h27v4h-27zM332 475h27v4h-27zM407 475h12v4h-12zM443 475h42v4h-42zM485 475h18v4h-18zM548 475h30v4h-30zM596 475h9v4h-9zM605 475h42v4h-42zM647 475h15v4h-15zM668 475h7v4h-7zM11 479h9v6h-9zM19 479h9v6h-9zM27 479h9v6h-9zM38 479h9v6h-9zM47 479h9v6h-9zM46 479h9v6h-9zM59 479h9v6h-9zM74 479h9v6h-9zM106 479h9v6h-9zM115 479h9v6h-9zM122 479h9v6h-9zM130 479h9v6h-9zM156 479h9v6h-9zM163 479h9v6h-9zM172 479h9v6h-9zM275 479h9v6h-9zM283 479h9v6h-9zM291 479h9v6h-9zM302 479h9v6h-9zM311 479h9v6h-9zM320 479h9v6h-9zM329 479h9v6h-9zM331 479h9v6h-9zM350 479h9v6h-9zM357 479h9v6h-9zM420 479h9v6h-9zM429 479h9v6h-9zM438 479h9v6h-9zM441 479h9v6h-9zM452 479h9v6h-9zM465 479h9v6h-9zM474 479h9v6h-9zM469 479h9v6h-9zM550 479h9v6h-9zM557 479h9v6h-9zM568 479h9v6h-9zM635 479h9v6h-9zM642 479h9v6h-9zM2 479h9v3h-9zM41 479h9v3h-9zM77 479h15v3h-15zM92 479h36v3h-36zM152 479h48v3h-48zM251 479h9v3h-9zM260 479h36v3h-36zM323 479h9v3h-9zM368 479h12v3h-12zM380 479h9v3h-9zM431 479h27v3h-27zM581 479h9v3h-9zM590 479h9v3h-9zM644 479h12v3h-12zM656 479h6v3h-6zM662 479h13v3h-13z"/><g transform="translate(0,2)"><path fill="url(#tT1)" d="M3 2h10v4h-10zM66 2h13v4h-13zM213 2h7v4h-7z"/><path fill="url(#mT2)" d="M3 7h10v3h-10zM60 7h4v3h-4zM390 7h40v3h-40zM444 7h34v3h-34zM480 7h10v3h-10zM573 7h34v3h-34z"/><path fill="url(#tT4)" d="M15 2h16v4h-16zM81 2h40v4h-40zM186 2h7v4h-7zM282 2h13v4h-13zM492 2h34v4h-34zM528 2h13v4h-13zM543 2h28v4h-28zM573 2h34v4h-34zM609 2h40v4h-40zM651 2h10v4h-10zM663 2h10v4h-10z"/><path fill="url(#mT0)" d="M15 7h16v3h-16zM81 7h40v3h-40zM195 7h16v3h-16zM222 7h46v3h-46zM309 7h16v3h-16zM339 7h16v3h-16zM432 7h10v3h-10zM609 7h40v3h-40z"/><path fill="url(#tT0)" d="M33 2h25v4h-25zM171 2h13v4h-13zM297 2h10v4h-10zM309 2h16v4h-16zM339 2h16v4h-16zM357 2h13v4h-13zM432 2h10v4h-10zM480 2h10v4h-10z"/><path fill="url(#mT3)" d="M33 7h25v3h-25zM270 7h10v3h-10zM327 7h10v3h-10zM528 7h13v3h-13z"/><path fill="url(#tT3)" d="M60 2h4v4h-4zM195 2h16v4h-16zM222 2h46v4h-46zM372 2h16v4h-16zM390 2h40v4h-40zM444 2h34v4h-34z"/><path fill="url(#mT1)" d="M66 7h13v3h-13zM171 7h13v3h-13zM186 7h7v3h-7zM543 7h28v3h-28z"/><path fill="url(#tT2)" d="M123 2h46v4h-46zM270 2h10v4h-10zM327 2h10v4h-10z"/><path fill="url(#mT4)" d="M123 7h46v3h-46zM213 7h7v3h-7zM282 7h13v3h-13zM297 7h10v3h-10zM357 7h13v3h-13zM372 7h16v3h-16zM492 7h34v3h-34zM651 7h10v3h-10zM663 7h10v3h-10z"/><path fill="#ffffff" d="M222 6h46v1h-46zM444 6h34v1h-34zM528 6h13v1h-13z"/><path fill="#f2804c" d="M1 2h1v8h-1zM193 2h1v8h-1zM325 2h1v8h-1zM355 2h1v8h-1zM370 2h1v8h-1zM430 2h1v8h-1zM571 2h1v8h-1zM607 2h1v8h-1zM661 2h1v8h-1z"/><path fill="#ffffff" d="M58 2h1v8h-1zM64 2h1v8h-1zM79 2h1v8h-1zM121 2h1v8h-1zM211 2h1v8h-1zM280 2h1v8h-1zM295 2h1v8h-1zM337 2h1v8h-1zM490 2h1v8h-1zM526 2h1v8h-1zM541 2h1v8h-1zM649 2h1v8h-1z"/></g><g transform="translate(0,13)"><path fill="url(#tM1)" d="M3 6h13v4h-13zM123 6h10v4h-10zM156 6h7v4h-7zM300 6h40v4h-40zM342 6h13v4h-13zM387 6h16v4h-16zM405 6h19v4h-19zM672 6h2v4h-2z"/><path fill="url(#mM3)" d="M3 2h13v3h-13zM18 2h10v3h-10zM30 2h28v3h-28zM165 2h13v3h-13zM258 2h40v3h-40zM342 2h13v3h-13zM405 2h19v3h-19z"/><path fill="url(#tM4)" d="M18 6h10v4h-10zM165 6h13v4h-13zM474 6h7v4h-7zM483 6h19v4h-19zM504 6h7v4h-7zM519 6h10v4h-10zM570 6h4v4h-4z"/><path fill="url(#tM0)" d="M30 6h28v4h-28zM96 6h25v4h-25zM357 6h28v4h-28z"/><path fill="url(#tM2)" d="M60 6h19v4h-19zM543 6h7v4h-7zM651 6h13v4h-13z"/><path fill="url(#mM0)" d="M60 2h19v3h-19zM156 2h7v3h-7zM180 2h10v3h-10zM432 2h40v3h-40zM474 2h7v3h-7zM504 2h7v3h-7zM624 2h25v3h-25z"/><path fill="url(#tM3)" d="M81 6h13v4h-13zM135 6h19v4h-19zM180 6h10v4h-10zM192 6h28v4h-28zM222 6h22v4h-22zM258 6h40v4h-40zM432 6h40v4h-40zM531 6h10v4h-10zM552 6h16v4h-16zM576 6h46v4h-46zM624 6h25v4h-25zM666 6h4v4h-4z"/><path fill="url(#mM1)" d="M81 2h13v3h-13zM135 2h19v3h-19zM357 2h28v3h-28zM387 2h16v3h-16zM576 2h46v3h-46zM666 2h4v3h-4z"/><path fill="url(#mM2)" d="M96 2h25v3h-25zM123 2h10v3h-10zM300 2h40v3h-40zM531 2h10v3h-10zM552 2h16v3h-16zM651 2h13v3h-13z"/><path fill="url(#mM4)" d="M192 2h28v3h-28zM222 2h22v3h-22zM483 2h19v3h-19zM519 2h10v3h-10zM543 2h7v3h-7zM570 2h4v3h-4zM672 2h2v3h-2z"/><path fill="#f2804c" d="M58 2h1v8h-1zM79 2h1v8h-1zM163 2h1v8h-1zM178 2h1v8h-1zM220 2h1v8h-1zM298 2h1v8h-1zM430 2h1v8h-1zM502 2h1v8h-1zM550 2h1v8h-1zM568 2h1v8h-1zM574 2h1v8h-1zM664 2h1v8h-1z"/><path fill="#ffffff" d="M16 2h1v8h-1zM94 2h1v8h-1zM121 2h1v8h-1zM154 2h1v8h-1zM340 2h1v8h-1zM355 2h1v8h-1zM385 2h1v8h-1zM472 2h1v8h-1zM529 2h1v8h-1zM622 2h1v8h-1zM649 2h1v8h-1z"/></g><g transform="translate(0,24)"><path fill="url(#tT1)" d="M3 2h25v4h-25zM78 2h22v4h-22zM348 2h13v4h-13zM363 2h7v4h-7zM588 2h22v4h-22z"/><path fill="url(#mT3)" d="M3 7h25v3h-25zM30 7h25v3h-25zM147 7h7v3h-7zM183 7h40v3h-40zM261 7h28v3h-28zM363 7h7v3h-7zM372 7h7v3h-7zM486 7h7v3h-7zM531 7h16v3h-16zM582 7h4v3h-4zM588 7h22v3h-22zM627 7h22v3h-22z"/><path fill="url(#tT4)" d="M30 2h25v4h-25zM57 2h19v4h-19zM147 2h7v4h-7zM183 2h40v4h-40zM225 2h25v4h-25zM261 2h28v4h-28zM402 2h34v4h-34zM549 2h22v4h-22z"/><path fill="url(#mT2)" d="M57 7h19v3h-19zM225 7h25v3h-25zM318 7h28v3h-28zM348 7h13v3h-13zM381 7h19v3h-19zM549 7h22v3h-22z"/><path fill="url(#mT4)" d="M78 7h22v3h-22zM102 7h13v3h-13zM309 7h7v3h-7zM438 7h46v3h-46zM573 7h7v3h-7z"/><path fill="url(#tT2)" d="M102 2h13v4h-13zM156 2h7v4h-7zM309 2h7v4h-7zM486 2h7v4h-7zM531 2h16v4h-16zM627 2h22v4h-22z"/><path fill="url(#tT3)" d="M117 2h13v4h-13zM318 2h28v4h-28zM438 2h46v4h-46zM651 2h22v4h-22z"/><path fill="url(#mT0)" d="M117 7h13v3h-13zM132 7h13v3h-13zM156 7h7v3h-7zM165 7h16v3h-16zM402 7h34v3h-34zM495 7h34v3h-34zM651 7h22v3h-22z"/><path fill="url(#tT0)" d="M132 2h13v4h-13zM165 2h16v4h-16zM252 2h7v4h-7zM291 2h16v4h-16zM372 2h7v4h-7zM381 2h19v4h-19zM495 2h34v4h-34zM573 2h7v4h-7zM582 2h4v4h-4zM612 2h13v4h-13z"/><path fill="url(#mT1)" d="M252 7h7v3h-7zM291 7h16v3h-16zM612 7h13v3h-13z"/><path fill="#f2804c" d="M28 2h1v8h-1zM100 2h1v8h-1zM154 2h1v8h-1zM259 2h1v8h-1zM289 2h1v8h-1zM316 2h1v8h-1zM361 2h1v8h-1zM370 2h1v8h-1zM436 2h1v8h-1zM529 2h1v8h-1zM625 2h1v8h-1z"/><path fill="#ffffff" d="M1 2h1v8h-1zM55 2h1v8h-1zM76 2h1v8h-1zM181 2h1v8h-1zM223 2h1v8h-1zM250 2h1v8h-1zM379 2h1v8h-1zM400 2h1v8h-1zM484 2h1v8h-1zM580 2h1v8h-1zM586 2h1v8h-1zM649 2h1v8h-1z"/></g><g transform="translate(0,35)"><path fill="url(#tM0)" d="M3 6h7v4h-7zM60 6h46v4h-46zM144 6h7v4h-7zM153 6h13v4h-13zM237 6h10v4h-10zM276 6h40v4h-40zM318 6h7v4h-7zM345 6h13v4h-13zM375 6h13v4h-13zM396 6h22v4h-22zM630 6h28v4h-28z"/><path fill="url(#mM2)" d="M3 2h7v3h-7zM168 2h40v3h-40zM276 2h40v3h-40zM390 2h4v3h-4zM489 2h7v3h-7z"/><path fill="url(#tM2)" d="M12 6h28v4h-28zM249 6h25v4h-25zM327 6h16v4h-16zM390 6h4v4h-4zM438 6h13v4h-13zM453 6h34v4h-34zM489 6h7v4h-7zM498 6h34v4h-34z"/><path fill="url(#mM0)" d="M12 2h28v3h-28zM144 2h7v3h-7zM249 2h25v3h-25zM318 2h7v3h-7zM360 2h13v3h-13zM420 2h16v3h-16zM453 2h34v3h-34zM582 2h46v3h-46z"/><path fill="url(#tM4)" d="M42 6h16v4h-16zM108 6h34v4h-34zM210 6h25v4h-25zM582 6h46v4h-46zM660 6h14v4h-14z"/><path fill="url(#mM3)" d="M42 2h16v3h-16zM108 2h34v3h-34zM153 2h13v3h-13zM210 2h25v3h-25zM375 2h13v3h-13zM438 2h13v3h-13zM630 2h28v3h-28zM660 2h14v3h-14z"/><path fill="url(#mM1)" d="M60 2h46v3h-46z"/><path fill="url(#tM3)" d="M168 6h40v4h-40zM360 6h13v4h-13zM420 6h16v4h-16zM534 6h46v4h-46z"/><path fill="url(#mM4)" d="M237 2h10v3h-10zM327 2h16v3h-16zM345 2h13v3h-13zM396 2h22v3h-22zM498 2h34v3h-34zM534 2h46v3h-46z"/><path fill="#ffffff" d="M153 5h13v1h-13z"/><path fill="#f2804c" d="M1 2h1v8h-1zM40 2h1v8h-1zM58 2h1v8h-1zM151 2h1v8h-1zM208 2h1v8h-1zM235 2h1v8h-1zM373 2h1v8h-1zM394 2h1v8h-1zM532 2h1v8h-1zM580 2h1v8h-1z"/><path fill="#ffffff" d="M106 2h1v8h-1zM247 2h1v8h-1zM316 2h1v8h-1zM325 2h1v8h-1zM343 2h1v8h-1zM358 2h1v8h-1zM388 2h1v8h-1zM436 2h1v8h-1zM451 2h1v8h-1zM487 2h1v8h-1zM628 2h1v8h-1z"/></g><g transform="translate(0,46)"><path fill="url(#tT2)" d="M3 2h13v4h-13zM18 2h7v4h-7zM93 2h13v4h-13zM300 2h7v4h-7zM354 2h4v4h-4zM369 2h10v4h-10zM597 2h13v4h-13z"/><path fill="url(#mT1)" d="M3 7h13v3h-13zM72 7h4v3h-4zM93 7h13v3h-13zM156 7h4v3h-4zM162 7h46v3h-46zM471 7h10v3h-10zM483 7h40v3h-40zM576 7h13v3h-13zM612 7h19v3h-19z"/><path fill="url(#mT0)" d="M18 7h7v3h-7zM411 7h10v3h-10z"/><path fill="url(#tT4)" d="M27 2h34v4h-34zM72 2h4v4h-4zM144 2h10v4h-10zM210 2h46v4h-46zM285 2h13v4h-13zM309 2h7v4h-7zM411 2h10v4h-10zM591 2h4v4h-4z"/><path fill="url(#mT2)" d="M27 7h34v3h-34zM144 7h10v3h-10zM318 7h19v3h-19zM339 7h13v3h-13zM369 7h10v3h-10zM591 7h4v3h-4zM597 7h13v3h-13zM633 7h7v3h-7zM642 7h32v3h-32z"/><path fill="url(#tT1)" d="M63 2h7v4h-7zM162 2h46v4h-46zM258 2h25v4h-25zM318 2h19v4h-19zM381 2h28v4h-28zM423 2h46v4h-46zM471 2h10v4h-10zM576 2h13v4h-13zM633 2h7v4h-7zM642 2h32v4h-32z"/><path fill="url(#mT3)" d="M63 7h7v3h-7zM78 7h13v3h-13zM210 7h46v3h-46zM285 7h13v3h-13zM300 7h7v3h-7zM354 7h4v3h-4zM381 7h28v3h-28zM423 7h46v3h-46zM525 7h7v3h-7z"/><path fill="url(#tT0)" d="M78 2h13v4h-13zM108 2h34v4h-34zM156 2h4v4h-4zM483 2h40v4h-40zM525 2h7v4h-7z"/><path fill="url(#mT4)" d="M108 7h34v3h-34zM258 7h25v3h-25zM309 7h7v3h-7zM360 7h7v3h-7zM534 7h40v3h-40z"/><path fill="url(#tT3)" d="M339 2h13v4h-13zM360 2h7v4h-7zM534 2h40v4h-40zM612 2h19v4h-19z"/><path fill="#ffffff" d="M3 6h13v1h-13z"/><path fill="#f2804c" d="M1 2h1v8h-1zM16 2h1v8h-1zM160 2h1v8h-1zM256 2h1v8h-1zM298 2h1v8h-1zM307 2h1v8h-1zM337 2h1v8h-1zM358 2h1v8h-1zM367 2h1v8h-1zM469 2h1v8h-1zM574 2h1v8h-1zM589 2h1v8h-1zM640 2h1v8h-1z"/><path fill="#ffffff" d="M25 2h1v8h-1zM61 2h1v8h-1zM70 2h1v8h-1zM106 2h1v8h-1zM142 2h1v8h-1zM154 2h1v8h-1zM208 2h1v8h-1zM283 2h1v8h-1zM352 2h1v8h-1zM409 2h1v8h-1zM421 2h1v8h-1zM481 2h1v8h-1zM523 2h1v8h-1zM595 2h1v8h-1zM610 2h1v8h-1z"/></g><g transform="translate(0,57)"><path fill="url(#tM1)" d="M3 6h28v4h-28zM72 6h7v4h-7zM159 6h28v4h-28zM189 6h7v4h-7zM399 6h13v4h-13zM546 6h28v4h-28zM576 6h16v4h-16z"/><path fill="url(#mM2)" d="M3 2h28v3h-28zM51 2h19v3h-19zM81 2h22v3h-22zM306 2h28v3h-28zM345 2h10v3h-10zM414 2h10v3h-10zM432 2h7v3h-7zM441 2h16v3h-16zM495 2h25v3h-25zM594 2h16v3h-16z"/><path fill="url(#tM4)" d="M33 6h16v4h-16zM81 6h22v4h-22zM357 6h40v4h-40zM432 6h7v4h-7zM459 6h34v4h-34z"/><path fill="url(#mM0)" d="M33 2h16v3h-16zM159 2h28v3h-28zM189 2h7v3h-7zM639 2h7v3h-7zM648 2h25v3h-25z"/><path fill="url(#tM0)" d="M51 6h19v4h-19zM105 6h16v4h-16zM345 6h10v4h-10zM630 6h7v4h-7z"/><path fill="url(#mM4)" d="M72 2h7v3h-7zM198 2h28v3h-28zM276 2h28v3h-28zM336 2h7v3h-7zM357 2h40v3h-40zM546 2h28v3h-28zM612 2h16v3h-16zM630 2h7v3h-7z"/><path fill="url(#mM3)" d="M105 2h16v3h-16zM123 2h10v3h-10zM135 2h22v3h-22zM228 2h46v3h-46zM399 2h13v3h-13zM522 2h22v3h-22z"/><path fill="url(#tM3)" d="M123 6h10v4h-10zM198 6h28v4h-28zM336 6h7v4h-7zM414 6h10v4h-10zM441 6h16v4h-16zM594 6h16v4h-16zM612 6h16v4h-16zM639 6h7v4h-7z"/><path fill="url(#tM2)" d="M135 6h22v4h-22zM228 6h46v4h-46zM276 6h28v4h-28zM306 6h28v4h-28zM426 6h4v4h-4zM495 6h25v4h-25zM522 6h22v4h-22zM648 6h25v4h-25z"/><path fill="url(#mM1)" d="M426 2h4v3h-4zM459 2h34v3h-34zM576 2h16v3h-16z"/><path fill="#f2804c" d="M70 2h1v9h-1zM79 2h1v9h-1zM121 2h1v9h-1zM187 2h1v9h-1zM334 2h1v9h-1zM343 2h1v9h-1zM355 2h1v9h-1zM439 2h1v9h-1zM457 2h1v9h-1zM520 2h1v9h-1z"/><path fill="#ffffff" d="M1 2h1v9h-1zM103 2h1v9h-1zM226 2h1v9h-1zM274 2h1v9h-1zM304 2h1v9h-1zM412 2h1v9h-1zM430 2h1v9h-1zM544 2h1v9h-1zM592 2h1v9h-1zM610 2h1v9h-1zM628 2h1v9h-1z"/></g><g transform="translate(0,69)"><path fill="url(#tT4)" d="M3 2h22v4h-22zM27 2h28v4h-28zM87 2h13v4h-13zM138 2h7v4h-7zM237 2h25v4h-25zM414 2h13v4h-13zM558 2h46v4h-46zM606 2h40v4h-40z"/><path fill="url(#mT3)" d="M3 7h22v3h-22zM27 7h28v3h-28zM87 7h13v3h-13zM102 7h13v3h-13zM147 7h16v3h-16zM216 7h19v3h-19zM336 7h4v3h-4zM534 7h13v3h-13zM549 7h7v3h-7z"/><path fill="url(#tT2)" d="M57 2h28v4h-28zM102 2h13v4h-13zM147 2h16v4h-16zM165 2h10v4h-10zM405 2h7v4h-7zM486 2h34v4h-34zM648 2h10v4h-10z"/><path fill="url(#mT1)" d="M57 7h28v3h-28zM117 7h4v3h-4zM138 7h7v3h-7zM378 7h25v3h-25zM405 7h7v3h-7zM429 7h13v3h-13zM522 7h10v3h-10z"/><path fill="url(#tT0)" d="M117 2h4v4h-4zM264 2h46v4h-46zM369 2h7v4h-7zM429 2h13v4h-13zM549 2h7v4h-7z"/><path fill="url(#tT3)" d="M123 2h13v4h-13zM216 2h19v4h-19zM342 2h25v4h-25zM378 2h25v4h-25zM522 2h10v4h-10z"/><path fill="url(#mT0)" d="M123 7h13v3h-13zM195 7h19v3h-19zM237 7h25v3h-25zM264 7h46v3h-46zM444 7h40v3h-40zM558 7h46v3h-46zM606 7h40v3h-40zM648 7h10v3h-10zM660 7h13v3h-13z"/><path fill="url(#mT2)" d="M165 7h10v3h-10zM414 7h13v3h-13zM486 7h34v3h-34z"/><path fill="url(#tT1)" d="M177 2h16v4h-16zM195 2h19v4h-19zM312 2h22v4h-22zM336 2h4v4h-4zM444 2h40v4h-40zM534 2h13v4h-13zM660 2h13v4h-13z"/><path fill="url(#mT4)" d="M177 7h16v3h-16zM312 7h22v3h-22zM342 7h25v3h-25zM369 7h7v3h-7z"/><path fill="#ffffff" d="M378 6h25v1h-25z"/><path fill="#f2804c" d="M1 2h1v8h-1zM100 2h1v8h-1zM121 2h1v8h-1zM235 2h1v8h-1zM403 2h1v8h-1zM427 2h1v8h-1zM520 2h1v8h-1zM547 2h1v8h-1zM658 2h1v8h-1z"/><path fill="#ffffff" d="M55 2h1v8h-1zM115 2h1v8h-1zM175 2h1v8h-1zM214 2h1v8h-1zM310 2h1v8h-1zM367 2h1v8h-1zM412 2h1v8h-1zM442 2h1v8h-1zM532 2h1v8h-1zM556 2h1v8h-1zM604 2h1v8h-1zM646 2h1v8h-1z"/></g><g transform="translate(0,80)"><path fill="url(#tM4)" d="M3 6h25v4h-25zM165 6h7v4h-7zM201 6h16v4h-16zM489 6h13v4h-13zM504 6h13v4h-13zM639 6h7v4h-7z"/><path fill="url(#mM3)" d="M3 2h25v3h-25zM234 2h22v3h-22zM285 2h28v3h-28zM315 2h46v3h-46zM504 2h13v3h-13zM561 2h7v3h-7zM570 2h25v3h-25zM654 2h7v3h-7zM663 2h4v3h-4z"/><path fill="url(#tM3)" d="M30 6h28v4h-28zM90 6h7v4h-7zM315 6h46v4h-46zM435 6h22v4h-22zM459 6h28v4h-28zM555 6h4v4h-4zM663 6h4v4h-4z"/><path fill="url(#mM4)" d="M30 2h28v3h-28zM201 2h16v3h-16zM555 2h4v3h-4zM597 2h40v3h-40z"/><path fill="url(#tM2)" d="M60 6h28v4h-28zM99 6h28v4h-28zM285 6h28v4h-28zM363 6h13v4h-13zM387 6h46v4h-46zM519 6h34v4h-34zM561 6h7v4h-7zM570 6h25v4h-25zM648 6h4v4h-4zM654 6h7v4h-7zM669 6h4v4h-4z"/><path fill="url(#mM2)" d="M60 2h28v3h-28zM90 2h7v3h-7zM129 2h34v3h-34zM258 2h25v3h-25zM387 2h46v3h-46zM519 2h34v3h-34zM639 2h7v3h-7z"/><path fill="url(#mM1)" d="M99 2h28v3h-28zM363 2h13v3h-13zM435 2h22v3h-22zM459 2h28v3h-28zM489 2h13v3h-13zM648 2h4v3h-4z"/><path fill="url(#tM1)" d="M129 6h34v4h-34zM174 6h25v4h-25zM219 6h13v4h-13zM234 6h22v4h-22zM258 6h25v4h-25zM597 6h40v4h-40z"/><path fill="url(#mM0)" d="M165 2h7v3h-7zM174 2h25v3h-25zM219 2h13v3h-13zM669 2h4v3h-4z"/><path fill="#f2804c" d="M88 2h1v8h-1zM172 2h1v8h-1zM199 2h1v8h-1zM502 2h1v8h-1zM568 2h1v8h-1zM637 2h1v8h-1z"/><path fill="#ffffff" d="M1 2h1v8h-1zM58 2h1v8h-1zM217 2h1v8h-1zM232 2h1v8h-1zM256 2h1v8h-1zM385 2h1v8h-1zM457 2h1v8h-1zM487 2h1v8h-1zM517 2h1v8h-1zM553 2h1v8h-1zM559 2h1v8h-1zM595 2h1v8h-1zM652 2h1v8h-1zM661 2h1v8h-1z"/></g><g transform="translate(0,91)"><path fill="url(#tT1)" d="M3 2h25v4h-25zM99 2h13v4h-13zM114 2h46v4h-46zM261 2h46v4h-46zM309 2h19v4h-19zM462 2h13v4h-13zM507 2h10v4h-10zM564 2h28v4h-28zM624 2h7v4h-7z"/><path fill="url(#mT4)" d="M3 7h25v3h-25zM30 7h22v3h-22zM162 7h28v3h-28zM192 7h25v3h-25zM330 7h13v3h-13zM453 7h7v3h-7zM492 7h13v3h-13zM633 7h10v3h-10zM645 7h28v3h-28z"/><path fill="url(#tT3)" d="M30 2h22v4h-22zM54 2h13v4h-13zM477 2h13v4h-13zM594 2h28v4h-28z"/><path fill="url(#mT3)" d="M54 7h13v3h-13zM114 7h46v3h-46zM261 7h46v3h-46zM462 7h13v3h-13zM477 7h13v3h-13zM507 7h10v3h-10zM519 7h25v3h-25zM564 7h28v3h-28z"/><path fill="url(#tT0)" d="M69 2h28v4h-28zM219 2h40v4h-40zM390 2h13v4h-13zM423 2h28v4h-28z"/><path fill="url(#mT0)" d="M69 7h28v3h-28zM390 7h13v3h-13zM405 7h16v3h-16zM423 7h28v3h-28zM594 7h28v3h-28z"/><path fill="url(#mT1)" d="M99 7h13v3h-13zM219 7h40v3h-40zM309 7h19v3h-19zM369 7h19v3h-19z"/><path fill="url(#tT2)" d="M162 2h28v4h-28zM330 2h13v4h-13zM345 2h22v4h-22zM369 2h19v4h-19zM405 2h16v4h-16zM453 2h7v4h-7zM492 2h13v4h-13zM633 2h10v4h-10z"/><path fill="url(#tT4)" d="M192 2h25v4h-25zM519 2h25v4h-25zM546 2h16v4h-16zM645 2h28v4h-28z"/><path fill="url(#mT2)" d="M345 7h22v3h-22zM546 7h16v3h-16zM624 7h7v3h-7z"/><path fill="#f2804c" d="M1 2h1v8h-1zM28 2h1v8h-1zM160 2h1v8h-1zM190 2h1v8h-1zM217 2h1v8h-1zM307 2h1v8h-1zM328 2h1v8h-1zM343 2h1v8h-1zM388 2h1v8h-1zM403 2h1v8h-1zM451 2h1v8h-1zM517 2h1v8h-1z"/><path fill="#ffffff" d="M52 2h1v8h-1zM67 2h1v8h-1zM112 2h1v8h-1zM367 2h1v8h-1zM460 2h1v8h-1zM475 2h1v8h-1zM544 2h1v8h-1zM562 2h1v8h-1zM592 2h1v8h-1zM631 2h1v8h-1z"/></g><g transform="translate(0,102)"><path fill="url(#tM3)" d="M3 6h34v4h-34zM75 6h22v4h-22zM333 6h22v4h-22zM357 6h16v4h-16zM504 6h7v4h-7zM615 6h28v4h-28z"/><path fill="url(#mM4)" d="M3 2h34v3h-34zM45 2h28v3h-28zM144 2h28v3h-28zM297 2h34v3h-34zM375 2h4v3h-4zM504 2h7v3h-7zM615 2h28v3h-28z"/><path fill="url(#tM1)" d="M39 6h4v4h-4zM45 6h28v4h-28zM399 6h40v4h-40zM456 6h4v4h-4zM513 6h34v4h-34z"/><path fill="url(#mM3)" d="M39 2h4v3h-4zM99 2h34v3h-34zM381 2h10v3h-10zM441 2h13v3h-13zM579 2h34v3h-34z"/><path fill="url(#mM1)" d="M75 2h22v3h-22zM255 2h19v3h-19zM333 2h22v3h-22zM462 2h40v3h-40zM513 2h34v3h-34zM645 2h7v3h-7z"/><path fill="url(#tM0)" d="M99 6h34v4h-34zM198 6h7v4h-7zM255 6h19v4h-19zM393 6h4v4h-4zM441 6h13v4h-13zM561 6h16v4h-16zM579 6h34v4h-34z"/><path fill="url(#tM4)" d="M135 6h7v4h-7zM144 6h28v4h-28zM174 6h22v4h-22zM381 6h10v4h-10zM549 6h10v4h-10zM645 6h7v4h-7zM654 6h19v4h-19z"/><path fill="url(#mM2)" d="M135 2h7v3h-7zM174 2h22v3h-22zM198 2h7v3h-7zM207 2h46v3h-46zM399 2h40v3h-40zM561 2h16v3h-16zM654 2h19v3h-19z"/><path fill="url(#tM2)" d="M207 6h46v4h-46zM276 6h19v4h-19zM297 6h34v4h-34zM375 6h4v4h-4zM462 6h40v4h-40z"/><path fill="url(#mM0)" d="M276 2h19v3h-19zM357 2h16v3h-16zM393 2h4v3h-4zM456 2h4v3h-4zM549 2h10v3h-10z"/><path fill="#ffffff" d="M561 5h16v1h-16z"/><path fill="#f2804c" d="M37 2h1v8h-1zM43 2h1v8h-1zM73 2h1v8h-1zM133 2h1v8h-1zM172 2h1v8h-1zM331 2h1v8h-1zM355 2h1v8h-1zM397 2h1v8h-1zM439 2h1v8h-1zM547 2h1v8h-1zM613 2h1v8h-1zM643 2h1v8h-1zM652 2h1v8h-1z"/><path fill="#ffffff" d="M97 2h1v8h-1zM142 2h1v8h-1zM274 2h1v8h-1zM373 2h1v8h-1zM391 2h1v8h-1zM460 2h1v8h-1zM577 2h1v8h-1z"/></g><g transform="translate(0,113)"><path fill="url(#tT2)" d="M3 2h19v4h-19zM60 2h7v4h-7zM78 2h13v4h-13zM165 2h22v4h-22zM204 2h7v4h-7zM213 2h7v4h-7zM327 2h40v4h-40zM561 2h34v4h-34z"/><path fill="url(#mT0)" d="M3 7h19v3h-19zM204 7h7v3h-7zM471 7h40v3h-40zM513 7h34v3h-34zM618 7h25v3h-25z"/><path fill="url(#tT1)" d="M24 2h34v4h-34zM282 2h13v4h-13zM396 2h7v4h-7zM513 2h34v4h-34zM618 2h25v4h-25zM645 2h29v4h-29z"/><path fill="url(#mT1)" d="M24 7h34v3h-34zM108 7h28v3h-28zM165 7h22v3h-22zM297 7h28v3h-28zM369 7h19v3h-19zM561 7h34v3h-34zM645 7h29v3h-29z"/><path fill="url(#mT2)" d="M60 7h7v3h-7zM213 7h7v3h-7zM405 7h34v3h-34zM597 7h19v3h-19z"/><path fill="url(#tT4)" d="M69 2h7v4h-7zM108 2h28v4h-28zM138 2h25v4h-25zM297 2h28v4h-28zM369 2h19v4h-19zM441 2h28v4h-28zM471 2h40v4h-40z"/><path fill="url(#mT3)" d="M69 7h7v3h-7zM138 7h25v3h-25zM222 7h46v3h-46zM396 7h7v3h-7zM441 7h28v3h-28z"/><path fill="url(#mT4)" d="M78 7h13v3h-13zM93 7h13v3h-13zM189 7h13v3h-13zM270 7h10v3h-10zM282 7h13v3h-13zM327 7h40v3h-40zM390 7h4v3h-4z"/><path fill="url(#tT0)" d="M93 2h13v4h-13zM189 2h13v4h-13zM222 2h46v4h-46zM270 2h10v4h-10zM390 2h4v4h-4zM405 2h34v4h-34zM597 2h19v4h-19z"/><path fill="#ffffff" d="M297 6h28v1h-28z"/><path fill="#f2804c" d="M91 2h1v8h-1zM187 2h1v8h-1zM211 2h1v8h-1zM367 2h1v8h-1zM394 2h1v8h-1zM511 2h1v8h-1zM595 2h1v8h-1zM616 2h1v8h-1zM643 2h1v8h-1z"/><path fill="#ffffff" d="M1 2h1v8h-1zM22 2h1v8h-1zM58 2h1v8h-1zM220 2h1v8h-1zM280 2h1v8h-1zM388 2h1v8h-1zM439 2h1v8h-1zM469 2h1v8h-1z"/></g><g transform="translate(0,124)"><path fill="url(#tM2)" d="M3 6h46v4h-46zM165 6h40v4h-40zM225 6h7v4h-7z"/><path fill="url(#mM0)" d="M3 2h46v3h-46zM165 2h40v3h-40zM360 2h16v3h-16zM510 2h22v3h-22zM561 2h28v3h-28zM591 2h4v3h-4zM642 2h32v3h-32z"/><path fill="url(#tM4)" d="M51 6h19v4h-19zM120 6h7v4h-7zM207 6h7v4h-7zM243 6h40v4h-40zM561 6h28v4h-28zM597 6h13v4h-13zM627 6h7v4h-7z"/><path fill="url(#mM4)" d="M51 2h19v3h-19zM120 2h7v3h-7zM216 2h7v3h-7zM243 2h40v3h-40zM294 2h13v3h-13zM318 2h40v3h-40zM378 2h19v3h-19zM441 2h25v3h-25zM627 2h7v3h-7z"/><path fill="url(#tM3)" d="M72 6h46v4h-46zM309 6h7v4h-7zM510 6h22v4h-22z"/><path fill="url(#mM2)" d="M72 2h46v3h-46zM207 2h7v3h-7zM225 2h7v3h-7zM285 2h7v3h-7zM399 2h40v3h-40zM468 2h13v3h-13zM636 2h4v3h-4z"/><path fill="url(#tM0)" d="M129 6h34v4h-34zM234 6h7v4h-7zM378 6h19v4h-19zM399 6h40v4h-40zM441 6h25v4h-25zM468 6h13v4h-13zM534 6h25v4h-25zM591 6h4v4h-4zM642 6h32v4h-32z"/><path fill="url(#mM3)" d="M129 2h34v3h-34zM234 2h7v3h-7zM597 2h13v3h-13zM612 2h13v3h-13z"/><path fill="url(#tM1)" d="M216 6h7v4h-7zM285 6h7v4h-7zM294 6h13v4h-13zM318 6h40v4h-40zM360 6h16v4h-16zM483 6h25v4h-25zM612 6h13v4h-13zM636 6h4v4h-4z"/><path fill="url(#mM1)" d="M309 2h7v3h-7zM483 2h25v3h-25zM534 2h25v3h-25z"/><path fill="#f2804c" d="M70 2h1v8h-1zM205 2h1v8h-1zM232 2h1v8h-1zM283 2h1v8h-1zM307 2h1v8h-1zM358 2h1v8h-1zM376 2h1v8h-1zM397 2h1v8h-1zM439 2h1v8h-1zM481 2h1v8h-1zM508 2h1v8h-1zM634 2h1v8h-1z"/><path fill="#ffffff" d="M223 2h1v8h-1zM241 2h1v8h-1zM316 2h1v8h-1zM532 2h1v8h-1zM559 2h1v8h-1z"/></g><g transform="translate(0,135)"><path fill="url(#tT3)" d="M3 2h34v4h-34zM39 2h25v4h-25zM108 2h28v4h-28zM168 2h7v4h-7zM291 2h28v4h-28zM357 2h7v4h-7zM558 2h13v4h-13zM594 2h22v4h-22z"/><path fill="url(#mT0)" d="M3 7h34v3h-34zM138 7h7v3h-7zM147 7h19v3h-19zM177 7h4v3h-4zM357 7h7v3h-7zM573 7h13v3h-13zM666 7h8v3h-8z"/><path fill="url(#mT4)" d="M39 7h25v3h-25zM66 7h40v3h-40zM168 7h7v3h-7zM183 7h28v3h-28zM321 7h4v3h-4zM327 7h16v3h-16zM366 7h13v3h-13zM486 7h13v3h-13zM537 7h10v3h-10zM549 7h7v3h-7zM558 7h13v3h-13z"/><path fill="url(#tT1)" d="M66 2h40v4h-40zM138 2h7v4h-7zM177 2h4v4h-4zM321 2h4v4h-4zM327 2h16v4h-16zM537 2h10v4h-10z"/><path fill="url(#mT2)" d="M108 7h28v3h-28zM219 7h7v3h-7zM291 7h28v3h-28zM411 7h25v3h-25z"/><path fill="url(#tT4)" d="M147 2h19v4h-19zM213 2h4v4h-4zM228 2h28v4h-28zM366 2h13v4h-13zM486 2h13v4h-13zM501 2h34v4h-34zM630 2h34v4h-34z"/><path fill="url(#tT0)" d="M183 2h28v4h-28zM219 2h7v4h-7zM264 2h25v4h-25zM345 2h10v4h-10zM549 2h7v4h-7zM573 2h13v4h-13zM588 2h4v4h-4zM618 2h10v4h-10zM666 2h8v4h-8z"/><path fill="url(#mT3)" d="M213 7h4v3h-4zM264 7h25v3h-25zM345 7h10v3h-10zM594 7h22v3h-22zM618 7h10v3h-10zM630 7h34v3h-34z"/><path fill="url(#mT1)" d="M228 7h28v3h-28zM258 7h4v3h-4zM381 7h28v3h-28zM438 7h46v3h-46zM501 7h34v3h-34zM588 7h4v3h-4z"/><path fill="url(#tT2)" d="M258 2h4v4h-4zM381 2h28v4h-28zM411 2h25v4h-25zM438 2h46v4h-46z"/><path fill="#ffffff" d="M291 6h28v1h-28zM558 6h13v1h-13z"/><path fill="#f2804c" d="M145 2h1v8h-1zM166 2h1v8h-1zM181 2h1v8h-1zM211 2h1v8h-1zM226 2h1v8h-1zM289 2h1v8h-1zM325 2h1v8h-1zM343 2h1v8h-1zM436 2h1v8h-1zM547 2h1v8h-1zM571 2h1v8h-1zM586 2h1v8h-1zM592 2h1v8h-1zM616 2h1v8h-1z"/><path fill="#ffffff" d="M37 2h1v8h-1zM106 2h1v8h-1zM217 2h1v8h-1zM256 2h1v8h-1zM262 2h1v8h-1zM379 2h1v8h-1zM499 2h1v8h-1zM535 2h1v8h-1zM556 2h1v8h-1z"/></g><g transform="translate(0,146)"><path fill="url(#tM4)" d="M3 6h46v4h-46zM87 6h7v4h-7zM234 6h10v4h-10zM345 6h19v4h-19zM411 6h28v4h-28zM480 6h40v4h-40z"/><path fill="url(#mM2)" d="M3 2h46v3h-46zM87 2h7v3h-7zM234 2h10v3h-10zM246 2h46v3h-46zM321 2h22v3h-22zM591 2h7v3h-7zM600 2h34v3h-34z"/><path fill="url(#tM0)" d="M51 6h34v4h-34zM174 6h28v4h-28zM321 6h22v4h-22zM402 6h7v4h-7zM441 6h19v4h-19zM462 6h16v4h-16zM570 6h19v4h-19zM591 6h7v4h-7z"/><path fill="url(#mM0)" d="M51 2h34v3h-34zM147 2h25v3h-25zM204 2h28v3h-28zM366 2h7v3h-7zM462 2h16v3h-16zM480 2h40v3h-40z"/><path fill="url(#tM1)" d="M96 6h7v4h-7zM366 6h7v4h-7zM636 6h34v4h-34z"/><path fill="url(#mM1)" d="M96 2h7v3h-7zM105 2h28v3h-28zM345 2h19v3h-19zM402 2h7v3h-7zM441 2h19v3h-19zM522 2h46v3h-46zM636 2h34v3h-34z"/><path fill="url(#tM3)" d="M105 6h28v4h-28zM135 6h10v4h-10zM147 6h25v4h-25zM246 6h46v4h-46zM294 6h25v4h-25zM522 6h46v4h-46zM600 6h34v4h-34z"/><path fill="url(#mM3)" d="M135 2h10v3h-10zM294 2h25v3h-25zM570 2h19v3h-19z"/><path fill="url(#mM4)" d="M174 2h28v3h-28zM375 2h25v3h-25zM411 2h28v3h-28z"/><path fill="url(#tM2)" d="M204 6h28v4h-28zM375 6h25v4h-25z"/><path fill="#f2804c" d="M94 2h1v8h-1zM172 2h1v8h-1zM292 2h1v8h-1zM373 2h1v8h-1zM520 2h1v8h-1z"/><path fill="#ffffff" d="M1 2h1v8h-1zM133 2h1v8h-1zM202 2h1v8h-1zM319 2h1v8h-1zM343 2h1v8h-1zM364 2h1v8h-1zM409 2h1v8h-1zM439 2h1v8h-1zM478 2h1v8h-1z"/></g><g transform="translate(0,157)"><path fill="url(#tT2)" d="M3 2h28v4h-28zM108 2h25v4h-25zM282 2h13v4h-13zM399 2h19v4h-19z"/><path fill="url(#mT2)" d="M3 7h28v3h-28zM33 7h4v3h-4zM78 7h28v3h-28zM282 7h13v3h-13zM297 7h28v3h-28zM327 7h34v3h-34zM576 7h13v3h-13z"/><path fill="url(#tT1)" d="M33 2h4v4h-4zM39 2h22v4h-22zM63 2h13v4h-13zM135 2h40v4h-40zM213 2h19v4h-19zM450 2h34v4h-34zM486 2h40v4h-40z"/><path fill="url(#mT3)" d="M39 7h22v3h-22zM108 7h25v3h-25zM399 7h19v3h-19z"/><path fill="url(#mT0)" d="M63 7h13v3h-13zM135 7h40v3h-40zM420 7h28v3h-28zM615 7h19v3h-19z"/><path fill="url(#tT3)" d="M78 2h28v4h-28zM177 2h19v4h-19zM198 2h13v4h-13zM576 2h13v4h-13zM636 2h7v4h-7zM654 2h20v4h-20z"/><path fill="url(#mT1)" d="M177 7h19v3h-19zM213 7h19v3h-19zM234 7h46v3h-46zM450 7h34v3h-34zM486 7h40v3h-40zM591 7h22v3h-22zM636 7h7v3h-7zM654 7h20v3h-20z"/><path fill="url(#mT4)" d="M198 7h13v3h-13zM363 7h34v3h-34zM528 7h46v3h-46zM645 7h7v3h-7z"/><path fill="url(#tT0)" d="M234 2h46v4h-46zM363 2h34v4h-34zM420 2h28v4h-28z"/><path fill="url(#tT4)" d="M297 2h28v4h-28zM327 2h34v4h-34zM528 2h46v4h-46zM591 2h22v4h-22zM615 2h19v4h-19zM645 2h7v4h-7z"/><path fill="#f2804c" d="M31 2h1v8h-1zM61 2h1v8h-1zM133 2h1v8h-1zM175 2h1v8h-1zM295 2h1v8h-1zM325 2h1v8h-1zM361 2h1v8h-1zM526 2h1v8h-1zM574 2h1v8h-1zM613 2h1v8h-1zM643 2h1v8h-1z"/><path fill="#ffffff" d="M37 2h1v8h-1zM106 2h1v8h-1zM196 2h1v8h-1zM211 2h1v8h-1zM397 2h1v8h-1zM634 2h1v8h-1z"/></g><g transform="translate(0,168)"><path fill="url(#tM1)" d="M3 6h7v4h-7zM81 6h10v4h-10zM108 6h40v4h-40zM279 6h19v4h-19z"/><path fill="url(#mM0)" d="M3 2h7v3h-7zM186 2h7v3h-7zM216 2h16v3h-16zM234 2h7v3h-7zM414 2h10v3h-10zM432 2h7v3h-7zM606 2h7v3h-7zM633 2h34v3h-34z"/><path fill="url(#tM3)" d="M12 6h16v4h-16zM72 6h7v4h-7zM414 6h10v4h-10zM426 6h4v4h-4zM432 6h7v4h-7zM531 6h10v4h-10zM606 6h7v4h-7z"/><path fill="url(#mM3)" d="M12 2h16v3h-16zM108 2h40v3h-40zM195 2h19v3h-19zM369 2h25v3h-25zM426 2h4v3h-4zM543 2h19v3h-19z"/><path fill="url(#tM4)" d="M30 6h34v4h-34zM66 6h4v4h-4zM195 6h19v4h-19zM252 6h25v4h-25zM441 6h22v4h-22zM465 6h4v4h-4zM543 6h19v4h-19zM615 6h16v4h-16z"/><path fill="url(#mM2)" d="M30 2h34v3h-34zM81 2h10v3h-10zM243 2h7v3h-7zM300 2h25v3h-25zM327 2h13v3h-13zM465 2h4v3h-4zM471 2h22v3h-22zM495 2h34v3h-34zM564 2h40v3h-40z"/><path fill="url(#mM1)" d="M66 2h4v3h-4zM150 2h34v3h-34zM252 2h25v3h-25zM441 2h22v3h-22z"/><path fill="url(#mM4)" d="M72 2h7v3h-7zM93 2h13v3h-13zM279 2h19v3h-19zM342 2h25v3h-25zM396 2h16v3h-16zM531 2h10v3h-10zM615 2h16v3h-16zM669 2h5v3h-5z"/><path fill="url(#tM2)" d="M93 6h13v4h-13zM216 6h16v4h-16zM300 6h25v4h-25zM327 6h13v4h-13zM342 6h25v4h-25zM471 6h22v4h-22zM495 6h34v4h-34zM564 6h40v4h-40zM633 6h34v4h-34z"/><path fill="url(#tM0)" d="M150 6h34v4h-34zM186 6h7v4h-7zM234 6h7v4h-7zM243 6h7v4h-7zM369 6h25v4h-25zM396 6h16v4h-16zM669 6h5v4h-5z"/><path fill="#f2804c" d="M1 2h1v8h-1zM28 2h1v8h-1zM184 2h1v8h-1zM232 2h1v8h-1zM250 2h1v8h-1zM277 2h1v8h-1zM367 2h1v8h-1zM463 2h1v8h-1zM562 2h1v8h-1zM604 2h1v8h-1zM613 2h1v8h-1z"/><path fill="#ffffff" d="M10 2h1v8h-1zM79 2h1v8h-1zM106 2h1v8h-1zM214 2h1v8h-1zM298 2h1v8h-1zM394 2h1v8h-1zM430 2h1v8h-1zM439 2h1v8h-1zM469 2h1v8h-1zM529 2h1v8h-1zM631 2h1v8h-1z"/></g><g transform="translate(0,179)"><path fill="url(#tT0)" d="M3 2h4v4h-4zM48 2h28v4h-28zM165 2h13v4h-13zM252 2h7v4h-7zM321 2h19v4h-19zM342 2h25v4h-25zM639 2h16v4h-16z"/><path fill="url(#mT3)" d="M3 7h4v3h-4zM21 7h25v3h-25zM141 7h13v3h-13zM261 7h34v3h-34zM342 7h25v3h-25zM369 7h40v3h-40zM468 7h4v3h-4zM510 7h7v3h-7zM639 7h16v3h-16z"/><path fill="url(#tT1)" d="M9 2h10v4h-10zM216 2h7v4h-7zM369 2h40v4h-40zM510 2h7v4h-7zM585 2h10v4h-10zM597 2h13v4h-13z"/><path fill="url(#mT2)" d="M9 7h10v3h-10zM93 7h46v3h-46zM216 7h7v3h-7zM411 7h28v3h-28zM585 7h10v3h-10zM597 7h13v3h-13z"/><path fill="url(#tT4)" d="M21 2h25v4h-25zM78 2h13v4h-13zM93 2h46v4h-46zM180 2h25v4h-25zM225 2h25v4h-25zM297 2h22v4h-22zM411 2h28v4h-28zM441 2h25v4h-25z"/><path fill="url(#mT1)" d="M48 7h28v3h-28zM165 7h13v3h-13zM180 7h25v3h-25zM540 7h7v3h-7zM549 7h34v3h-34zM627 7h10v3h-10zM657 7h13v3h-13zM672 7h2v3h-2z"/><path fill="url(#mT4)" d="M78 7h13v3h-13z"/><path fill="url(#tT2)" d="M141 2h13v4h-13zM207 2h7v4h-7zM261 2h34v4h-34zM474 2h34v4h-34zM540 2h7v4h-7zM612 2h13v4h-13z"/><path fill="url(#tT3)" d="M156 2h7v4h-7zM468 2h4v4h-4zM519 2h19v4h-19zM549 2h34v4h-34zM627 2h10v4h-10zM657 2h13v4h-13zM672 2h2v4h-2z"/><path fill="url(#mT0)" d="M156 7h7v3h-7zM207 7h7v3h-7zM225 7h25v3h-25zM252 7h7v3h-7zM297 7h22v3h-22zM321 7h19v3h-19zM441 7h25v3h-25zM474 7h34v3h-34zM519 7h19v3h-19zM612 7h13v3h-13z"/><path fill="#ffffff" d="M141 6h13v1h-13zM156 6h7v1h-7z"/><path fill="#f2804c" d="M7 2h1v9h-1zM19 2h1v9h-1zM139 2h1v9h-1zM163 2h1v9h-1zM205 2h1v9h-1zM223 2h1v9h-1zM259 2h1v9h-1zM319 2h1v9h-1zM340 2h1v9h-1zM409 2h1v9h-1zM466 2h1v9h-1zM538 2h1v9h-1zM583 2h1v9h-1zM670 2h1v9h-1z"/><path fill="#ffffff" d="M46 2h1v9h-1zM178 2h1v9h-1zM367 2h1v9h-1zM439 2h1v9h-1zM472 2h1v9h-1zM517 2h1v9h-1zM547 2h1v9h-1zM595 2h1v9h-1zM637 2h1v9h-1zM655 2h1v9h-1z"/></g><g transform="translate(0,191)"><path fill="url(#tM2)" d="M3 6h46v4h-46zM75 6h7v4h-7zM357 6h13v4h-13zM372 6h7v4h-7zM381 6h22v4h-22zM474 6h16v4h-16zM513 6h34v4h-34zM615 6h28v4h-28z"/><path fill="url(#mM4)" d="M3 2h46v3h-46zM90 2h7v3h-7zM150 2h4v3h-4zM195 2h34v3h-34zM357 2h13v3h-13zM381 2h22v3h-22zM663 2h11v3h-11z"/><path fill="url(#tM4)" d="M51 6h22v4h-22zM90 6h7v4h-7zM141 6h7v4h-7zM150 6h4v4h-4zM180 6h13v4h-13zM195 6h34v4h-34zM405 6h4v4h-4zM456 6h16v4h-16zM492 6h19v4h-19zM573 6h13v4h-13z"/><path fill="url(#mM0)" d="M51 2h22v3h-22zM231 2h28v3h-28zM261 2h4v3h-4zM441 2h13v3h-13zM456 2h16v3h-16zM513 2h34v3h-34zM561 2h10v3h-10zM573 2h13v3h-13zM645 2h16v3h-16z"/><path fill="url(#mM3)" d="M75 2h7v3h-7zM84 2h4v3h-4zM99 2h13v3h-13zM114 2h25v3h-25zM372 2h7v3h-7zM405 2h4v3h-4zM411 2h28v3h-28zM549 2h10v3h-10zM615 2h28v3h-28z"/><path fill="url(#tM0)" d="M84 6h4v4h-4zM231 6h28v4h-28zM549 6h10v4h-10zM645 6h16v4h-16z"/><path fill="url(#tM1)" d="M99 6h13v4h-13zM114 6h25v4h-25zM267 6h46v4h-46zM315 6h40v4h-40zM411 6h28v4h-28zM441 6h13v4h-13zM561 6h10v4h-10z"/><path fill="url(#mM1)" d="M141 2h7v3h-7zM180 2h13v3h-13z"/><path fill="url(#tM3)" d="M156 6h22v4h-22zM261 6h4v4h-4zM588 6h25v4h-25zM663 6h11v4h-11z"/><path fill="url(#mM2)" d="M156 2h22v3h-22zM267 2h46v3h-46zM315 2h40v3h-40zM474 2h16v3h-16zM492 2h19v3h-19zM588 2h25v3h-25z"/><path fill="#f2804c" d="M1 2h1v8h-1zM73 2h1v8h-1zM82 2h1v8h-1zM88 2h1v8h-1zM139 2h1v8h-1zM178 2h1v8h-1zM193 2h1v8h-1zM379 2h1v8h-1zM511 2h1v8h-1zM586 2h1v8h-1z"/><path fill="#ffffff" d="M97 2h1v8h-1zM112 2h1v8h-1zM148 2h1v8h-1zM229 2h1v8h-1zM259 2h1v8h-1zM313 2h1v8h-1zM355 2h1v8h-1zM370 2h1v8h-1zM403 2h1v8h-1zM409 2h1v8h-1zM439 2h1v8h-1zM454 2h1v8h-1zM559 2h1v8h-1zM571 2h1v8h-1zM613 2h1v8h-1z"/></g><g transform="translate(0,202)"><path fill="url(#tT2)" d="M3 2h34v4h-34zM285 2h34v4h-34zM396 2h16v4h-16zM507 2h13v4h-13z"/><path fill="url(#mT1)" d="M3 7h34v3h-34zM117 7h34v3h-34zM153 7h19v3h-19zM258 7h25v3h-25zM381 7h4v3h-4zM387 7h7v3h-7zM522 7h13v3h-13zM597 7h13v3h-13zM648 7h26v3h-26z"/><path fill="url(#tT4)" d="M39 2h46v4h-46zM216 2h22v4h-22zM240 2h7v4h-7zM321 2h16v4h-16zM414 2h40v4h-40zM465 2h40v4h-40z"/><path fill="url(#mT2)" d="M39 7h46v3h-46zM216 7h22v3h-22zM249 7h7v3h-7zM285 7h34v3h-34zM321 7h16v3h-16zM339 7h34v3h-34zM414 7h40v3h-40zM465 7h40v3h-40zM507 7h13v3h-13zM561 7h7v3h-7z"/><path fill="url(#tT1)" d="M87 2h28v4h-28zM117 2h34v4h-34zM387 2h7v4h-7zM537 2h22v4h-22zM561 2h7v4h-7zM648 2h26v4h-26z"/><path fill="url(#mT3)" d="M87 7h28v3h-28zM174 7h40v3h-40zM537 7h22v3h-22zM570 7h16v3h-16z"/><path fill="url(#tT0)" d="M153 2h19v4h-19zM249 2h7v4h-7zM381 2h4v4h-4zM588 2h7v4h-7zM612 2h22v4h-22z"/><path fill="url(#tT3)" d="M174 2h40v4h-40zM258 2h25v4h-25zM339 2h34v4h-34zM522 2h13v4h-13zM570 2h16v4h-16zM597 2h13v4h-13zM636 2h10v4h-10z"/><path fill="url(#mT4)" d="M240 7h7v3h-7zM636 7h10v3h-10z"/><path fill="url(#mT0)" d="M396 7h16v3h-16zM588 7h7v3h-7zM612 7h22v3h-22z"/><path fill="#f2804c" d="M115 2h1v8h-1zM151 2h1v8h-1zM172 2h1v8h-1zM214 2h1v8h-1zM238 2h1v8h-1zM385 2h1v8h-1zM505 2h1v8h-1zM568 2h1v8h-1zM595 2h1v8h-1z"/><path fill="#ffffff" d="M37 2h1v8h-1zM247 2h1v8h-1zM256 2h1v8h-1zM283 2h1v8h-1zM319 2h1v8h-1zM394 2h1v8h-1zM412 2h1v8h-1zM520 2h1v8h-1zM559 2h1v8h-1zM586 2h1v8h-1zM610 2h1v8h-1zM646 2h1v8h-1z"/></g><g transform="translate(0,213)"><path fill="url(#tM1)" d="M3 6h7v4h-7zM12 6h13v4h-13zM84 6h34v4h-34zM324 6h40v4h-40zM387 6h19v4h-19z"/><path fill="url(#mM3)" d="M3 2h7v3h-7zM27 2h46v3h-46zM147 2h25v3h-25zM246 2h25v3h-25zM474 2h40v3h-40zM582 2h46v3h-46z"/><path fill="url(#mM0)" d="M12 2h13v3h-13zM273 2h28v3h-28zM387 2h19v3h-19zM408 2h22v3h-22zM432 2h34v3h-34zM516 2h10v3h-10zM669 2h5v3h-5z"/><path fill="url(#tM3)" d="M27 6h46v4h-46zM147 6h25v4h-25zM174 6h46v4h-46zM246 6h25v4h-25zM408 6h22v4h-22zM468 6h4v4h-4zM528 6h7v4h-7z"/><path fill="url(#tM2)" d="M75 6h7v4h-7zM273 6h28v4h-28zM303 6h19v4h-19zM516 6h10v4h-10zM537 6h13v4h-13zM552 6h28v4h-28zM582 6h46v4h-46z"/><path fill="url(#mM1)" d="M75 2h7v3h-7zM174 2h46v3h-46zM303 2h19v3h-19zM537 2h13v3h-13zM552 2h28v3h-28zM630 2h22v3h-22z"/><path fill="url(#mM4)" d="M84 2h34v3h-34zM222 2h22v3h-22zM324 2h40v3h-40zM375 2h10v3h-10zM468 2h4v3h-4z"/><path fill="url(#tM4)" d="M120 6h25v4h-25zM432 6h34v4h-34z"/><path fill="url(#mM2)" d="M120 2h25v3h-25zM528 2h7v3h-7zM654 2h13v3h-13z"/><path fill="url(#tM0)" d="M222 6h22v4h-22zM375 6h10v4h-10zM474 6h40v4h-40zM630 6h22v4h-22zM654 6h13v4h-13zM669 6h5v4h-5z"/><path fill="#ffffff" d="M3 5h7v1h-7z"/><path fill="#f2804c" d="M25 2h1v8h-1zM73 2h1v8h-1zM82 2h1v8h-1zM118 2h1v8h-1zM145 2h1v8h-1zM373 2h1v8h-1zM430 2h1v8h-1zM466 2h1v8h-1zM472 2h1v8h-1zM526 2h1v8h-1zM550 2h1v8h-1zM667 2h1v8h-1z"/><path fill="#ffffff" d="M1 2h1v8h-1zM10 2h1v8h-1zM172 2h1v8h-1zM220 2h1v8h-1zM244 2h1v8h-1zM271 2h1v8h-1zM301 2h1v8h-1zM322 2h1v8h-1zM385 2h1v8h-1zM514 2h1v8h-1z"/></g><g transform="translate(0,224)"><path fill="url(#tT0)" d="M3 2h13v4h-13zM18 2h40v4h-40zM60 2h22v4h-22zM129 2h25v4h-25zM192 2h22v4h-22zM363 2h28v4h-28zM534 2h13v4h-13z"/><path fill="url(#mT0)" d="M3 7h13v3h-13zM84 7h16v3h-16zM156 7h34v3h-34zM192 7h22v3h-22zM291 7h19v3h-19zM330 7h25v3h-25zM363 7h28v3h-28zM417 7h28v3h-28zM462 7h34v3h-34zM498 7h34v3h-34z"/><path fill="url(#mT3)" d="M18 7h40v3h-40zM216 7h7v3h-7zM357 7h4v3h-4zM411 7h4v3h-4zM534 7h13v3h-13zM549 7h4v3h-4zM576 7h25v3h-25zM657 7h17v3h-17z"/><path fill="url(#mT2)" d="M60 7h22v3h-22zM102 7h25v3h-25zM129 7h25v3h-25zM555 7h19v3h-19z"/><path fill="url(#tT3)" d="M84 2h16v4h-16zM273 2h16v4h-16zM462 2h34v4h-34zM549 2h4v4h-4zM645 2h10v4h-10z"/><path fill="url(#tT4)" d="M102 2h25v4h-25zM156 2h34v4h-34zM312 2h16v4h-16zM555 2h19v4h-19z"/><path fill="url(#tT1)" d="M216 2h7v4h-7zM576 2h25v4h-25zM603 2h40v4h-40zM657 2h17v4h-17z"/><path fill="url(#tT2)" d="M225 2h46v4h-46zM291 2h19v4h-19zM330 2h25v4h-25zM357 2h4v4h-4zM393 2h16v4h-16zM411 2h4v4h-4zM417 2h28v4h-28zM447 2h13v4h-13zM498 2h34v4h-34z"/><path fill="url(#mT1)" d="M225 7h46v3h-46zM645 7h10v3h-10z"/><path fill="url(#mT4)" d="M273 7h16v3h-16zM312 7h16v3h-16zM393 7h16v3h-16zM447 7h13v3h-13zM603 7h40v3h-40z"/><path fill="#ffffff" d="M462 6h34v1h-34z"/><path fill="#f2804c" d="M1 2h1v8h-1zM214 2h1v8h-1zM271 2h1v8h-1zM328 2h1v8h-1zM460 2h1v8h-1zM655 2h1v8h-1z"/><path fill="#ffffff" d="M16 2h1v8h-1zM58 2h1v8h-1zM190 2h1v8h-1zM223 2h1v8h-1zM289 2h1v8h-1zM310 2h1v8h-1zM355 2h1v8h-1zM361 2h1v8h-1zM391 2h1v8h-1zM409 2h1v8h-1zM445 2h1v8h-1zM496 2h1v8h-1zM532 2h1v8h-1zM547 2h1v8h-1zM643 2h1v8h-1z"/></g><g transform="translate(0,235)"><path fill="url(#tM2)" d="M3 6h7v4h-7zM45 6h10v4h-10zM57 6h16v4h-16zM216 6h7v4h-7zM357 6h46v4h-46zM462 6h22v4h-22z"/><path fill="url(#mM3)" d="M3 2h7v3h-7zM75 2h40v3h-40zM150 2h19v3h-19zM444 2h16v3h-16zM573 2h28v3h-28z"/><path fill="url(#tM4)" d="M12 6h13v4h-13zM126 6h13v4h-13zM150 6h19v4h-19zM189 6h25v4h-25zM225 6h16v4h-16zM531 6h40v4h-40zM573 6h28v4h-28zM603 6h7v4h-7z"/><path fill="url(#mM4)" d="M12 2h13v3h-13zM27 2h16v3h-16zM117 2h7v3h-7zM243 2h46v3h-46zM291 2h40v3h-40zM342 2h7v3h-7zM405 2h22v3h-22zM612 2h7v3h-7z"/><path fill="url(#tM0)" d="M27 6h16v4h-16zM117 6h7v4h-7zM243 6h46v4h-46zM342 6h7v4h-7zM405 6h22v4h-22zM429 6h13v4h-13zM444 6h16v4h-16zM507 6h13v4h-13zM522 6h7v4h-7zM636 6h34v4h-34z"/><path fill="url(#mM2)" d="M45 2h10v3h-10zM189 2h25v3h-25zM351 2h4v3h-4zM429 2h13v3h-13zM462 2h22v3h-22zM531 2h40v3h-40zM621 2h13v3h-13z"/><path fill="url(#mM0)" d="M57 2h16v3h-16zM141 2h7v3h-7zM171 2h16v3h-16zM225 2h16v3h-16zM333 2h7v3h-7zM357 2h46v3h-46zM486 2h19v3h-19zM507 2h13v3h-13zM636 2h34v3h-34z"/><path fill="url(#tM1)" d="M75 6h40v4h-40zM291 6h40v4h-40zM351 6h4v4h-4zM486 6h19v4h-19zM612 6h7v4h-7z"/><path fill="url(#mM1)" d="M126 2h13v3h-13zM216 2h7v3h-7zM522 2h7v3h-7zM603 2h7v3h-7z"/><path fill="url(#tM3)" d="M141 6h7v4h-7zM171 6h16v4h-16zM333 6h7v4h-7zM621 6h13v4h-13z"/><path fill="#f2804c" d="M10 2h1v8h-1zM43 2h1v8h-1zM55 2h1v8h-1zM115 2h1v8h-1zM139 2h1v8h-1zM148 2h1v8h-1zM187 2h1v8h-1zM241 2h1v8h-1zM289 2h1v8h-1zM355 2h1v8h-1zM403 2h1v8h-1zM442 2h1v8h-1zM460 2h1v8h-1zM520 2h1v8h-1zM571 2h1v8h-1zM601 2h1v8h-1zM610 2h1v8h-1zM619 2h1v8h-1zM634 2h1v8h-1z"/><path fill="#ffffff" d="M73 2h1v8h-1zM214 2h1v8h-1zM223 2h1v8h-1zM427 2h1v8h-1zM484 2h1v8h-1z"/></g><g transform="translate(0,246)"><path fill="url(#tT4)" d="M3 2h40v4h-40zM183 2h4v4h-4zM594 2h7v4h-7z"/><path fill="url(#mT1)" d="M3 7h40v3h-40zM45 7h46v3h-46zM93 7h34v3h-34zM129 7h16v3h-16zM396 7h19v3h-19zM510 7h4v3h-4zM594 7h7v3h-7zM603 7h10v3h-10zM615 7h13v3h-13z"/><path fill="url(#tT3)" d="M45 2h46v4h-46zM204 2h13v4h-13zM288 2h40v4h-40zM369 2h19v4h-19zM396 2h19v4h-19zM516 2h34v4h-34zM615 2h13v4h-13z"/><path fill="url(#tT2)" d="M93 2h34v4h-34zM219 2h34v4h-34zM330 2h19v4h-19zM630 2h44v4h-44z"/><path fill="url(#tT0)" d="M129 2h16v4h-16zM147 2h34v4h-34zM189 2h13v4h-13zM264 2h22v4h-22zM351 2h16v4h-16zM417 2h22v4h-22zM471 2h25v4h-25zM510 2h4v4h-4z"/><path fill="url(#mT0)" d="M147 7h34v3h-34zM264 7h22v3h-22zM390 7h4v3h-4zM471 7h25v3h-25z"/><path fill="url(#mT4)" d="M183 7h4v3h-4zM288 7h40v3h-40zM330 7h19v3h-19zM369 7h19v3h-19z"/><path fill="url(#mT2)" d="M189 7h13v3h-13zM219 7h34v3h-34zM417 7h22v3h-22zM552 7h40v3h-40z"/><path fill="url(#mT3)" d="M204 7h13v3h-13zM351 7h16v3h-16zM441 7h28v3h-28zM498 7h10v3h-10zM516 7h34v3h-34zM630 7h44v3h-44z"/><path fill="url(#tT1)" d="M390 2h4v4h-4zM441 2h28v4h-28zM498 2h10v4h-10zM552 2h40v4h-40zM603 2h10v4h-10z"/><path fill="#f2804c" d="M91 2h1v8h-1zM127 2h1v8h-1zM145 2h1v8h-1zM202 2h1v8h-1zM217 2h1v8h-1zM439 2h1v8h-1zM469 2h1v8h-1zM496 2h1v8h-1zM508 2h1v8h-1zM514 2h1v8h-1z"/><path fill="#ffffff" d="M1 2h1v8h-1zM262 2h1v8h-1zM349 2h1v8h-1zM367 2h1v8h-1zM388 2h1v8h-1zM394 2h1v8h-1zM415 2h1v8h-1zM550 2h1v8h-1zM592 2h1v8h-1zM613 2h1v8h-1z"/></g><g transform="translate(0,257)"><path fill="url(#tM3)" d="M3 6h13v4h-13zM246 6h13v4h-13zM270 6h22v4h-22zM501 6h40v4h-40zM627 6h22v4h-22z"/><path fill="url(#mM4)" d="M3 2h13v3h-13zM237 2h7v3h-7zM261 2h7v3h-7zM393 2h10v3h-10zM492 2h7v3h-7zM543 2h7v3h-7zM552 2h19v3h-19zM651 2h7v3h-7z"/><path fill="url(#tM0)" d="M18 6h40v4h-40zM147 6h40v4h-40zM225 6h10v4h-10zM405 6h22v4h-22zM543 6h7v4h-7zM603 6h7v4h-7z"/><path fill="url(#mM2)" d="M18 2h40v3h-40zM60 2h25v3h-25zM123 2h22v3h-22zM246 2h13v3h-13zM660 2h13v3h-13z"/><path fill="url(#tM4)" d="M60 6h25v4h-25zM123 6h22v4h-22zM294 6h28v4h-28zM348 6h13v4h-13zM429 6h28v4h-28zM573 6h28v4h-28zM660 6h13v4h-13z"/><path fill="url(#tM1)" d="M87 6h34v4h-34zM261 6h7v4h-7zM324 6h7v4h-7zM393 6h10v4h-10zM552 6h19v4h-19zM612 6h13v4h-13zM651 6h7v4h-7z"/><path fill="url(#mM3)" d="M87 2h34v3h-34zM270 2h22v3h-22zM324 2h7v3h-7zM429 2h28v3h-28zM501 2h40v3h-40zM573 2h28v3h-28zM627 2h22v3h-22z"/><path fill="url(#mM1)" d="M147 2h40v3h-40zM189 2h34v3h-34zM294 2h28v3h-28zM333 2h13v3h-13zM363 2h28v3h-28zM405 2h22v3h-22zM459 2h16v3h-16zM603 2h7v3h-7z"/><path fill="url(#tM2)" d="M189 6h34v4h-34zM237 6h7v4h-7zM333 6h13v4h-13zM363 6h28v4h-28zM459 6h16v4h-16zM477 6h13v4h-13zM492 6h7v4h-7z"/><path fill="url(#mM0)" d="M225 2h10v3h-10zM348 2h13v3h-13zM477 2h13v3h-13zM612 2h13v3h-13z"/><path fill="#f2804c" d="M16 2h1v8h-1zM187 2h1v8h-1zM223 2h1v8h-1zM235 2h1v8h-1zM244 2h1v8h-1zM475 2h1v8h-1zM541 2h1v8h-1zM550 2h1v8h-1zM571 2h1v8h-1zM610 2h1v8h-1zM625 2h1v8h-1zM649 2h1v8h-1zM658 2h1v8h-1z"/><path fill="#ffffff" d="M58 2h1v8h-1zM85 2h1v8h-1zM121 2h1v8h-1zM145 2h1v8h-1zM268 2h1v8h-1zM331 2h1v8h-1zM361 2h1v8h-1zM391 2h1v8h-1zM403 2h1v8h-1zM457 2h1v8h-1zM490 2h1v8h-1zM601 2h1v8h-1z"/></g><g transform="translate(0,268)"><path fill="url(#tT1)" d="M3 2h10v4h-10zM90 2h13v4h-13zM126 2h34v4h-34zM264 2h13v4h-13zM429 2h22v4h-22zM585 2h10v4h-10zM639 2h13v4h-13zM654 2h19v4h-19z"/><path fill="url(#mT3)" d="M3 7h10v3h-10zM264 7h13v3h-13zM291 7h10v3h-10zM351 7h40v3h-40zM654 7h19v3h-19z"/><path fill="url(#tT2)" d="M15 2h46v4h-46zM63 2h13v4h-13zM78 2h10v4h-10zM105 2h19v4h-19zM234 2h28v4h-28zM303 2h10v4h-10zM453 2h7v4h-7zM537 2h34v4h-34zM597 2h22v4h-22zM630 2h7v4h-7z"/><path fill="url(#mT2)" d="M15 7h46v3h-46zM63 7h13v3h-13zM90 7h13v3h-13zM162 7h22v3h-22zM303 7h10v3h-10zM315 7h34v3h-34zM429 7h22v3h-22zM492 7h34v3h-34zM585 7h10v3h-10z"/><path fill="url(#mT4)" d="M78 7h10v3h-10zM105 7h19v3h-19zM462 7h7v3h-7zM573 7h10v3h-10z"/><path fill="url(#mT1)" d="M126 7h34v3h-34zM186 7h46v3h-46zM234 7h28v3h-28zM420 7h7v3h-7zM453 7h7v3h-7zM537 7h34v3h-34zM597 7h22v3h-22z"/><path fill="url(#tT4)" d="M162 2h22v4h-22zM291 2h10v4h-10zM393 2h25v4h-25zM420 2h7v4h-7z"/><path fill="url(#tT0)" d="M186 2h46v4h-46zM315 2h34v4h-34zM351 2h40v4h-40zM462 2h7v4h-7zM492 2h34v4h-34zM528 2h7v4h-7zM621 2h7v4h-7z"/><path fill="url(#mT0)" d="M393 7h25v3h-25zM471 7h19v3h-19zM528 7h7v3h-7zM621 7h7v3h-7zM630 7h7v3h-7zM639 7h13v3h-13z"/><path fill="url(#tT3)" d="M471 2h19v4h-19zM573 2h10v4h-10z"/><path fill="#ffffff" d="M162 6h22v1h-22zM597 6h22v1h-22z"/><path fill="#f2804c" d="M61 2h1v8h-1zM76 2h1v8h-1zM103 2h1v8h-1zM262 2h1v8h-1zM289 2h1v8h-1zM349 2h1v8h-1zM451 2h1v8h-1zM469 2h1v8h-1zM526 2h1v8h-1zM583 2h1v8h-1zM595 2h1v8h-1zM652 2h1v8h-1z"/><path fill="#ffffff" d="M124 2h1v8h-1zM301 2h1v8h-1zM418 2h1v8h-1zM460 2h1v8h-1zM490 2h1v8h-1zM535 2h1v8h-1zM628 2h1v8h-1z"/></g><g transform="translate(0,279)"><path fill="url(#tM0)" d="M3 6h13v4h-13zM18 6h34v4h-34zM204 6h25v4h-25zM384 6h16v4h-16zM495 6h7v4h-7zM573 6h16v4h-16zM591 6h46v4h-46z"/><path fill="url(#mM3)" d="M3 2h13v3h-13zM90 2h22v3h-22zM231 2h4v3h-4zM273 2h25v3h-25zM417 2h13v3h-13zM522 2h22v3h-22zM546 2h19v3h-19zM573 2h16v3h-16z"/><path fill="url(#mM0)" d="M18 2h34v3h-34zM75 2h13v3h-13zM300 2h16v3h-16zM342 2h40v3h-40zM384 2h16v3h-16zM504 2h16v3h-16z"/><path fill="url(#tM1)" d="M54 6h19v4h-19zM75 6h13v4h-13zM237 6h25v4h-25zM273 6h25v4h-25zM546 6h19v4h-19zM657 6h17v4h-17z"/><path fill="url(#mM4)" d="M54 2h19v3h-19zM114 2h40v3h-40zM156 2h19v3h-19zM237 2h25v3h-25zM468 2h25v3h-25zM495 2h7v3h-7z"/><path fill="url(#tM3)" d="M90 6h22v4h-22zM231 6h4v4h-4zM264 6h7v4h-7zM417 6h13v4h-13z"/><path fill="url(#tM2)" d="M114 6h40v4h-40zM189 6h13v4h-13zM318 6h22v4h-22zM402 6h13v4h-13zM432 6h34v4h-34zM639 6h16v4h-16z"/><path fill="url(#tM4)" d="M156 6h19v4h-19zM300 6h16v4h-16zM342 6h40v4h-40zM468 6h25v4h-25zM504 6h16v4h-16zM522 6h22v4h-22zM567 6h4v4h-4z"/><path fill="url(#mM1)" d="M189 2h13v3h-13zM204 2h25v3h-25zM264 2h7v3h-7zM567 2h4v3h-4zM639 2h16v3h-16z"/><path fill="url(#mM2)" d="M318 2h22v3h-22zM402 2h13v3h-13zM432 2h34v3h-34zM591 2h46v3h-46zM657 2h17v3h-17z"/><path fill="#ffffff" d="M3 5h13v1h-13z"/><path fill="#f2804c" d="M1 2h1v8h-1zM16 2h1v8h-1zM154 2h1v8h-1zM298 2h1v8h-1zM316 2h1v8h-1zM430 2h1v8h-1zM493 2h1v8h-1zM520 2h1v8h-1zM544 2h1v8h-1zM565 2h1v8h-1zM589 2h1v8h-1zM655 2h1v8h-1z"/><path fill="#ffffff" d="M187 2h1v8h-1zM202 2h1v8h-1zM235 2h1v8h-1zM466 2h1v8h-1zM571 2h1v8h-1z"/></g><g transform="translate(0,290)"><path fill="url(#tT1)" d="M3 2h16v4h-16zM222 2h22v4h-22zM264 2h22v4h-22zM330 2h40v4h-40zM372 2h13v4h-13zM648 2h22v4h-22z"/><path fill="url(#mT4)" d="M3 7h16v3h-16zM147 7h13v3h-13zM195 7h13v3h-13zM264 7h22v3h-22zM330 7h40v3h-40zM387 7h40v3h-40zM540 7h7v3h-7zM621 7h25v3h-25z"/><path fill="url(#tT0)" d="M21 2h25v4h-25zM48 2h13v4h-13zM96 2h10v4h-10zM147 2h13v4h-13zM162 2h4v4h-4zM246 2h16v4h-16zM288 2h40v4h-40zM387 2h40v4h-40zM477 2h13v4h-13zM510 2h13v4h-13zM549 2h4v4h-4zM555 2h40v4h-40zM597 2h22v4h-22z"/><path fill="url(#mT0)" d="M21 7h25v3h-25zM246 7h16v3h-16zM477 7h13v3h-13zM597 7h22v3h-22z"/><path fill="url(#mT2)" d="M48 7h13v3h-13zM63 7h4v3h-4zM96 7h10v3h-10zM162 7h4v3h-4zM372 7h13v3h-13zM549 7h4v3h-4zM555 7h40v3h-40zM648 7h22v3h-22z"/><path fill="url(#tT3)" d="M63 2h4v4h-4zM168 2h25v4h-25zM195 2h13v4h-13zM429 2h46v4h-46zM525 2h13v4h-13zM540 2h7v4h-7zM672 2h2v4h-2z"/><path fill="url(#tT4)" d="M69 2h25v4h-25zM108 2h13v4h-13zM123 2h22v4h-22zM210 2h10v4h-10zM492 2h16v4h-16z"/><path fill="url(#mT1)" d="M69 7h25v3h-25zM108 7h13v3h-13zM168 7h25v3h-25zM210 7h10v3h-10zM429 7h46v3h-46zM510 7h13v3h-13zM525 7h13v3h-13zM672 7h2v3h-2z"/><path fill="url(#mT3)" d="M123 7h22v3h-22zM222 7h22v3h-22zM288 7h40v3h-40zM492 7h16v3h-16z"/><path fill="url(#tT2)" d="M621 2h25v4h-25z"/><path fill="#f2804c" d="M46 2h1v8h-1zM61 2h1v8h-1zM106 2h1v8h-1zM145 2h1v8h-1zM244 2h1v8h-1zM262 2h1v8h-1zM475 2h1v8h-1zM523 2h1v8h-1zM547 2h1v8h-1zM553 2h1v8h-1zM595 2h1v8h-1z"/><path fill="#ffffff" d="M94 2h1v8h-1zM121 2h1v8h-1zM166 2h1v8h-1zM193 2h1v8h-1zM286 2h1v8h-1zM328 2h1v8h-1zM385 2h1v8h-1zM427 2h1v8h-1zM490 2h1v8h-1zM538 2h1v8h-1zM619 2h1v8h-1zM670 2h1v8h-1z"/></g><g transform="translate(0,301)"><path fill="url(#tM0)" d="M3 6h46v4h-46zM186 6h4v4h-4zM237 6h28v4h-28zM357 6h13v4h-13zM582 6h34v4h-34z"/><path fill="url(#mM0)" d="M3 2h46v3h-46zM276 2h7v3h-7zM372 2h7v3h-7zM381 2h13v3h-13zM453 2h10v3h-10z"/><path fill="url(#tM1)" d="M51 6h34v4h-34zM192 6h16v4h-16zM381 6h13v4h-13zM438 6h13v4h-13zM507 6h7v4h-7zM561 6h19v4h-19zM654 6h7v4h-7zM663 6h11v4h-11z"/><path fill="url(#mM4)" d="M51 2h34v3h-34zM102 2h34v3h-34zM138 2h10v3h-10zM150 2h7v3h-7zM159 2h25v3h-25zM237 2h28v3h-28zM465 2h4v3h-4zM552 2h7v3h-7z"/><path fill="url(#tM2)" d="M87 6h13v4h-13zM150 6h7v4h-7zM210 6h25v4h-25zM267 6h7v4h-7zM372 6h7v4h-7zM453 6h10v4h-10zM465 6h4v4h-4zM516 6h34v4h-34zM618 6h34v4h-34z"/><path fill="url(#mM3)" d="M87 2h13v3h-13zM186 2h4v3h-4zM438 2h13v3h-13zM507 2h7v3h-7zM516 2h34v3h-34z"/><path fill="url(#tM3)" d="M102 6h34v4h-34zM159 6h25v4h-25zM285 6h34v4h-34zM321 6h34v4h-34zM552 6h7v4h-7z"/><path fill="url(#tM4)" d="M138 6h10v4h-10zM276 6h7v4h-7zM396 6h40v4h-40zM471 6h34v4h-34z"/><path fill="url(#mM1)" d="M192 2h16v3h-16zM321 2h34v3h-34zM396 2h40v3h-40zM471 2h34v3h-34zM663 2h11v3h-11z"/><path fill="url(#mM2)" d="M210 2h25v3h-25zM267 2h7v3h-7zM285 2h34v3h-34zM357 2h13v3h-13zM561 2h19v3h-19zM582 2h34v3h-34zM618 2h34v3h-34zM654 2h7v3h-7z"/><path fill="#ffffff" d="M618 5h34v1h-34z"/><path fill="#f2804c" d="M157 2h1v9h-1zM190 2h1v9h-1zM265 2h1v9h-1zM274 2h1v9h-1zM370 2h1v9h-1zM379 2h1v9h-1zM436 2h1v9h-1zM451 2h1v9h-1zM463 2h1v9h-1zM580 2h1v9h-1zM616 2h1v9h-1zM661 2h1v9h-1z"/><path fill="#ffffff" d="M49 2h1v9h-1zM85 2h1v9h-1zM100 2h1v9h-1zM136 2h1v9h-1zM235 2h1v9h-1zM283 2h1v9h-1zM319 2h1v9h-1zM469 2h1v9h-1zM514 2h1v9h-1zM652 2h1v9h-1z"/></g><g transform="translate(0,313)"><path fill="url(#tT1)" d="M3 2h7v4h-7zM276 2h28v4h-28zM357 2h7v4h-7zM378 2h7v4h-7zM387 2h16v4h-16zM501 2h34v4h-34zM558 2h46v4h-46zM606 2h28v4h-28z"/><path fill="url(#mT1)" d="M3 7h7v3h-7zM12 7h16v3h-16zM180 7h7v3h-7zM189 7h19v3h-19zM210 7h34v3h-34zM645 7h29v3h-29z"/><path fill="url(#tT0)" d="M12 2h16v4h-16zM57 2h22v4h-22zM156 2h22v4h-22zM306 2h28v4h-28z"/><path fill="url(#tT2)" d="M30 2h25v4h-25zM180 2h7v4h-7zM246 2h4v4h-4zM336 2h19v4h-19zM405 2h7v4h-7zM636 2h7v4h-7z"/><path fill="url(#mT0)" d="M30 7h25v3h-25zM156 7h22v3h-22zM252 7h22v3h-22zM306 7h28v3h-28zM357 7h7v3h-7zM471 7h28v3h-28zM537 7h19v3h-19z"/><path fill="url(#mT4)" d="M57 7h22v3h-22zM81 7h46v3h-46zM378 7h7v3h-7zM387 7h16v3h-16zM558 7h46v3h-46z"/><path fill="url(#tT3)" d="M81 2h46v4h-46zM129 2h25v4h-25zM189 2h19v4h-19zM366 2h10v4h-10zM423 2h34v4h-34zM459 2h10v4h-10zM537 2h19v4h-19zM645 2h29v4h-29z"/><path fill="url(#mT3)" d="M129 7h25v3h-25zM246 7h4v3h-4zM336 7h19v3h-19zM414 7h7v3h-7zM423 7h34v3h-34zM459 7h10v3h-10zM501 7h34v3h-34z"/><path fill="url(#tT4)" d="M210 2h34v4h-34zM252 2h22v4h-22zM414 2h7v4h-7zM471 2h28v4h-28z"/><path fill="url(#mT2)" d="M276 7h28v3h-28zM366 7h10v3h-10zM405 7h7v3h-7zM606 7h28v3h-28zM636 7h7v3h-7z"/><path fill="#f2804c" d="M55 2h1v8h-1zM208 2h1v8h-1zM244 2h1v8h-1zM250 2h1v8h-1zM304 2h1v8h-1zM376 2h1v8h-1zM403 2h1v8h-1zM412 2h1v8h-1zM469 2h1v8h-1zM499 2h1v8h-1zM556 2h1v8h-1zM604 2h1v8h-1z"/><path fill="#ffffff" d="M28 2h1v8h-1zM127 2h1v8h-1zM154 2h1v8h-1zM178 2h1v8h-1zM187 2h1v8h-1zM274 2h1v8h-1zM334 2h1v8h-1zM421 2h1v8h-1zM457 2h1v8h-1zM535 2h1v8h-1zM634 2h1v8h-1zM643 2h1v8h-1z"/></g><g transform="translate(0,324)"><path fill="url(#tM2)" d="M3 6h16v4h-16zM27 6h28v4h-28zM57 6h46v4h-46zM231 6h13v4h-13zM360 6h13v4h-13z"/><path fill="url(#mM0)" d="M3 2h16v3h-16zM129 2h28v3h-28zM420 2h46v3h-46zM468 2h22v3h-22zM513 2h25v3h-25zM618 2h4v3h-4zM630 2h22v3h-22z"/><path fill="url(#tM1)" d="M21 6h4v4h-4zM114 6h13v4h-13zM201 6h13v4h-13zM291 6h19v4h-19zM375 6h19v4h-19zM411 6h7v4h-7zM492 6h19v4h-19zM624 6h4v4h-4z"/><path fill="url(#mM1)" d="M21 2h4v3h-4zM27 2h28v3h-28zM105 2h7v3h-7zM114 2h13v3h-13zM201 2h13v3h-13zM216 2h13v3h-13zM231 2h13v3h-13zM360 2h13v3h-13zM396 2h13v3h-13zM540 2h13v3h-13z"/><path fill="url(#mM2)" d="M57 2h46v3h-46zM159 2h19v3h-19zM246 2h22v3h-22zM270 2h19v3h-19zM375 2h19v3h-19zM411 2h7v3h-7zM612 2h4v3h-4z"/><path fill="url(#tM0)" d="M105 6h7v4h-7zM129 6h28v4h-28zM312 6h46v4h-46zM396 6h13v4h-13zM555 6h40v4h-40zM618 6h4v4h-4zM630 6h22v4h-22z"/><path fill="url(#tM3)" d="M159 6h19v4h-19zM468 6h22v4h-22zM513 6h25v4h-25zM540 6h13v4h-13zM597 6h13v4h-13zM654 6h20v4h-20z"/><path fill="url(#tM4)" d="M180 6h19v4h-19zM216 6h13v4h-13zM246 6h22v4h-22zM270 6h19v4h-19zM420 6h46v4h-46zM612 6h4v4h-4z"/><path fill="url(#mM4)" d="M180 2h19v3h-19zM291 2h19v3h-19zM312 2h46v3h-46zM555 2h40v3h-40zM597 2h13v3h-13zM624 2h4v3h-4z"/><path fill="url(#mM3)" d="M492 2h19v3h-19zM654 2h20v3h-20z"/><path fill="#f2804c" d="M1 2h1v8h-1zM112 2h1v8h-1zM127 2h1v8h-1zM157 2h1v8h-1zM199 2h1v8h-1zM289 2h1v8h-1zM310 2h1v8h-1zM373 2h1v8h-1zM394 2h1v8h-1zM409 2h1v8h-1zM418 2h1v8h-1zM622 2h1v8h-1zM628 2h1v8h-1z"/><path fill="#ffffff" d="M178 2h1v8h-1zM214 2h1v8h-1zM229 2h1v8h-1zM268 2h1v8h-1zM358 2h1v8h-1zM490 2h1v8h-1zM538 2h1v8h-1zM595 2h1v8h-1zM652 2h1v8h-1z"/></g><g transform="translate(0,335)"><path fill="url(#tT0)" d="M3 2h22v4h-22zM48 2h34v4h-34zM426 2h19v4h-19zM447 2h19v4h-19zM468 2h22v4h-22z"/><path fill="url(#mT0)" d="M3 7h22v3h-22zM48 7h34v3h-34zM120 7h46v3h-46zM447 7h19v3h-19zM492 7h40v3h-40zM534 7h7v3h-7z"/><path fill="url(#tT3)" d="M27 2h19v4h-19zM261 2h10v4h-10z"/><path fill="url(#mT1)" d="M27 7h19v3h-19zM357 7h28v3h-28zM573 7h40v3h-40z"/><path fill="url(#tT2)" d="M84 2h34v4h-34zM273 2h40v4h-40zM387 2h13v4h-13zM402 2h22v4h-22zM657 2h17v4h-17z"/><path fill="url(#mT4)" d="M84 7h34v3h-34zM273 7h40v3h-40zM315 7h40v3h-40zM402 7h22v3h-22zM468 7h22v3h-22zM543 7h28v3h-28zM615 7h40v3h-40z"/><path fill="url(#tT4)" d="M120 2h46v4h-46zM357 2h28v4h-28zM534 2h7v4h-7zM573 2h40v4h-40zM615 2h40v4h-40z"/><path fill="url(#tT1)" d="M168 2h40v4h-40zM210 2h13v4h-13zM225 2h34v4h-34zM315 2h40v4h-40zM492 2h40v4h-40zM543 2h28v4h-28z"/><path fill="url(#mT3)" d="M168 7h40v3h-40zM387 7h13v3h-13zM426 7h19v3h-19zM657 7h17v3h-17z"/><path fill="url(#mT2)" d="M210 7h13v3h-13zM225 7h34v3h-34zM261 7h10v3h-10z"/><path fill="#ffffff" d="M27 6h19v1h-19zM492 6h40v1h-40z"/><path fill="#f2804c" d="M1 2h1v8h-1zM118 2h1v8h-1zM223 2h1v8h-1zM259 2h1v8h-1zM355 2h1v8h-1zM490 2h1v8h-1zM541 2h1v8h-1zM655 2h1v8h-1z"/><path fill="#ffffff" d="M46 2h1v8h-1zM82 2h1v8h-1zM166 2h1v8h-1zM271 2h1v8h-1zM400 2h1v8h-1zM445 2h1v8h-1zM532 2h1v8h-1z"/></g><g transform="translate(0,346)"><path fill="url(#tM0)" d="M3 6h22v4h-22zM438 6h28v4h-28zM570 6h28v4h-28zM639 6h28v4h-28z"/><path fill="url(#mM1)" d="M3 2h22v3h-22zM27 2h40v3h-40zM246 2h13v3h-13zM426 2h10v3h-10zM492 2h46v3h-46zM570 2h28v3h-28zM618 2h19v3h-19zM639 2h28v3h-28z"/><path fill="url(#tM3)" d="M27 6h40v4h-40zM246 6h13v4h-13zM261 6h16v4h-16zM354 6h25v4h-25zM540 6h28v4h-28zM618 6h19v4h-19z"/><path fill="url(#tM2)" d="M69 6h40v4h-40zM180 6h22v4h-22zM297 6h40v4h-40zM339 6h13v4h-13zM381 6h13v4h-13zM609 6h7v4h-7z"/><path fill="url(#mM2)" d="M69 2h40v3h-40zM279 2h10v3h-10zM297 2h40v3h-40zM669 2h5v3h-5z"/><path fill="url(#tM4)" d="M111 6h40v4h-40zM153 6h25v4h-25zM216 6h28v4h-28zM291 6h4v4h-4zM396 6h28v4h-28zM492 6h46v4h-46zM669 6h5v4h-5z"/><path fill="url(#mM4)" d="M111 2h40v3h-40zM153 2h25v3h-25zM204 2h10v3h-10zM354 2h25v3h-25zM600 2h7v3h-7z"/><path fill="url(#mM0)" d="M180 2h22v3h-22zM216 2h28v3h-28zM261 2h16v3h-16zM291 2h4v3h-4zM381 2h13v3h-13zM396 2h28v3h-28zM438 2h28v3h-28zM468 2h22v3h-22zM609 2h7v3h-7z"/><path fill="url(#tM1)" d="M204 6h10v4h-10zM279 6h10v4h-10zM426 6h10v4h-10zM468 6h22v4h-22zM600 6h7v4h-7z"/><path fill="url(#mM3)" d="M339 2h13v3h-13zM540 2h28v3h-28z"/><path fill="#f2804c" d="M1 2h1v8h-1zM67 2h1v8h-1zM178 2h1v8h-1zM259 2h1v8h-1zM295 2h1v8h-1zM352 2h1v8h-1zM394 2h1v8h-1zM538 2h1v8h-1zM568 2h1v8h-1zM598 2h1v8h-1zM607 2h1v8h-1z"/><path fill="#ffffff" d="M109 2h1v8h-1zM214 2h1v8h-1zM277 2h1v8h-1zM289 2h1v8h-1zM337 2h1v8h-1zM424 2h1v8h-1zM436 2h1v8h-1zM490 2h1v8h-1zM637 2h1v8h-1zM667 2h1v8h-1z"/></g><g transform="translate(0,357)"><path fill="url(#tT0)" d="M3 2h7v4h-7zM297 2h19v4h-19z"/><path fill="url(#mT1)" d="M3 7h7v3h-7zM63 7h40v3h-40zM168 7h40v3h-40zM225 7h22v3h-22zM282 7h7v3h-7zM543 7h7v3h-7zM636 7h38v3h-38z"/><path fill="url(#tT3)" d="M12 2h28v4h-28zM105 2h46v4h-46zM210 2h13v4h-13zM225 2h22v4h-22zM249 2h25v4h-25zM426 2h25v4h-25zM624 2h10v4h-10zM636 2h38v4h-38z"/><path fill="url(#mT2)" d="M12 7h28v3h-28zM42 7h13v3h-13zM105 7h46v3h-46zM153 7h13v3h-13zM276 7h4v3h-4zM318 7h10v3h-10zM405 7h4v3h-4zM426 7h25v3h-25zM576 7h25v3h-25z"/><path fill="url(#tT1)" d="M42 2h13v4h-13zM168 2h40v4h-40zM276 2h4v4h-4zM282 2h7v4h-7zM318 2h10v4h-10zM357 2h46v4h-46zM411 2h13v4h-13zM501 2h40v4h-40zM576 2h25v4h-25z"/><path fill="url(#tT2)" d="M57 2h4v4h-4zM63 2h40v4h-40zM153 2h13v4h-13zM291 2h4v4h-4zM330 2h25v4h-25z"/><path fill="url(#mT4)" d="M57 7h4v3h-4zM210 7h13v3h-13zM291 7h4v3h-4zM330 7h25v3h-25zM357 7h46v3h-46zM501 7h40v3h-40zM603 7h19v3h-19z"/><path fill="url(#mT3)" d="M249 7h25v3h-25zM297 7h19v3h-19zM411 7h13v3h-13zM453 7h46v3h-46z"/><path fill="url(#tT4)" d="M405 2h4v4h-4zM453 2h46v4h-46zM543 2h7v4h-7zM552 2h22v4h-22zM603 2h19v4h-19z"/><path fill="url(#mT0)" d="M552 7h22v3h-22zM624 7h10v3h-10z"/><path fill="#ffffff" d="M411 6h13v1h-13z"/><path fill="#f2804c" d="M1 2h1v8h-1zM10 2h1v8h-1zM103 2h1v8h-1zM208 2h1v8h-1zM223 2h1v8h-1zM247 2h1v8h-1zM403 2h1v8h-1zM424 2h1v8h-1zM451 2h1v8h-1zM499 2h1v8h-1zM550 2h1v8h-1zM574 2h1v8h-1z"/><path fill="#ffffff" d="M40 2h1v8h-1zM55 2h1v8h-1zM274 2h1v8h-1zM295 2h1v8h-1zM316 2h1v8h-1zM622 2h1v8h-1z"/></g><g transform="translate(0,368)"><path fill="url(#tM3)" d="M3 6h40v4h-40zM147 6h13v4h-13zM174 6h34v4h-34zM210 6h7v4h-7zM300 6h13v4h-13zM339 6h19v4h-19zM372 6h34v4h-34zM519 6h10v4h-10zM543 6h4v4h-4zM549 6h40v4h-40zM591 6h10v4h-10zM651 6h23v4h-23z"/><path fill="url(#mM2)" d="M3 2h40v3h-40zM210 2h7v3h-7zM219 2h7v3h-7zM267 2h7v3h-7zM276 2h22v3h-22zM372 2h34v3h-34zM423 2h40v3h-40zM465 2h16v3h-16zM483 2h28v3h-28zM513 2h4v3h-4zM531 2h10v3h-10zM591 2h10v3h-10z"/><path fill="url(#tM4)" d="M45 6h13v4h-13zM132 6h13v4h-13zM228 6h22v4h-22zM360 6h10v4h-10z"/><path fill="url(#mM1)" d="M45 2h13v3h-13zM132 2h13v3h-13zM228 2h22v3h-22zM300 2h13v3h-13zM315 2h22v3h-22zM360 2h10v3h-10zM408 2h13v3h-13zM549 2h40v3h-40zM618 2h7v3h-7z"/><path fill="url(#tM1)" d="M60 6h40v4h-40zM252 6h13v4h-13zM423 6h40v4h-40zM513 6h4v4h-4zM603 6h13v4h-13zM642 6h7v4h-7z"/><path fill="url(#mM0)" d="M60 2h40v3h-40zM147 2h13v3h-13zM543 2h4v3h-4zM651 2h23v3h-23z"/><path fill="url(#tM0)" d="M102 6h28v4h-28zM219 6h7v4h-7zM267 6h7v4h-7zM276 6h22v4h-22zM408 6h13v4h-13zM483 6h28v4h-28zM531 6h10v4h-10zM618 6h7v4h-7z"/><path fill="url(#mM4)" d="M102 2h28v3h-28zM339 2h19v3h-19zM603 2h13v3h-13zM627 2h13v3h-13z"/><path fill="url(#tM2)" d="M162 6h10v4h-10zM315 6h22v4h-22zM465 6h16v4h-16zM627 6h13v4h-13z"/><path fill="url(#mM3)" d="M162 2h10v3h-10zM174 2h34v3h-34zM252 2h13v3h-13zM519 2h10v3h-10zM642 2h7v3h-7z"/><path fill="#f2804c" d="M43 2h1v8h-1zM58 2h1v8h-1zM274 2h1v8h-1zM358 2h1v8h-1zM406 2h1v8h-1zM463 2h1v8h-1zM511 2h1v8h-1zM517 2h1v8h-1zM541 2h1v8h-1zM547 2h1v8h-1zM649 2h1v8h-1z"/><path fill="#ffffff" d="M1 2h1v8h-1zM172 2h1v8h-1zM217 2h1v8h-1zM265 2h1v8h-1zM313 2h1v8h-1zM370 2h1v8h-1zM421 2h1v8h-1zM481 2h1v8h-1zM529 2h1v8h-1zM589 2h1v8h-1zM616 2h1v8h-1zM625 2h1v8h-1zM640 2h1v8h-1z"/></g><g transform="translate(0,379)"><path fill="url(#tT0)" d="M3 2h28v4h-28zM132 2h25v4h-25zM258 2h40v4h-40zM396 2h4v4h-4zM408 2h7v4h-7zM417 2h46v4h-46zM606 2h19v4h-19z"/><path fill="url(#mT1)" d="M3 7h28v3h-28zM327 7h40v3h-40zM507 7h13v3h-13zM567 7h25v3h-25zM594 7h10v3h-10z"/><path fill="url(#tT3)" d="M33 2h28v4h-28zM171 2h34v4h-34zM207 2h13v4h-13zM300 2h16v4h-16zM318 2h7v4h-7zM369 2h25v4h-25zM402 2h4v4h-4zM567 2h25v4h-25z"/><path fill="url(#mT3)" d="M33 7h28v3h-28zM78 7h16v3h-16zM207 7h13v3h-13zM258 7h40v3h-40zM402 7h4v3h-4zM417 7h46v3h-46z"/><path fill="url(#tT1)" d="M63 2h13v4h-13zM78 2h16v4h-16zM96 2h34v4h-34zM546 2h19v4h-19zM627 2h46v4h-46z"/><path fill="url(#mT0)" d="M63 7h13v3h-13zM96 7h34v3h-34zM171 7h34v3h-34zM408 7h7v3h-7zM465 7h40v3h-40zM606 7h19v3h-19z"/><path fill="url(#mT4)" d="M132 7h25v3h-25zM318 7h7v3h-7zM396 7h4v3h-4zM627 7h46v3h-46z"/><path fill="url(#tT2)" d="M159 2h10v4h-10zM327 2h40v4h-40zM465 2h40v4h-40zM522 2h22v4h-22z"/><path fill="url(#mT2)" d="M159 7h10v3h-10zM222 7h34v3h-34zM300 7h16v3h-16zM369 7h25v3h-25zM522 7h22v3h-22zM546 7h19v3h-19z"/><path fill="url(#tT4)" d="M222 2h34v4h-34zM507 2h13v4h-13zM594 2h10v4h-10z"/><path fill="#f2804c" d="M31 2h1v8h-1zM130 2h1v8h-1zM169 2h1v8h-1zM205 2h1v8h-1zM220 2h1v8h-1zM256 2h1v8h-1zM400 2h1v8h-1zM520 2h1v8h-1zM544 2h1v8h-1z"/><path fill="#ffffff" d="M1 2h1v8h-1zM94 2h1v8h-1zM157 2h1v8h-1zM298 2h1v8h-1zM367 2h1v8h-1zM565 2h1v8h-1z"/></g><g transform="translate(0,390)"><path fill="url(#tM2)" d="M3 6h16v4h-16zM213 6h34v4h-34zM249 6h40v4h-40zM291 6h16v4h-16zM339 6h40v4h-40zM381 6h7v4h-7zM507 6h40v4h-40zM579 6h19v4h-19zM606 6h25v4h-25z"/><path fill="url(#mM1)" d="M3 2h16v3h-16zM87 2h13v3h-13zM102 2h22v3h-22zM249 2h40v3h-40zM417 2h16v3h-16zM549 2h28v3h-28zM663 2h11v3h-11z"/><path fill="url(#tM1)" d="M21 6h46v4h-46zM69 6h16v4h-16zM102 6h22v4h-22zM171 6h19v4h-19zM435 6h13v4h-13zM459 6h46v4h-46zM549 6h28v4h-28zM600 6h4v4h-4zM633 6h16v4h-16z"/><path fill="url(#mM2)" d="M21 2h46v3h-46zM69 2h16v3h-16zM339 2h40v3h-40zM435 2h13v3h-13zM579 2h19v3h-19zM600 2h4v3h-4z"/><path fill="url(#tM3)" d="M87 6h13v4h-13zM126 6h10v4h-10zM192 6h4v4h-4zM390 6h25v4h-25zM417 6h16v4h-16z"/><path fill="url(#mM0)" d="M126 2h10v3h-10zM291 2h16v3h-16zM633 2h16v3h-16z"/><path fill="url(#tM0)" d="M138 6h22v4h-22zM162 6h7v4h-7zM198 6h13v4h-13zM651 6h10v4h-10zM663 6h11v4h-11z"/><path fill="url(#mM3)" d="M138 2h22v3h-22zM192 2h4v3h-4zM309 2h28v3h-28zM390 2h25v3h-25zM507 2h40v3h-40zM606 2h25v3h-25z"/><path fill="url(#mM4)" d="M162 2h7v3h-7zM171 2h19v3h-19zM198 2h13v3h-13zM213 2h34v3h-34zM381 2h7v3h-7zM450 2h7v3h-7zM459 2h46v3h-46zM651 2h10v3h-10z"/><path fill="url(#tM4)" d="M309 6h28v4h-28zM450 6h7v4h-7z"/><path fill="#f2804c" d="M1 2h1v8h-1zM100 2h1v8h-1zM124 2h1v8h-1zM136 2h1v8h-1zM169 2h1v8h-1zM190 2h1v8h-1zM211 2h1v8h-1zM433 2h1v8h-1zM577 2h1v8h-1zM598 2h1v8h-1z"/><path fill="#ffffff" d="M67 2h1v8h-1zM85 2h1v8h-1zM289 2h1v8h-1zM337 2h1v8h-1zM379 2h1v8h-1zM388 2h1v8h-1zM415 2h1v8h-1zM448 2h1v8h-1zM457 2h1v8h-1zM505 2h1v8h-1zM631 2h1v8h-1z"/></g><g transform="translate(0,401)"><path fill="url(#tT0)" d="M3 2h13v4h-13zM144 2h34v4h-34zM198 2h28v4h-28zM228 2h22v4h-22zM444 2h4v4h-4zM561 2h7v4h-7zM615 2h25v4h-25z"/><path fill="url(#mT2)" d="M3 7h13v3h-13zM18 7h40v3h-40zM60 7h10v3h-10zM357 7h13v3h-13zM444 7h4v3h-4z"/><path fill="url(#tT1)" d="M18 2h40v4h-40zM501 2h22v4h-22zM669 2h5v4h-5z"/><path fill="url(#tT3)" d="M60 2h10v4h-10zM72 2h46v4h-46zM252 2h46v4h-46zM300 2h19v4h-19zM450 2h13v4h-13zM471 2h28v4h-28zM525 2h34v4h-34zM642 2h25v4h-25z"/><path fill="url(#mT4)" d="M72 7h46v3h-46zM180 7h16v3h-16zM228 7h22v3h-22zM252 7h46v3h-46zM321 7h7v3h-7zM345 7h10v3h-10zM471 7h28v3h-28zM579 7h34v3h-34z"/><path fill="url(#tT4)" d="M120 2h22v4h-22zM420 2h22v4h-22z"/><path fill="url(#mT1)" d="M120 7h22v3h-22zM198 7h28v3h-28zM372 7h46v3h-46zM450 7h13v3h-13zM525 7h34v3h-34zM561 7h7v3h-7zM669 7h5v3h-5z"/><path fill="url(#mT0)" d="M144 7h34v3h-34zM420 7h22v3h-22zM615 7h25v3h-25zM642 7h25v3h-25z"/><path fill="url(#tT2)" d="M180 2h16v4h-16zM321 2h7v4h-7zM330 2h13v4h-13zM345 2h10v4h-10zM357 2h13v4h-13zM372 2h46v4h-46zM465 2h4v4h-4zM579 2h34v4h-34z"/><path fill="url(#mT3)" d="M300 7h19v3h-19zM330 7h13v3h-13zM465 7h4v3h-4zM501 7h22v3h-22z"/><path fill="#f2804c" d="M1 2h1v8h-1zM58 2h1v8h-1zM70 2h1v8h-1zM118 2h1v8h-1zM142 2h1v8h-1zM178 2h1v8h-1zM319 2h1v8h-1zM328 2h1v8h-1zM418 2h1v8h-1zM463 2h1v8h-1zM499 2h1v8h-1z"/><path fill="#ffffff" d="M16 2h1v8h-1zM298 2h1v8h-1zM343 2h1v8h-1zM442 2h1v8h-1zM448 2h1v8h-1zM469 2h1v8h-1zM559 2h1v8h-1zM577 2h1v8h-1zM613 2h1v8h-1zM667 2h1v8h-1z"/></g><g transform="translate(0,412)"><path fill="url(#tM2)" d="M3 6h7v4h-7zM114 6h28v4h-28zM216 6h13v4h-13zM339 6h19v4h-19zM414 6h28v4h-28z"/><path fill="url(#mM3)" d="M3 2h7v3h-7zM309 2h28v3h-28zM531 2h10v3h-10zM543 2h28v3h-28zM582 2h25v3h-25z"/><path fill="url(#tM1)" d="M12 6h34v4h-34zM84 6h28v4h-28zM198 6h16v4h-16zM360 6h13v4h-13zM402 6h10v4h-10zM444 6h40v4h-40zM486 6h28v4h-28zM636 6h34v4h-34zM672 6h2v4h-2z"/><path fill="url(#mM1)" d="M12 2h34v3h-34zM144 2h28v3h-28zM216 2h13v3h-13zM243 2h22v3h-22zM375 2h7v3h-7zM486 2h28v3h-28zM573 2h7v3h-7zM636 2h34v3h-34z"/><path fill="url(#tM0)" d="M48 6h34v4h-34zM231 6h10v4h-10zM267 6h40v4h-40zM375 6h7v4h-7zM516 6h13v4h-13zM582 6h25v4h-25z"/><path fill="url(#mM4)" d="M48 2h34v3h-34zM84 2h28v3h-28zM114 2h28v3h-28zM360 2h13v3h-13zM609 2h25v3h-25z"/><path fill="url(#tM3)" d="M144 6h28v4h-28zM309 6h28v4h-28zM609 6h25v4h-25z"/><path fill="url(#tM4)" d="M174 6h22v4h-22zM243 6h22v4h-22zM384 6h16v4h-16zM531 6h10v4h-10zM543 6h28v4h-28zM573 6h7v4h-7z"/><path fill="url(#mM2)" d="M174 2h22v3h-22zM231 2h10v3h-10zM267 2h40v3h-40zM414 2h28v3h-28zM444 2h40v3h-40zM516 2h13v3h-13zM672 2h2v3h-2z"/><path fill="url(#mM0)" d="M198 2h16v3h-16zM339 2h19v3h-19zM384 2h16v3h-16zM402 2h10v3h-10z"/><path fill="#ffffff" d="M672 5h2v1h-2z"/><path fill="#f2804c" d="M172 2h1v8h-1zM196 2h1v8h-1zM229 2h1v8h-1zM241 2h1v8h-1zM358 2h1v8h-1zM382 2h1v8h-1zM400 2h1v8h-1zM442 2h1v8h-1zM607 2h1v8h-1zM634 2h1v8h-1z"/><path fill="#ffffff" d="M10 2h1v8h-1zM142 2h1v8h-1zM514 2h1v8h-1zM529 2h1v8h-1zM541 2h1v8h-1zM571 2h1v8h-1zM670 2h1v8h-1z"/></g><g transform="translate(0,423)"><path fill="url(#tT4)" d="M3 2h13v4h-13zM27 2h40v4h-40zM306 2h40v4h-40z"/><path fill="url(#mT2)" d="M3 7h13v3h-13zM213 7h4v3h-4zM225 7h10v3h-10zM297 7h7v3h-7zM417 7h46v3h-46zM480 7h7v3h-7zM624 7h4v3h-4z"/><path fill="url(#tT3)" d="M18 2h7v4h-7zM90 2h16v4h-16zM129 2h34v4h-34zM189 2h22v4h-22zM237 2h46v4h-46zM465 2h13v4h-13zM525 2h19v4h-19zM546 2h40v4h-40z"/><path fill="url(#mT3)" d="M18 7h7v3h-7zM348 7h10v3h-10zM384 7h7v3h-7zM393 7h22v3h-22zM489 7h4v3h-4zM546 7h40v3h-40zM630 7h44v3h-44z"/><path fill="url(#mT0)" d="M27 7h40v3h-40zM120 7h7v3h-7zM129 7h34v3h-34zM174 7h13v3h-13zM378 7h4v3h-4zM495 7h28v3h-28z"/><path fill="url(#tT0)" d="M69 2h19v4h-19zM108 2h10v4h-10zM174 2h13v4h-13zM225 2h10v4h-10zM417 2h46v4h-46zM588 2h10v4h-10zM624 2h4v4h-4z"/><path fill="url(#mT4)" d="M69 7h19v3h-19zM90 7h16v3h-16zM165 7h7v3h-7zM219 7h4v3h-4zM237 7h46v3h-46zM285 7h10v3h-10zM360 7h16v3h-16zM465 7h13v3h-13z"/><path fill="url(#mT1)" d="M108 7h10v3h-10zM189 7h22v3h-22zM306 7h40v3h-40zM525 7h19v3h-19zM588 7h10v3h-10zM600 7h22v3h-22z"/><path fill="url(#tT2)" d="M120 2h7v4h-7zM165 2h7v4h-7zM219 2h4v4h-4zM285 2h10v4h-10zM378 2h4v4h-4zM393 2h22v4h-22zM480 2h7v4h-7zM489 2h4v4h-4zM495 2h28v4h-28zM630 2h44v4h-44z"/><path fill="url(#tT1)" d="M213 2h4v4h-4zM297 2h7v4h-7zM348 2h10v4h-10zM360 2h16v4h-16zM384 2h7v4h-7zM600 2h22v4h-22z"/><path fill="#f2804c" d="M1 2h1v9h-1zM25 2h1v9h-1zM67 2h1v9h-1zM127 2h1v9h-1zM211 2h1v9h-1zM217 2h1v9h-1zM223 2h1v9h-1zM382 2h1v9h-1zM523 2h1v9h-1zM598 2h1v9h-1z"/><path fill="#ffffff" d="M88 2h1v9h-1zM106 2h1v9h-1zM118 2h1v9h-1zM163 2h1v9h-1zM391 2h1v9h-1zM463 2h1v9h-1zM487 2h1v9h-1zM544 2h1v9h-1zM586 2h1v9h-1zM628 2h1v9h-1z"/></g><g transform="translate(0,435)"><path fill="url(#tM3)" d="M3 6h25v4h-25zM30 6h28v4h-28zM87 6h16v4h-16zM258 6h28v4h-28zM348 6h4v4h-4zM396 6h40v4h-40zM444 6h16v4h-16zM486 6h10v4h-10zM639 6h19v4h-19z"/><path fill="url(#mM0)" d="M3 2h25v3h-25zM69 2h16v3h-16zM87 2h16v3h-16zM378 2h16v3h-16zM462 2h22v3h-22zM498 2h34v3h-34z"/><path fill="url(#mM2)" d="M30 2h28v3h-28zM60 2h7v3h-7zM210 2h46v3h-46zM288 2h28v3h-28zM534 2h13v3h-13z"/><path fill="url(#tM0)" d="M60 6h7v4h-7zM147 6h34v4h-34zM288 6h28v4h-28zM438 6h4v4h-4zM462 6h22v4h-22z"/><path fill="url(#tM1)" d="M69 6h16v4h-16zM210 6h46v4h-46zM354 6h22v4h-22zM618 6h4v4h-4z"/><path fill="url(#tM4)" d="M105 6h40v4h-40zM318 6h28v4h-28zM534 6h13v4h-13zM549 6h13v4h-13zM606 6h10v4h-10zM624 6h13v4h-13zM660 6h14v4h-14z"/><path fill="url(#mM3)" d="M105 2h40v3h-40zM258 2h28v3h-28zM318 2h28v3h-28zM438 2h4v3h-4zM606 2h10v3h-10zM624 2h13v3h-13zM639 2h19v3h-19z"/><path fill="url(#mM1)" d="M147 2h34v3h-34zM396 2h40v3h-40zM549 2h13v3h-13zM618 2h4v3h-4z"/><path fill="url(#tM2)" d="M183 6h25v4h-25zM378 6h16v4h-16zM498 6h34v4h-34zM564 6h40v4h-40z"/><path fill="url(#mM4)" d="M183 2h25v3h-25zM348 2h4v3h-4zM354 2h22v3h-22zM444 2h16v3h-16zM486 2h10v3h-10zM564 2h40v3h-40zM660 2h14v3h-14z"/><path fill="#f2804c" d="M1 2h1v8h-1zM58 2h1v8h-1zM181 2h1v8h-1zM286 2h1v8h-1zM352 2h1v8h-1zM376 2h1v8h-1zM436 2h1v8h-1zM460 2h1v8h-1zM532 2h1v8h-1zM547 2h1v8h-1zM604 2h1v8h-1zM616 2h1v8h-1zM637 2h1v8h-1z"/><path fill="#ffffff" d="M103 2h1v8h-1zM208 2h1v8h-1zM256 2h1v8h-1zM346 2h1v8h-1zM394 2h1v8h-1zM442 2h1v8h-1zM484 2h1v8h-1zM562 2h1v8h-1z"/></g><g transform="translate(0,446)"><path fill="url(#tT1)" d="M3 2h34v4h-34zM291 2h34v4h-34zM465 2h22v4h-22zM513 2h40v4h-40zM627 2h13v4h-13zM651 2h7v4h-7z"/><path fill="url(#mT3)" d="M3 7h34v3h-34zM114 7h13v3h-13zM642 7h7v3h-7z"/><path fill="url(#tT0)" d="M39 2h34v4h-34zM75 2h28v4h-28zM114 2h13v4h-13zM129 2h10v4h-10zM342 2h40v4h-40zM384 2h22v4h-22zM489 2h7v4h-7zM498 2h7v4h-7zM555 2h7v4h-7zM564 2h13v4h-13zM579 2h34v4h-34zM642 2h7v4h-7zM660 2h4v4h-4z"/><path fill="url(#mT1)" d="M39 7h34v3h-34zM75 7h28v3h-28zM141 7h25v3h-25zM168 7h7v3h-7zM243 7h22v3h-22zM291 7h34v3h-34zM615 7h10v3h-10zM651 7h7v3h-7zM660 7h4v3h-4z"/><path fill="url(#tT3)" d="M105 2h7v4h-7zM141 2h25v4h-25zM192 2h7v4h-7zM243 2h22v4h-22zM507 2h4v4h-4z"/><path fill="url(#mT4)" d="M105 7h7v3h-7zM465 7h22v3h-22zM513 7h40v3h-40zM627 7h13v3h-13z"/><path fill="url(#mT0)" d="M129 7h10v3h-10zM267 7h22v3h-22zM327 7h13v3h-13zM342 7h40v3h-40zM384 7h22v3h-22zM408 7h25v3h-25zM435 7h28v3h-28zM498 7h7v3h-7zM555 7h7v3h-7zM666 7h8v3h-8z"/><path fill="url(#tT2)" d="M168 2h7v4h-7zM177 2h13v4h-13zM201 2h40v4h-40zM327 2h13v4h-13zM408 2h25v4h-25zM435 2h28v4h-28zM615 2h10v4h-10zM666 2h8v4h-8z"/><path fill="url(#mT2)" d="M177 7h13v3h-13zM192 7h7v3h-7zM201 7h40v3h-40zM489 7h7v3h-7zM507 7h4v3h-4zM564 7h13v3h-13zM579 7h34v3h-34z"/><path fill="url(#tT4)" d="M267 2h22v4h-22z"/><path fill="#ffffff" d="M243 6h22v1h-22zM327 6h13v1h-13z"/><path fill="#f2804c" d="M1 2h1v8h-1zM127 2h1v8h-1zM175 2h1v8h-1zM265 2h1v8h-1zM340 2h1v8h-1zM406 2h1v8h-1zM505 2h1v8h-1zM640 2h1v8h-1zM664 2h1v8h-1z"/><path fill="#ffffff" d="M73 2h1v8h-1zM166 2h1v8h-1zM241 2h1v8h-1zM325 2h1v8h-1zM433 2h1v8h-1zM463 2h1v8h-1zM511 2h1v8h-1zM553 2h1v8h-1zM577 2h1v8h-1zM613 2h1v8h-1zM649 2h1v8h-1z"/></g><g transform="translate(0,457)"><path fill="url(#tM4)" d="M3 6h25v4h-25zM270 6h4v4h-4zM384 6h25v4h-25zM411 6h13v4h-13z"/><path fill="url(#mM0)" d="M3 2h25v3h-25zM72 2h19v3h-19zM162 2h28v3h-28zM192 2h7v3h-7zM312 2h25v3h-25zM546 2h40v3h-40z"/><path fill="url(#tM1)" d="M30 6h40v4h-40zM72 6h19v4h-19zM201 6h16v4h-16zM636 6h16v4h-16z"/><path fill="url(#mM4)" d="M30 2h40v3h-40zM135 2h25v3h-25zM201 2h16v3h-16zM360 2h13v3h-13z"/><path fill="url(#tM2)" d="M93 6h40v4h-40zM276 6h34v4h-34zM312 6h25v4h-25zM375 6h7v4h-7zM471 6h25v4h-25zM498 6h46v4h-46z"/><path fill="url(#mM1)" d="M93 2h40v3h-40zM339 2h7v3h-7zM348 2h10v3h-10zM375 2h7v3h-7zM426 2h28v3h-28zM471 2h25v3h-25zM654 2h20v3h-20z"/><path fill="url(#tM3)" d="M135 6h25v4h-25zM162 6h28v4h-28zM192 6h7v4h-7zM219 6h13v4h-13zM339 6h7v4h-7zM348 6h10v4h-10zM360 6h13v4h-13zM426 6h28v4h-28zM456 6h13v4h-13zM654 6h20v4h-20z"/><path fill="url(#mM3)" d="M219 2h13v3h-13zM276 2h34v3h-34zM411 2h13v3h-13zM588 2h46v3h-46z"/><path fill="url(#tM0)" d="M234 6h34v4h-34zM546 6h40v4h-40zM588 6h46v4h-46z"/><path fill="url(#mM2)" d="M234 2h34v3h-34zM270 2h4v3h-4zM384 2h25v3h-25zM456 2h13v3h-13zM498 2h46v3h-46zM636 2h16v3h-16z"/><path fill="#f2804c" d="M133 2h1v8h-1zM199 2h1v8h-1zM268 2h1v8h-1zM274 2h1v8h-1zM310 2h1v8h-1zM337 2h1v8h-1zM358 2h1v8h-1zM373 2h1v8h-1zM454 2h1v8h-1zM469 2h1v8h-1z"/><path fill="#ffffff" d="M1 2h1v8h-1zM28 2h1v8h-1zM70 2h1v8h-1zM217 2h1v8h-1zM346 2h1v8h-1zM409 2h1v8h-1zM634 2h1v8h-1z"/></g><g transform="translate(0,468)"><path fill="url(#tT2)" d="M3 2h34v4h-34zM264 2h40v4h-40zM444 2h40v4h-40zM519 2h28v4h-28zM663 2h4v4h-4z"/><path fill="url(#mT2)" d="M3 7h34v3h-34zM390 7h16v3h-16zM408 7h10v3h-10zM435 7h7v3h-7z"/><path fill="url(#tT0)" d="M39 2h25v4h-25zM204 2h28v4h-28zM420 2h13v4h-13z"/><path fill="url(#mT1)" d="M39 7h25v3h-25zM66 7h46v3h-46zM168 7h34v3h-34zM264 7h40v3h-40zM579 7h16v3h-16zM597 7h7v3h-7zM669 7h5v3h-5z"/><path fill="url(#tT4)" d="M66 2h46v4h-46zM156 2h10v4h-10zM360 2h28v4h-28zM390 2h16v4h-16zM408 2h10v4h-10zM549 2h28v4h-28zM648 2h13v4h-13z"/><path fill="url(#tT1)" d="M114 2h40v4h-40zM168 2h34v4h-34zM333 2h25v4h-25zM486 2h16v4h-16zM597 2h7v4h-7z"/><path fill="url(#mT0)" d="M114 7h40v3h-40zM234 7h28v3h-28zM519 7h28v3h-28z"/><path fill="url(#mT4)" d="M156 7h10v3h-10zM204 7h28v3h-28zM486 7h16v3h-16zM606 7h40v3h-40z"/><path fill="url(#tT3)" d="M234 2h28v4h-28zM306 2h25v4h-25zM435 2h7v4h-7zM504 2h13v4h-13zM579 2h16v4h-16zM606 2h40v4h-40zM669 2h5v4h-5z"/><path fill="url(#mT3)" d="M306 7h25v3h-25zM333 7h25v3h-25zM360 7h28v3h-28zM420 7h13v3h-13zM444 7h40v3h-40zM504 7h13v3h-13zM549 7h28v3h-28zM648 7h13v3h-13zM663 7h4v3h-4z"/><path fill="#f2804c" d="M37 2h1v8h-1zM112 2h1v8h-1zM166 2h1v8h-1zM232 2h1v8h-1zM331 2h1v8h-1zM358 2h1v8h-1zM484 2h1v8h-1zM502 2h1v8h-1zM517 2h1v8h-1z"/><path fill="#ffffff" d="M1 2h1v8h-1zM202 2h1v8h-1zM406 2h1v8h-1zM433 2h1v8h-1zM442 2h1v8h-1zM577 2h1v8h-1zM595 2h1v8h-1zM661 2h1v8h-1z"/></g><g transform="translate(0,479)"><path fill="url(#mM1)" d="M3 2h7v1h-7zM297 2h25v1h-25zM333 2h34v1h-34zM390 2h28v1h-28zM522 2h46v1h-46zM645 2h10v1h-10z"/><path fill="url(#mM3)" d="M12 2h28v1h-28zM201 2h13v1h-13zM252 2h7v1h-7zM591 2h7v1h-7zM657 2h4v1h-4z"/><path fill="url(#mM2)" d="M42 2h7v1h-7zM51 2h7v1h-7zM60 2h16v1h-16zM93 2h34v1h-34zM138 2h13v1h-13zM153 2h46v1h-46zM216 2h7v1h-7zM261 2h34v1h-34zM381 2h7v1h-7zM459 2h4v1h-4zM570 2h10v1h-10zM600 2h4v1h-4zM606 2h7v1h-7z"/><path fill="url(#mM0)" d="M78 2h13v1h-13zM129 2h7v1h-7zM324 2h7v1h-7zM513 2h7v1h-7zM582 2h7v1h-7zM663 2h11v1h-11z"/><path fill="url(#mM4)" d="M225 2h25v1h-25zM369 2h10v1h-10zM420 2h10v1h-10zM432 2h25v1h-25zM465 2h46v1h-46zM615 2h28v1h-28z"/><path fill="#f2804c" d="M76 2h1v0h-1zM214 2h1v0h-1zM295 2h1v0h-1zM463 2h1v0h-1zM520 2h1v0h-1zM580 2h1v0h-1zM589 2h1v0h-1zM655 2h1v0h-1z"/><path fill="#ffffff" d="M1 2h1v0h-1zM40 2h1v0h-1zM49 2h1v0h-1zM136 2h1v0h-1zM199 2h1v0h-1zM223 2h1v0h-1zM250 2h1v0h-1zM322 2h1v0h-1zM331 2h1v0h-1zM367 2h1v0h-1zM430 2h1v0h-1zM457 2h1v0h-1zM568 2h1v0h-1zM604 2h1v0h-1z"/></g><path fill="url(#rl)" d="M1 2h674v1h-674zM1 13h674v1h-674zM1 24h674v1h-674zM1 35h674v1h-674zM1 46h674v1h-674zM1 57h674v1h-674zM1 69h674v1h-674zM1 80h674v1h-674zM1 91h674v1h-674zM1 102h674v1h-674zM1 113h674v1h-674zM1 124h674v1h-674zM1 135h674v1h-674zM1 146h674v1h-674zM1 157h674v1h-674zM1 168h674v1h-674zM1 179h674v1h-674zM1 191h674v1h-674zM1 202h674v1h-674zM1 213h674v1h-674zM1 224h674v1h-674zM1 235h674v1h-674zM1 246h674v1h-674zM1 257h674v1h-674zM1 268h674v1h-674zM1 279h674v1h-674zM1 290h674v1h-674zM1 301h674v1h-674zM1 313h674v1h-674zM1 324h674v1h-674zM1 335h674v1h-674zM1 346h674v1h-674zM1 357h674v1h-674zM1 368h674v1h-674zM1 379h674v1h-674zM1 390h674v1h-674zM1 401h674v1h-674zM1 412h674v1h-674zM1 423h674v1h-674zM1 435h674v1h-674zM1 446h674v1h-674zM1 457h674v1h-674zM1 468h674v1h-674zM1 479h674v1h-674z"/><path fill="none" stroke="#9e0c8e" stroke-width="1" d="M6.5 1.5h4v12h-4zM72.5 1.5h4v12h-4zM81.5 1.5h4v12h-4zM88.5 1.5h4v12h-4zM99.5 1.5h4v12h-4zM108.5 1.5h4v12h-4zM107.5 1.5h4v12h-4zM217.5 1.5h4v12h-4zM225.5 1.5h4v12h-4zM231.5 1.5h4v12h-4zM302.5 1.5h4v12h-4zM310.5 1.5h4v12h-4zM325.5 1.5h4v12h-4zM333.5 1.5h4v12h-4zM339.5 1.5h4v12h-4zM359.5 1.5h4v12h-4zM388.5 1.5h4v12h-4zM654.5 1.5h4v12h-4zM661.5 1.5h4v12h-4zM5.5 12.5h4v12h-4zM22.5 12.5h4v12h-4zM31.5 12.5h4v12h-4zM36.5 12.5h4v12h-4zM46.5 12.5h4v12h-4zM50.5 12.5h4v12h-4zM62.5 12.5h4v12h-4zM76.5 12.5h4v12h-4zM71.5 12.5h4v12h-4zM164.5 12.5h4v12h-4zM171.5 12.5h4v12h-4zM178.5 12.5h4v12h-4zM188.5 12.5h4v12h-4zM207.5 12.5h4v12h-4zM215.5 12.5h4v12h-4zM221.5 12.5h4v12h-4zM231.5 12.5h4v12h-4zM243.5 12.5h4v12h-4zM247.5 12.5h4v12h-4zM249.5 12.5h4v12h-4zM270.5 12.5h4v12h-4zM343.5 12.5h4v12h-4zM350.5 12.5h4v12h-4zM357.5 12.5h4v12h-4zM370.5 12.5h4v12h-4zM371.5 12.5h4v12h-4zM378.5 12.5h4v12h-4zM398.5 12.5h4v12h-4zM407.5 12.5h4v12h-4zM522.5 12.5h4v12h-4zM530.5 12.5h4v12h-4zM536.5 12.5h4v12h-4zM549.5 12.5h4v12h-4zM558.5 12.5h4v12h-4zM567.5 12.5h4v12h-4zM643.5 12.5h4v12h-4zM659.5 12.5h4v12h-4zM16.5 23.5h4v12h-4zM28.5 23.5h4v12h-4zM37.5 23.5h4v12h-4zM42.5 23.5h4v12h-4zM49.5 23.5h4v12h-4zM64.5 23.5h4v12h-4zM68.5 23.5h4v12h-4zM85.5 23.5h4v12h-4zM93.5 23.5h4v12h-4zM103.5 23.5h4v12h-4zM112.5 23.5h4v12h-4zM113.5 23.5h4v12h-4zM130.5 23.5h4v12h-4zM139.5 23.5h4v12h-4zM134.5 23.5h4v12h-4zM241.5 23.5h4v12h-4zM254.5 23.5h4v12h-4zM263.5 23.5h4v12h-4zM272.5 23.5h4v12h-4zM281.5 23.5h4v12h-4zM290.5 23.5h4v12h-4zM289.5 23.5h4v12h-4zM537.5 23.5h4v12h-4zM545.5 23.5h4v12h-4zM553.5 23.5h4v12h-4zM583.5 23.5h4v12h-4zM590.5 23.5h4v12h-4zM599.5 23.5h4v12h-4zM662.5 23.5h4v12h-4zM0.5 34.5h4v12h-4zM7.5 34.5h4v12h-4zM62.5 34.5h4v12h-4zM70.5 34.5h4v12h-4zM78.5 34.5h4v12h-4zM89.5 34.5h4v12h-4zM90.5 34.5h4v12h-4zM97.5 34.5h4v12h-4zM220.5 34.5h4v12h-4zM229.5 34.5h4v12h-4zM238.5 34.5h4v12h-4zM247.5 34.5h4v12h-4zM256.5 34.5h4v12h-4zM255.5 34.5h4v12h-4zM269.5 34.5h4v12h-4zM276.5 34.5h4v12h-4zM283.5 34.5h4v12h-4zM296.5 34.5h4v12h-4zM301.5 34.5h4v12h-4zM304.5 34.5h4v12h-4zM325.5 34.5h4v12h-4zM332.5 34.5h4v12h-4zM339.5 34.5h4v12h-4zM349.5 34.5h4v12h-4zM358.5 34.5h4v12h-4zM366.5 34.5h4v12h-4zM372.5 34.5h4v12h-4zM385.5 34.5h4v12h-4zM390.5 34.5h4v12h-4zM435.5 34.5h4v12h-4zM530.5 34.5h4v12h-4zM538.5 34.5h4v12h-4zM0.5 45.5h4v12h-4zM8.5 45.5h4v12h-4zM14.5 45.5h4v12h-4zM27.5 45.5h4v12h-4zM28.5 45.5h4v12h-4zM83.5 45.5h4v12h-4zM90.5 45.5h4v12h-4zM99.5 45.5h4v12h-4zM107.5 45.5h4v12h-4zM111.5 45.5h4v12h-4zM118.5 45.5h4v12h-4zM125.5 45.5h4v12h-4zM146.5 45.5h4v12h-4zM186.5 45.5h4v12h-4zM195.5 45.5h4v12h-4zM204.5 45.5h4v12h-4zM207.5 45.5h4v12h-4zM214.5 45.5h4v12h-4zM231.5 45.5h4v12h-4zM261.5 45.5h4v12h-4zM270.5 45.5h4v12h-4zM277.5 45.5h4v12h-4zM282.5 45.5h4v12h-4zM434.5 45.5h4v12h-4zM459.5 45.5h4v12h-4zM515.5 45.5h4v12h-4zM522.5 45.5h4v12h-4zM18.5 56.5h4v13h-4zM109.5 56.5h4v13h-4zM160.5 56.5h4v13h-4zM167.5 56.5h4v13h-4zM205.5 56.5h4v13h-4zM213.5 56.5h4v13h-4zM390.5 56.5h4v13h-4zM397.5 56.5h4v13h-4zM404.5 56.5h4v13h-4zM414.5 56.5h4v13h-4zM426.5 56.5h4v13h-4zM525.5 56.5h4v13h-4zM533.5 56.5h4v13h-4zM541.5 56.5h4v13h-4zM547.5 56.5h4v13h-4zM16.5 68.5h4v12h-4zM34.5 68.5h4v12h-4zM67.5 68.5h4v12h-4zM75.5 68.5h4v12h-4zM92.5 68.5h4v12h-4zM99.5 68.5h4v12h-4zM110.5 68.5h4v12h-4zM116.5 68.5h4v12h-4zM128.5 68.5h4v12h-4zM127.5 68.5h4v12h-4zM164.5 68.5h4v12h-4zM239.5 68.5h4v12h-4zM248.5 68.5h4v12h-4zM567.5 68.5h4v12h-4zM576.5 68.5h4v12h-4zM5.5 79.5h4v12h-4zM14.5 79.5h4v12h-4zM27.5 79.5h4v12h-4zM36.5 79.5h4v12h-4zM43.5 79.5h4v12h-4zM54.5 79.5h4v12h-4zM63.5 79.5h4v12h-4zM72.5 79.5h4v12h-4zM75.5 79.5h4v12h-4zM90.5 79.5h4v12h-4zM132.5 79.5h4v12h-4zM140.5 79.5h4v12h-4zM148.5 79.5h4v12h-4zM156.5 79.5h4v12h-4zM160.5 79.5h4v12h-4zM292.5 79.5h4v12h-4zM318.5 79.5h4v12h-4zM327.5 79.5h4v12h-4zM332.5 79.5h4v12h-4zM342.5 79.5h4v12h-4zM386.5 79.5h4v12h-4zM394.5 79.5h4v12h-4zM402.5 79.5h4v12h-4zM413.5 79.5h4v12h-4zM414.5 79.5h4v12h-4zM426.5 79.5h4v12h-4zM522.5 79.5h4v12h-4zM561.5 79.5h4v12h-4zM570.5 79.5h4v12h-4zM579.5 79.5h4v12h-4zM588.5 79.5h4v12h-4zM597.5 79.5h4v12h-4zM22.5 90.5h4v12h-4zM31.5 90.5h4v12h-4zM168.5 90.5h4v12h-4zM175.5 90.5h4v12h-4zM294.5 90.5h4v12h-4zM302.5 90.5h4v12h-4zM312.5 90.5h4v12h-4zM318.5 90.5h4v12h-4zM322.5 90.5h4v12h-4zM334.5 90.5h4v12h-4zM336.5 90.5h4v12h-4zM343.5 90.5h4v12h-4zM384.5 90.5h4v12h-4zM391.5 90.5h4v12h-4zM464.5 90.5h4v12h-4zM471.5 90.5h4v12h-4zM478.5 90.5h4v12h-4zM491.5 90.5h4v12h-4zM500.5 90.5h4v12h-4zM509.5 90.5h4v12h-4zM650.5 90.5h4v12h-4zM659.5 90.5h4v12h-4zM12.5 101.5h4v12h-4zM68.5 101.5h4v12h-4zM152.5 101.5h4v12h-4zM161.5 101.5h4v12h-4zM170.5 101.5h4v12h-4zM179.5 101.5h4v12h-4zM188.5 101.5h4v12h-4zM192.5 101.5h4v12h-4zM288.5 101.5h4v12h-4zM297.5 101.5h4v12h-4zM302.5 101.5h4v12h-4zM309.5 101.5h4v12h-4zM473.5 101.5h4v12h-4zM482.5 101.5h4v12h-4zM487.5 101.5h4v12h-4zM500.5 101.5h4v12h-4zM509.5 101.5h4v12h-4zM513.5 101.5h4v12h-4zM597.5 101.5h4v12h-4zM12.5 112.5h4v12h-4zM19.5 112.5h4v12h-4zM45.5 112.5h4v12h-4zM172.5 112.5h4v12h-4zM179.5 112.5h4v12h-4zM190.5 112.5h4v12h-4zM259.5 112.5h4v12h-4zM266.5 112.5h4v12h-4zM275.5 112.5h4v12h-4zM280.5 112.5h4v12h-4zM295.5 112.5h4v12h-4zM299.5 112.5h4v12h-4zM336.5 112.5h4v12h-4zM343.5 112.5h4v12h-4zM378.5 112.5h4v12h-4zM400.5 112.5h4v12h-4zM586.5 112.5h4v12h-4zM594.5 112.5h4v12h-4zM604.5 112.5h4v12h-4zM607.5 112.5h4v12h-4zM618.5 112.5h4v12h-4zM621.5 112.5h4v12h-4zM646.5 112.5h4v12h-4zM655.5 112.5h4v12h-4zM22.5 123.5h4v12h-4zM127.5 123.5h4v12h-4zM136.5 123.5h4v12h-4zM141.5 123.5h4v12h-4zM151.5 123.5h4v12h-4zM163.5 123.5h4v12h-4zM186.5 123.5h4v12h-4zM352.5 123.5h4v12h-4zM392.5 123.5h4v12h-4zM483.5 123.5h4v12h-4zM11.5 134.5h4v12h-4zM19.5 134.5h4v12h-4zM29.5 134.5h4v12h-4zM73.5 134.5h4v12h-4zM82.5 134.5h4v12h-4zM87.5 134.5h4v12h-4zM134.5 134.5h4v12h-4zM210.5 134.5h4v12h-4zM218.5 134.5h4v12h-4zM257.5 134.5h4v12h-4zM264.5 134.5h4v12h-4zM273.5 134.5h4v12h-4zM284.5 134.5h4v12h-4zM289.5 134.5h4v12h-4zM297.5 134.5h4v12h-4zM307.5 134.5h4v12h-4zM315.5 134.5h4v12h-4zM321.5 134.5h4v12h-4zM334.5 134.5h4v12h-4zM439.5 134.5h4v12h-4zM448.5 134.5h4v12h-4zM457.5 134.5h4v12h-4zM463.5 134.5h4v12h-4zM510.5 134.5h4v12h-4zM517.5 134.5h4v12h-4zM528.5 134.5h4v12h-4zM565.5 134.5h4v12h-4zM572.5 134.5h4v12h-4zM617.5 134.5h4v12h-4zM626.5 134.5h4v12h-4zM19.5 145.5h4v12h-4zM27.5 145.5h4v12h-4zM120.5 145.5h4v12h-4zM137.5 145.5h4v12h-4zM146.5 145.5h4v12h-4zM159.5 145.5h4v12h-4zM167.5 145.5h4v12h-4zM177.5 145.5h4v12h-4zM180.5 145.5h4v12h-4zM242.5 145.5h4v12h-4zM249.5 145.5h4v12h-4zM260.5 145.5h4v12h-4zM266.5 145.5h4v12h-4zM270.5 145.5h4v12h-4zM287.5 145.5h4v12h-4zM290.5 145.5h4v12h-4zM305.5 145.5h4v12h-4zM429.5 145.5h4v12h-4zM438.5 145.5h4v12h-4zM443.5 145.5h4v12h-4zM514.5 145.5h4v12h-4zM27.5 156.5h4v12h-4zM34.5 156.5h4v12h-4zM84.5 156.5h4v12h-4zM91.5 156.5h4v12h-4zM102.5 156.5h4v12h-4zM105.5 156.5h4v12h-4zM112.5 156.5h4v12h-4zM119.5 156.5h4v12h-4zM138.5 156.5h4v12h-4zM140.5 156.5h4v12h-4zM170.5 156.5h4v12h-4zM179.5 156.5h4v12h-4zM295.5 156.5h4v12h-4zM302.5 156.5h4v12h-4zM311.5 156.5h4v12h-4zM473.5 156.5h4v12h-4zM481.5 156.5h4v12h-4zM489.5 156.5h4v12h-4zM500.5 156.5h4v12h-4zM560.5 156.5h4v12h-4zM569.5 156.5h4v12h-4zM576.5 156.5h4v12h-4zM587.5 156.5h4v12h-4zM596.5 156.5h4v12h-4zM595.5 156.5h4v12h-4zM626.5 156.5h4v12h-4zM634.5 156.5h4v12h-4zM642.5 156.5h4v12h-4zM650.5 156.5h4v12h-4zM662.5 156.5h4v12h-4zM26.5 167.5h4v12h-4zM33.5 167.5h4v12h-4zM40.5 167.5h4v12h-4zM60.5 167.5h4v12h-4zM69.5 167.5h4v12h-4zM76.5 167.5h4v12h-4zM201.5 167.5h4v12h-4zM209.5 167.5h4v12h-4zM215.5 167.5h4v12h-4zM225.5 167.5h4v12h-4zM263.5 167.5h4v12h-4zM478.5 167.5h4v12h-4zM486.5 167.5h4v12h-4zM492.5 167.5h4v12h-4zM502.5 167.5h4v12h-4zM506.5 167.5h4v12h-4zM523.5 167.5h4v12h-4zM520.5 167.5h4v12h-4zM534.5 167.5h4v12h-4zM15.5 178.5h4v13h-4zM24.5 178.5h4v13h-4zM29.5 178.5h4v13h-4zM171.5 178.5h4v13h-4zM178.5 178.5h4v13h-4zM185.5 178.5h4v13h-4zM192.5 178.5h4v13h-4zM464.5 178.5h4v13h-4zM473.5 178.5h4v13h-4zM494.5 178.5h4v13h-4zM503.5 178.5h4v13h-4zM521.5 178.5h4v13h-4zM8.5 190.5h4v12h-4zM17.5 190.5h4v12h-4zM26.5 190.5h4v12h-4zM35.5 190.5h4v12h-4zM44.5 190.5h4v12h-4zM232.5 190.5h4v12h-4zM239.5 190.5h4v12h-4zM250.5 190.5h4v12h-4zM253.5 190.5h4v12h-4zM260.5 190.5h4v12h-4zM267.5 190.5h4v12h-4zM274.5 190.5h4v12h-4zM288.5 190.5h4v12h-4zM390.5 190.5h4v12h-4zM398.5 190.5h4v12h-4zM406.5 190.5h4v12h-4zM414.5 190.5h4v12h-4zM422.5 190.5h4v12h-4zM430.5 190.5h4v12h-4zM444.5 190.5h4v12h-4zM439.5 190.5h4v12h-4zM500.5 190.5h4v12h-4zM508.5 190.5h4v12h-4zM578.5 190.5h4v12h-4zM587.5 190.5h4v12h-4zM592.5 190.5h4v12h-4zM605.5 190.5h4v12h-4zM610.5 190.5h4v12h-4zM613.5 190.5h4v12h-4zM664.5 190.5h4v12h-4zM25.5 201.5h4v12h-4zM34.5 201.5h4v12h-4zM41.5 201.5h4v12h-4zM46.5 201.5h4v12h-4zM82.5 201.5h4v12h-4zM91.5 201.5h4v12h-4zM96.5 201.5h4v12h-4zM103.5 201.5h4v12h-4zM118.5 201.5h4v12h-4zM117.5 201.5h4v12h-4zM124.5 201.5h4v12h-4zM145.5 201.5h4v12h-4zM364.5 201.5h4v12h-4zM371.5 201.5h4v12h-4zM380.5 201.5h4v12h-4zM388.5 201.5h4v12h-4zM400.5 201.5h4v12h-4zM567.5 201.5h4v12h-4zM590.5 201.5h4v12h-4zM597.5 201.5h4v12h-4zM606.5 201.5h4v12h-4zM617.5 201.5h4v12h-4zM29.5 212.5h4v12h-4zM38.5 212.5h4v12h-4zM43.5 212.5h4v12h-4zM53.5 212.5h4v12h-4zM65.5 212.5h4v12h-4zM72.5 212.5h4v12h-4zM91.5 212.5h4v12h-4zM421.5 212.5h4v12h-4zM428.5 212.5h4v12h-4zM437.5 212.5h4v12h-4zM442.5 212.5h4v12h-4zM457.5 212.5h4v12h-4zM461.5 212.5h4v12h-4zM542.5 212.5h4v12h-4zM549.5 212.5h4v12h-4zM558.5 212.5h4v12h-4zM563.5 212.5h4v12h-4zM578.5 212.5h4v12h-4zM577.5 212.5h4v12h-4zM596.5 212.5h4v12h-4zM591.5 212.5h4v12h-4zM3.5 223.5h4v12h-4zM11.5 223.5h4v12h-4zM21.5 223.5h4v12h-4zM30.5 223.5h4v12h-4zM35.5 223.5h4v12h-4zM97.5 223.5h4v12h-4zM106.5 223.5h4v12h-4zM115.5 223.5h4v12h-4zM118.5 223.5h4v12h-4zM133.5 223.5h4v12h-4zM137.5 223.5h4v12h-4zM154.5 223.5h4v12h-4zM175.5 223.5h4v12h-4zM184.5 223.5h4v12h-4zM202.5 223.5h4v12h-4zM263.5 223.5h4v12h-4zM270.5 223.5h4v12h-4zM350.5 223.5h4v12h-4zM357.5 223.5h4v12h-4zM364.5 223.5h4v12h-4zM374.5 223.5h4v12h-4zM378.5 223.5h4v12h-4zM390.5 223.5h4v12h-4zM420.5 223.5h4v12h-4zM428.5 223.5h4v12h-4zM514.5 223.5h4v12h-4zM541.5 223.5h4v12h-4zM549.5 223.5h4v12h-4zM636.5 223.5h4v12h-4zM644.5 223.5h4v12h-4zM650.5 223.5h4v12h-4zM657.5 223.5h4v12h-4zM29.5 234.5h4v12h-4zM38.5 234.5h4v12h-4zM148.5 234.5h4v12h-4zM222.5 234.5h4v12h-4zM231.5 234.5h4v12h-4zM238.5 234.5h4v12h-4zM243.5 234.5h4v12h-4zM254.5 234.5h4v12h-4zM267.5 234.5h4v12h-4zM264.5 234.5h4v12h-4zM271.5 234.5h4v12h-4zM294.5 234.5h4v12h-4zM301.5 234.5h4v12h-4zM308.5 234.5h4v12h-4zM386.5 234.5h4v12h-4zM394.5 234.5h4v12h-4zM400.5 234.5h4v12h-4zM407.5 234.5h4v12h-4zM414.5 234.5h4v12h-4zM421.5 234.5h4v12h-4zM455.5 234.5h4v12h-4zM464.5 234.5h4v12h-4zM469.5 234.5h4v12h-4zM482.5 234.5h4v12h-4zM491.5 234.5h4v12h-4zM495.5 234.5h4v12h-4zM497.5 234.5h4v12h-4zM504.5 234.5h4v12h-4zM553.5 234.5h4v12h-4zM560.5 234.5h4v12h-4zM567.5 234.5h4v12h-4zM574.5 234.5h4v12h-4zM635.5 234.5h4v12h-4zM642.5 234.5h4v12h-4zM653.5 234.5h4v12h-4zM659.5 234.5h4v12h-4zM5.5 245.5h4v12h-4zM12.5 245.5h4v12h-4zM48.5 245.5h4v12h-4zM56.5 245.5h4v12h-4zM66.5 245.5h4v12h-4zM75.5 245.5h4v12h-4zM80.5 245.5h4v12h-4zM93.5 245.5h4v12h-4zM96.5 245.5h4v12h-4zM97.5 245.5h4v12h-4zM152.5 245.5h4v12h-4zM184.5 245.5h4v12h-4zM191.5 245.5h4v12h-4zM243.5 245.5h4v12h-4zM252.5 245.5h4v12h-4zM259.5 245.5h4v12h-4zM264.5 245.5h4v12h-4zM271.5 245.5h4v12h-4zM288.5 245.5h4v12h-4zM297.5 245.5h4v12h-4zM299.5 245.5h4v12h-4zM331.5 245.5h4v12h-4zM339.5 245.5h4v12h-4zM345.5 245.5h4v12h-4zM352.5 245.5h4v12h-4zM367.5 245.5h4v12h-4zM417.5 245.5h4v12h-4zM424.5 245.5h4v12h-4zM431.5 245.5h4v12h-4zM441.5 245.5h4v12h-4zM652.5 245.5h4v12h-4zM667.5 245.5h4v12h-4zM18.5 256.5h4v12h-4zM26.5 256.5h4v12h-4zM32.5 256.5h4v12h-4zM42.5 256.5h4v12h-4zM54.5 256.5h4v12h-4zM63.5 256.5h4v12h-4zM60.5 256.5h4v12h-4zM74.5 256.5h4v12h-4zM208.5 256.5h4v12h-4zM217.5 256.5h4v12h-4zM224.5 256.5h4v12h-4zM235.5 256.5h4v12h-4zM240.5 256.5h4v12h-4zM253.5 256.5h4v12h-4zM262.5 256.5h4v12h-4zM264.5 256.5h4v12h-4zM334.5 256.5h4v12h-4zM342.5 256.5h4v12h-4zM348.5 256.5h4v12h-4zM361.5 256.5h4v12h-4zM380.5 256.5h4v12h-4zM388.5 256.5h4v12h-4zM396.5 256.5h4v12h-4zM407.5 256.5h4v12h-4zM416.5 256.5h4v12h-4zM422.5 256.5h4v12h-4zM429.5 256.5h4v12h-4zM502.5 256.5h4v12h-4zM510.5 256.5h4v12h-4zM518.5 256.5h4v12h-4zM529.5 256.5h4v12h-4zM534.5 256.5h4v12h-4zM547.5 256.5h4v12h-4zM556.5 256.5h4v12h-4zM558.5 256.5h4v12h-4zM644.5 256.5h4v12h-4zM651.5 256.5h4v12h-4zM662.5 256.5h4v12h-4zM665.5 256.5h4v12h-4zM15.5 267.5h4v12h-4zM24.5 267.5h4v12h-4zM32.5 267.5h4v12h-4zM41.5 267.5h4v12h-4zM164.5 267.5h4v12h-4zM171.5 267.5h4v12h-4zM182.5 267.5h4v12h-4zM185.5 267.5h4v12h-4zM196.5 267.5h4v12h-4zM209.5 267.5h4v12h-4zM329.5 267.5h4v12h-4zM462.5 267.5h4v12h-4zM470.5 267.5h4v12h-4zM478.5 267.5h4v12h-4zM601.5 267.5h4v12h-4zM610.5 267.5h4v12h-4zM615.5 267.5h4v12h-4zM650.5 267.5h4v12h-4zM657.5 267.5h4v12h-4zM21.5 278.5h4v12h-4zM36.5 278.5h4v12h-4zM45.5 278.5h4v12h-4zM54.5 278.5h4v12h-4zM57.5 278.5h4v12h-4zM64.5 278.5h4v12h-4zM76.5 278.5h4v12h-4zM90.5 278.5h4v12h-4zM99.5 278.5h4v12h-4zM185.5 278.5h4v12h-4zM194.5 278.5h4v12h-4zM199.5 278.5h4v12h-4zM209.5 278.5h4v12h-4zM251.5 278.5h4v12h-4zM259.5 278.5h4v12h-4zM269.5 278.5h4v12h-4zM272.5 278.5h4v12h-4zM401.5 278.5h4v12h-4zM409.5 278.5h4v12h-4zM419.5 278.5h4v12h-4zM428.5 278.5h4v12h-4zM429.5 278.5h4v12h-4zM465.5 278.5h4v12h-4zM473.5 278.5h4v12h-4zM483.5 278.5h4v12h-4zM612.5 278.5h4v12h-4zM619.5 278.5h4v12h-4zM3.5 289.5h4v12h-4zM11.5 289.5h4v12h-4zM21.5 289.5h4v12h-4zM24.5 289.5h4v12h-4zM47.5 289.5h4v12h-4zM298.5 289.5h4v12h-4zM305.5 289.5h4v12h-4zM379.5 289.5h4v12h-4zM388.5 289.5h4v12h-4zM647.5 289.5h4v12h-4zM654.5 289.5h4v12h-4zM2.5 300.5h4v13h-4zM11.5 300.5h4v13h-4zM18.5 300.5h4v13h-4zM23.5 300.5h4v13h-4zM38.5 300.5h4v13h-4zM42.5 300.5h4v13h-4zM50.5 300.5h4v13h-4zM65.5 300.5h4v13h-4zM372.5 300.5h4v13h-4zM380.5 300.5h4v13h-4zM386.5 300.5h4v13h-4zM396.5 300.5h4v13h-4zM400.5 300.5h4v13h-4zM412.5 300.5h4v13h-4zM462.5 300.5h4v13h-4zM555.5 300.5h4v13h-4zM628.5 300.5h4v13h-4zM637.5 300.5h4v13h-4zM646.5 300.5h4v13h-4zM29.5 312.5h4v12h-4zM36.5 312.5h4v12h-4zM45.5 312.5h4v12h-4zM56.5 312.5h4v12h-4zM65.5 312.5h4v12h-4zM74.5 312.5h4v12h-4zM117.5 312.5h4v12h-4zM125.5 312.5h4v12h-4zM195.5 312.5h4v12h-4zM203.5 312.5h4v12h-4zM213.5 312.5h4v12h-4zM242.5 312.5h4v12h-4zM249.5 312.5h4v12h-4zM258.5 312.5h4v12h-4zM266.5 312.5h4v12h-4zM270.5 312.5h4v12h-4zM287.5 312.5h4v12h-4zM295.5 312.5h4v12h-4zM303.5 312.5h4v12h-4zM313.5 312.5h4v12h-4zM316.5 312.5h4v12h-4zM327.5 312.5h4v12h-4zM340.5 312.5h4v12h-4zM358.5 312.5h4v12h-4zM367.5 312.5h4v12h-4zM424.5 312.5h4v12h-4zM431.5 312.5h4v12h-4zM442.5 312.5h4v12h-4zM445.5 312.5h4v12h-4zM452.5 312.5h4v12h-4zM464.5 312.5h4v12h-4zM466.5 312.5h4v12h-4zM480.5 312.5h4v12h-4zM571.5 312.5h4v12h-4zM6.5 323.5h4v12h-4zM13.5 323.5h4v12h-4zM20.5 323.5h4v12h-4zM30.5 323.5h4v12h-4zM110.5 323.5h4v12h-4zM118.5 323.5h4v12h-4zM171.5 323.5h4v12h-4zM179.5 323.5h4v12h-4zM185.5 323.5h4v12h-4zM198.5 323.5h4v12h-4zM203.5 323.5h4v12h-4zM216.5 323.5h4v12h-4zM219.5 323.5h4v12h-4zM227.5 323.5h4v12h-4zM255.5 323.5h4v12h-4zM262.5 323.5h4v12h-4zM338.5 323.5h4v12h-4zM347.5 323.5h4v12h-4zM356.5 323.5h4v12h-4zM365.5 323.5h4v12h-4zM476.5 323.5h4v12h-4zM485.5 323.5h4v12h-4zM492.5 323.5h4v12h-4zM617.5 323.5h4v12h-4zM626.5 323.5h4v12h-4zM645.5 323.5h4v12h-4zM653.5 323.5h4v12h-4zM15.5 334.5h4v12h-4zM23.5 334.5h4v12h-4zM31.5 334.5h4v12h-4zM42.5 334.5h4v12h-4zM43.5 334.5h4v12h-4zM55.5 334.5h4v12h-4zM69.5 334.5h4v12h-4zM71.5 334.5h4v12h-4zM127.5 334.5h4v12h-4zM162.5 334.5h4v12h-4zM170.5 334.5h4v12h-4zM194.5 334.5h4v12h-4zM203.5 334.5h4v12h-4zM208.5 334.5h4v12h-4zM221.5 334.5h4v12h-4zM230.5 334.5h4v12h-4zM286.5 334.5h4v12h-4zM293.5 334.5h4v12h-4zM304.5 334.5h4v12h-4zM310.5 334.5h4v12h-4zM461.5 334.5h4v12h-4zM468.5 334.5h4v12h-4zM477.5 334.5h4v12h-4zM488.5 334.5h4v12h-4zM580.5 334.5h4v12h-4zM587.5 334.5h4v12h-4zM594.5 334.5h4v12h-4zM601.5 334.5h4v12h-4zM612.5 334.5h4v12h-4zM615.5 334.5h4v12h-4zM632.5 334.5h4v12h-4zM639.5 334.5h4v12h-4zM27.5 345.5h4v12h-4zM259.5 345.5h4v12h-4zM266.5 345.5h4v12h-4zM277.5 345.5h4v12h-4zM280.5 345.5h4v12h-4zM287.5 345.5h4v12h-4zM360.5 345.5h4v12h-4zM369.5 345.5h4v12h-4zM378.5 345.5h4v12h-4zM387.5 345.5h4v12h-4zM392.5 345.5h4v12h-4zM395.5 345.5h4v12h-4zM510.5 345.5h4v12h-4zM517.5 345.5h4v12h-4zM526.5 345.5h4v12h-4zM537.5 345.5h4v12h-4zM546.5 345.5h4v12h-4zM640.5 345.5h4v12h-4zM648.5 345.5h4v12h-4zM654.5 345.5h4v12h-4zM18.5 356.5h4v12h-4zM25.5 356.5h4v12h-4zM32.5 356.5h4v12h-4zM39.5 356.5h4v12h-4zM221.5 356.5h4v12h-4zM228.5 356.5h4v12h-4zM235.5 356.5h4v12h-4zM245.5 356.5h4v12h-4zM249.5 356.5h4v12h-4zM261.5 356.5h4v12h-4zM309.5 356.5h4v12h-4zM317.5 356.5h4v12h-4zM327.5 356.5h4v12h-4zM336.5 356.5h4v12h-4zM337.5 356.5h4v12h-4zM386.5 356.5h4v12h-4zM463.5 356.5h4v12h-4zM563.5 356.5h4v12h-4zM572.5 356.5h4v12h-4zM579.5 356.5h4v12h-4zM590.5 356.5h4v12h-4zM591.5 356.5h4v12h-4zM608.5 356.5h4v12h-4zM20.5 367.5h4v12h-4zM28.5 367.5h4v12h-4zM38.5 367.5h4v12h-4zM113.5 367.5h4v12h-4zM120.5 367.5h4v12h-4zM127.5 367.5h4v12h-4zM167.5 367.5h4v12h-4zM174.5 367.5h4v12h-4zM219.5 367.5h4v12h-4zM228.5 367.5h4v12h-4zM233.5 367.5h4v12h-4zM245.5 367.5h4v12h-4zM254.5 367.5h4v12h-4zM356.5 367.5h4v12h-4zM365.5 367.5h4v12h-4zM372.5 367.5h4v12h-4zM380.5 367.5h4v12h-4zM388.5 367.5h4v12h-4zM401.5 367.5h4v12h-4zM439.5 367.5h4v12h-4zM447.5 367.5h4v12h-4zM572.5 367.5h4v12h-4zM580.5 367.5h4v12h-4zM0.5 378.5h4v12h-4zM7.5 378.5h4v12h-4zM26.5 378.5h4v12h-4zM33.5 378.5h4v12h-4zM42.5 378.5h4v12h-4zM53.5 378.5h4v12h-4zM83.5 378.5h4v12h-4zM92.5 378.5h4v12h-4zM359.5 378.5h4v12h-4zM368.5 378.5h4v12h-4zM373.5 378.5h4v12h-4zM386.5 378.5h4v12h-4zM459.5 378.5h4v12h-4zM473.5 378.5h4v12h-4zM480.5 378.5h4v12h-4zM569.5 378.5h4v12h-4zM585.5 378.5h4v12h-4zM593.5 378.5h4v12h-4zM617.5 378.5h4v12h-4zM624.5 378.5h4v12h-4zM635.5 378.5h4v12h-4zM641.5 378.5h4v12h-4zM20.5 389.5h4v12h-4zM29.5 389.5h4v12h-4zM212.5 389.5h4v12h-4zM219.5 389.5h4v12h-4zM226.5 389.5h4v12h-4zM239.5 389.5h4v12h-4zM248.5 389.5h4v12h-4zM252.5 389.5h4v12h-4zM294.5 389.5h4v12h-4zM301.5 389.5h4v12h-4zM312.5 389.5h4v12h-4zM321.5 389.5h4v12h-4zM401.5 389.5h4v12h-4zM430.5 389.5h4v12h-4zM437.5 389.5h4v12h-4zM446.5 389.5h4v12h-4zM451.5 389.5h4v12h-4zM462.5 389.5h4v12h-4zM536.5 389.5h4v12h-4zM659.5 389.5h4v12h-4zM19.5 400.5h4v12h-4zM28.5 400.5h4v12h-4zM130.5 400.5h4v12h-4zM139.5 400.5h4v12h-4zM144.5 400.5h4v12h-4zM154.5 400.5h4v12h-4zM158.5 400.5h4v12h-4zM165.5 400.5h4v12h-4zM178.5 400.5h4v12h-4zM179.5 400.5h4v12h-4zM240.5 400.5h4v12h-4zM249.5 400.5h4v12h-4zM364.5 400.5h4v12h-4zM371.5 400.5h4v12h-4zM386.5 400.5h4v12h-4zM404.5 400.5h4v12h-4zM656.5 400.5h4v12h-4zM664.5 400.5h4v12h-4zM17.5 411.5h4v12h-4zM24.5 411.5h4v12h-4zM59.5 411.5h4v12h-4zM67.5 411.5h4v12h-4zM73.5 411.5h4v12h-4zM218.5 411.5h4v12h-4zM226.5 411.5h4v12h-4zM232.5 411.5h4v12h-4zM245.5 411.5h4v12h-4zM254.5 411.5h4v12h-4zM271.5 411.5h4v12h-4zM278.5 411.5h4v12h-4zM360.5 411.5h4v12h-4zM369.5 411.5h4v12h-4zM374.5 411.5h4v12h-4zM381.5 411.5h4v12h-4zM409.5 411.5h4v12h-4zM418.5 411.5h4v12h-4zM427.5 411.5h4v12h-4zM433.5 411.5h4v12h-4zM445.5 411.5h4v12h-4zM547.5 411.5h4v12h-4zM555.5 411.5h4v12h-4zM21.5 422.5h4v13h-4zM28.5 422.5h4v13h-4zM37.5 422.5h4v13h-4zM42.5 422.5h4v13h-4zM53.5 422.5h4v13h-4zM66.5 422.5h4v13h-4zM75.5 422.5h4v13h-4zM84.5 422.5h4v13h-4zM171.5 422.5h4v13h-4zM313.5 422.5h4v13h-4zM320.5 422.5h4v13h-4zM331.5 422.5h4v13h-4zM340.5 422.5h4v13h-4zM345.5 422.5h4v13h-4zM348.5 422.5h4v13h-4zM355.5 422.5h4v13h-4zM376.5 422.5h4v13h-4zM496.5 422.5h4v13h-4zM505.5 422.5h4v13h-4zM622.5 422.5h4v13h-4zM631.5 422.5h4v13h-4zM640.5 422.5h4v13h-4zM643.5 422.5h4v13h-4zM658.5 422.5h4v13h-4zM667.5 422.5h4v13h-4zM11.5 434.5h4v12h-4zM19.5 434.5h4v12h-4zM29.5 434.5h4v12h-4zM35.5 434.5h4v12h-4zM43.5 434.5h4v12h-4zM109.5 434.5h4v12h-4zM128.5 434.5h4v12h-4zM137.5 434.5h4v12h-4zM144.5 434.5h4v12h-4zM149.5 434.5h4v12h-4zM156.5 434.5h4v12h-4zM168.5 434.5h4v12h-4zM335.5 434.5h4v12h-4zM343.5 434.5h4v12h-4zM400.5 434.5h4v12h-4zM409.5 434.5h4v12h-4zM414.5 434.5h4v12h-4zM534.5 434.5h4v12h-4zM543.5 434.5h4v12h-4zM552.5 434.5h4v12h-4zM561.5 434.5h4v12h-4zM562.5 434.5h4v12h-4zM16.5 445.5h4v12h-4zM24.5 445.5h4v12h-4zM41.5 445.5h4v12h-4zM49.5 445.5h4v12h-4zM59.5 445.5h4v12h-4zM68.5 445.5h4v12h-4zM77.5 445.5h4v12h-4zM117.5 445.5h4v12h-4zM125.5 445.5h4v12h-4zM135.5 445.5h4v12h-4zM222.5 445.5h4v12h-4zM231.5 445.5h4v12h-4zM236.5 445.5h4v12h-4zM246.5 445.5h4v12h-4zM254.5 445.5h4v12h-4zM257.5 445.5h4v12h-4zM276.5 445.5h4v12h-4zM285.5 445.5h4v12h-4zM455.5 445.5h4v12h-4zM496.5 445.5h4v12h-4zM505.5 445.5h4v12h-4zM526.5 445.5h4v12h-4zM533.5 445.5h4v12h-4zM544.5 445.5h4v12h-4zM547.5 445.5h4v12h-4zM562.5 445.5h4v12h-4zM571.5 445.5h4v12h-4zM568.5 445.5h4v12h-4zM575.5 445.5h4v12h-4zM630.5 445.5h4v12h-4zM639.5 445.5h4v12h-4zM644.5 445.5h4v12h-4zM13.5 456.5h4v12h-4zM41.5 456.5h4v12h-4zM50.5 456.5h4v12h-4zM57.5 456.5h4v12h-4zM65.5 456.5h4v12h-4zM86.5 456.5h4v12h-4zM108.5 456.5h4v12h-4zM117.5 456.5h4v12h-4zM124.5 456.5h4v12h-4zM132.5 456.5h4v12h-4zM148.5 456.5h4v12h-4zM168.5 456.5h4v12h-4zM175.5 456.5h4v12h-4zM186.5 456.5h4v12h-4zM211.5 456.5h4v12h-4zM330.5 456.5h4v12h-4zM338.5 456.5h4v12h-4zM386.5 456.5h4v12h-4zM395.5 456.5h4v12h-4zM402.5 456.5h4v12h-4zM590.5 456.5h4v12h-4zM598.5 456.5h4v12h-4zM606.5 456.5h4v12h-4zM633.5 456.5h4v12h-4zM641.5 456.5h4v12h-4zM649.5 456.5h4v12h-4zM654.5 456.5h4v12h-4zM3.5 467.5h4v12h-4zM12.5 467.5h4v12h-4zM21.5 467.5h4v12h-4zM35.5 467.5h4v12h-4zM42.5 467.5h4v12h-4zM51.5 467.5h4v12h-4zM56.5 467.5h4v12h-4zM176.5 467.5h4v12h-4zM185.5 467.5h4v12h-4zM192.5 467.5h4v12h-4zM200.5 467.5h4v12h-4zM208.5 467.5h4v12h-4zM211.5 467.5h4v12h-4zM224.5 467.5h4v12h-4zM239.5 467.5h4v12h-4zM258.5 467.5h4v12h-4zM267.5 467.5h4v12h-4zM337.5 467.5h4v12h-4zM344.5 467.5h4v12h-4zM413.5 467.5h4v12h-4zM420.5 467.5h4v12h-4zM429.5 467.5h4v12h-4zM434.5 467.5h4v12h-4zM441.5 467.5h4v12h-4zM448.5 467.5h4v12h-4zM543.5 467.5h4v12h-4zM550.5 467.5h4v12h-4zM559.5 467.5h4v12h-4zM564.5 467.5h4v12h-4zM575.5 467.5h4v12h-4zM586.5 467.5h4v12h-4zM13.5 478.5h4v4h-4zM21.5 478.5h4v4h-4zM29.5 478.5h4v4h-4zM40.5 478.5h4v4h-4zM49.5 478.5h4v4h-4zM48.5 478.5h4v4h-4zM61.5 478.5h4v4h-4zM76.5 478.5h4v4h-4zM108.5 478.5h4v4h-4zM117.5 478.5h4v4h-4zM124.5 478.5h4v4h-4zM132.5 478.5h4v4h-4zM158.5 478.5h4v4h-4zM165.5 478.5h4v4h-4zM174.5 478.5h4v4h-4zM277.5 478.5h4v4h-4zM285.5 478.5h4v4h-4zM293.5 478.5h4v4h-4zM304.5 478.5h4v4h-4zM313.5 478.5h4v4h-4zM322.5 478.5h4v4h-4zM331.5 478.5h4v4h-4zM333.5 478.5h4v4h-4zM352.5 478.5h4v4h-4zM359.5 478.5h4v4h-4zM422.5 478.5h4v4h-4zM431.5 478.5h4v4h-4zM440.5 478.5h4v4h-4zM443.5 478.5h4v4h-4zM454.5 478.5h4v4h-4zM467.5 478.5h4v4h-4zM476.5 478.5h4v4h-4zM471.5 478.5h4v4h-4zM552.5 478.5h4v4h-4zM559.5 478.5h4v4h-4zM570.5 478.5h4v4h-4zM637.5 478.5h4v4h-4zM644.5 478.5h4v4h-4z"/><rect x="0.5" y="0.5" width="675" height="482" fill="none" stroke="#e06a50" stroke-width="1"/><path d="M0 482.5H676" stroke="#5a20b0" stroke-width="1"/></svg><div style="position:absolute;left:224px;top:711px;width:115px;height:7px;box-sizing:border-box;border:1px solid #808080;background:#fff;"></div><div style="position:absolute;left:224px;top:711px;width:58px;height:7px;background:#808080;"></div><span style="position:absolute;left:298px;top:694px;font-family:'Liberation Mono',monospace;font-size:13px;line-height:13px;color:#8a8a8a;white-space:pre;">40 µm</span>
<span class="t" style="left:965.22px;top:107.97px;font-size:12.5px;color:#1a1a1a;transform:scaleX(1.0806);">Layers</span>
<div style="position:absolute;left:1156px;top:108px;width:11px;height:11px;box-sizing:border-box;border:1px solid #6f6d6a;border-radius:2.5px;"></div><div style="position:absolute;left:1170px;top:108px;width:11px;height:11px;box-sizing:border-box;border:1px solid #6f6d6a;border-radius:2.5px;"></div><svg style="position:absolute;left:1156px;top:108px" width="11" height="11"><rect x="3.7" y="2.7" width="4.8" height="4.3" rx="1" fill="none" stroke="#6f6d6a" stroke-width="1"/><rect x="2.6" y="4.2" width="4.4" height="4.4" rx="1.2" fill="#f4f2ef" stroke="#6f6d6a" stroke-width="1"/></svg><svg style="position:absolute;left:1170px;top:108px" width="11" height="11"><path d="M2.8 2.8L8.2 8.2M8.2 2.8L2.8 8.2" stroke="#666461" stroke-width="2.1"/></svg>
<div style="position:absolute;left:962px;top:123px;width:221px;height:449px;box-sizing:border-box;border:1px solid #bab6b1;background:#fff;"></div>
<svg style="position:absolute;left:966px;top:125px" width="32" height="15"><rect x="0.5" y="0.5" width="31" height="14" fill="none" stroke="#b45cd6" stroke-width="1.3"/><path d="M26 0.5L31.5 6M22 5L31.5 14.5" stroke="#b45cd6" stroke-width="1" fill="none"/></svg>
<span class="t" style="left:1006.80px;top:126.78px;font-size:12.5px;font-weight:bold;color:#111;transform:scaleX(1.1062);">COMP 22/0</span>
<svg style="position:absolute;left:966px;top:141px" width="32" height="15"><rect x="0.5" y="0.5" width="31" height="14" fill="none" stroke="#f5834f" stroke-width="1.3"/><path d="M26 0.5L31.5 6M22 5L31.5 14.5" stroke="#f5834f" stroke-width="1" fill="none"/></svg>
<span class="t" style="left:1005.62px;top:142.78px;font-size:12.5px;font-weight:bold;color:#111;transform:scaleX(1.1797);">Nwell 21/0</span>
<svg style="position:absolute;left:966px;top:157px" width="32" height="15"><rect x="0.5" y="0.5" width="31" height="14" fill="none" stroke="#2c2ca0" stroke-width="1.3"/><path d="M22 10L31.5 0.5M26 14.5L31.5 9" stroke="#2c2ca0" stroke-width="1" fill="none"/></svg>
<span class="t" style="left:1005.68px;top:158.78px;font-size:12.5px;font-weight:bold;color:#111;transform:scaleX(1.1174);">LVPWELL 204/0</span>
<svg style="position:absolute;left:966px;top:173px" width="32" height="15"><rect x="0.5" y="0.5" width="31" height="14" fill="none" stroke="#c8694c" stroke-width="1.3"/><path d="M26 0.5L31.5 6M22 5L31.5 14.5" stroke="#c8694c" stroke-width="1" fill="none"/></svg>
<span class="t" style="left:1005.62px;top:174.78px;font-size:12.5px;font-weight:bold;color:#111;transform:scaleX(1.1772);">Dualgate 55/0</span>
<svg style="position:absolute;left:966px;top:189px" width="32" height="15"><rect x="0.5" y="0.5" width="31" height="14" fill="none" stroke="#1fa01f" stroke-width="1.3"/><path d="M22 10L31.5 0.5M26 14.5L31.5 9" stroke="#1fa01f" stroke-width="1" fill="none"/></svg>
<span class="t" style="left:1005.64px;top:190.78px;font-size:12.5px;font-weight:bold;color:#111;transform:scaleX(1.1600);">Poly2 30/0</span>
<svg style="position:absolute;left:966px;top:205px" width="32" height="15"><rect x="0.5" y="0.5" width="31" height="14" fill="none" stroke="#c046f2" stroke-width="1.3"/><path d="M26 0.5L31.5 6M22 5L31.5 14.5" stroke="#c046f2" stroke-width="1" fill="none"/></svg>
<span class="t" style="left:1005.65px;top:206.78px;font-size:12.5px;font-weight:bold;color:#111;transform:scaleX(1.1541);">Nplus 32/0</span>
<svg style="position:absolute;left:966px;top:221px" width="32" height="15"><rect x="0.5" y="0.5" width="31" height="14" fill="none" stroke="#33c9a3" stroke-width="1.3"/><path d="M22 10L31.5 0.5M26 14.5L31.5 9" stroke="#33c9a3" stroke-width="1" fill="none"/></svg>
<span class="t" style="left:1005.66px;top:222.78px;font-size:12.5px;font-weight:bold;color:#111;transform:scaleX(1.1410);">Pplus 31/0</span>
<svg style="position:absolute;left:966px;top:237px" width="32" height="15"><rect x="0.5" y="0.5" width="31" height="14" fill="none" stroke="#c85a2a" stroke-width="1.3"/><path d="M26 0.5L31.5 6M22 5L31.5 14.5" stroke="#c85a2a" stroke-width="1" fill="none"/></svg>
<span class="t" style="left:1006.80px;top:238.78px;font-size:12.5px;font-weight:bold;color:#111;transform:scaleX(1.1392);">Contact 33/0</span>
<svg style="position:absolute;left:981px;top:256px" width="6" height="9"><path d="M0 0L5.5 4.5L0 9Z" fill="#e6d000"/></svg>
<svg style="position:absolute;left:989px;top:253px" width="9" height="15"><rect x="0.5" y="0.5" width="8" height="14" fill="none" stroke="#e6d000" stroke-width="1.3"/><path d="M0.5 6L8.5 -2M0.5 14L8.5 6" stroke="#e6d000" stroke-width="1" fill="none"/></svg>
<span class="t" style="left:1005.59px;top:254.78px;font-size:12.5px;font-weight:bold;color:#111;transform:scaleX(1.2077);">Metal1 34/0</span>
<svg style="position:absolute;left:966px;top:269px" width="32" height="15"><rect x="0.5" y="0.5" width="31" height="14" fill="none" stroke="#eadcf0" stroke-width="1.3"/><path d="M26 0.5L31.5 6M22 5L31.5 14.5" stroke="#eadcf0" stroke-width="1" fill="none"/></svg>
<span class="t" style="left:1006.80px;top:270.78px;font-size:12.5px;font-weight:bold;color:#111;transform:scaleX(1.1660);">Via1 35/0</span>
<svg style="position:absolute;left:981px;top:288px" width="6" height="9"><path d="M0 0L5.5 4.5L0 9Z" fill="#c8ea1c"/></svg>
<svg style="position:absolute;left:989px;top:285px" width="9" height="15"><rect x="0.5" y="0.5" width="8" height="14" fill="none" stroke="#c8ea1c" stroke-width="1.3"/><path d="M0.5 6L8.5 -2M0.5 14L8.5 6" stroke="#c8ea1c" stroke-width="1" fill="none"/></svg>
<span class="t" style="left:1005.59px;top:286.78px;font-size:12.5px;font-weight:bold;color:#111;transform:scaleX(1.2077);">Metal2 36/0</span>
<svg style="position:absolute;left:966px;top:301px" width="32" height="15"><rect x="0.5" y="0.5" width="31" height="14" fill="none" stroke="#dedbd6" stroke-width="1.3"/><path d="M26 0.5L31.5 6M22 5L31.5 14.5" stroke="#dedbd6" stroke-width="1" fill="none"/></svg>
<span class="t" style="left:1006.80px;top:302.78px;font-size:12.5px;font-weight:bold;color:#111;transform:scaleX(1.1660);">Via2 38/0</span>
<svg style="position:absolute;left:981px;top:320px" width="6" height="9"><path d="M0 0L5.5 4.5L0 9Z" fill="#a8c81e"/></svg>
<svg style="position:absolute;left:989px;top:317px" width="9" height="15"><rect x="0.5" y="0.5" width="8" height="14" fill="none" stroke="#a8c81e" stroke-width="1.3"/><path d="M0.5 6L8.5 -2M0.5 14L8.5 6" stroke="#a8c81e" stroke-width="1" fill="none"/></svg>
<span class="t" style="left:1005.60px;top:318.78px;font-size:12.5px;font-weight:bold;color:#111;transform:scaleX(1.2031);">Metal3 42/0</span>
<svg style="position:absolute;left:981px;top:336px" width="6" height="9"><path d="M0 0L5.5 4.5L0 9Z" fill="#3cd6e6"/></svg>
<svg style="position:absolute;left:989px;top:333px" width="9" height="15"><rect x="0.5" y="0.5" width="8" height="14" fill="none" stroke="#3cd6e6" stroke-width="1.3"/><path d="M0.5 1L8.5 9M0.5 8L7 14.5" stroke="#3cd6e6" stroke-width="1" fill="none"/></svg>
<span class="t" style="left:1006.80px;top:334.78px;font-size:12.5px;font-weight:bold;color:#111;transform:scaleX(1.1698);">Via3 40/0</span>
<svg style="position:absolute;left:981px;top:352px" width="6" height="9"><path d="M0 0L5.5 4.5L0 9Z" fill="#822a80"/></svg>
<svg style="position:absolute;left:989px;top:349px" width="9" height="15"><rect x="0.5" y="0.5" width="8" height="14" fill="none" stroke="#822a80" stroke-width="1.3"/><path d="M0.5 6L8.5 -2M0.5 14L8.5 6" stroke="#822a80" stroke-width="1" fill="none"/></svg>
<span class="t" style="left:1005.59px;top:350.78px;font-size:12.5px;font-weight:bold;color:#111;transform:scaleX(1.2108);">Metal4 46/0</span>
<svg style="position:absolute;left:966px;top:365px" width="32" height="15"><rect x="0.5" y="0.5" width="31" height="14" fill="none" stroke="#960070" stroke-width="1.3"/><path d="M22 10L31.5 0.5M26 14.5L31.5 9" stroke="#960070" stroke-width="1" fill="none"/></svg>
<span class="t" style="left:1005.64px;top:366.78px;font-size:12.5px;font-weight:bold;color:#111;transform:scaleX(1.1562);">Metal1_Label 34/10</span>
<svg style="position:absolute;left:981px;top:384px" width="6" height="9"><path d="M0 0L5.5 4.5L0 9Z" fill="#ff80c8"/></svg>
<svg style="position:absolute;left:989px;top:381px" width="9" height="15"><rect x="0.5" y="0.5" width="8" height="14" fill="none" stroke="#ff80c8" stroke-width="1.3"/><path d="M0.5 1L8.5 9M0.5 8L7 14.5" stroke="#ff80c8" stroke-width="1" fill="none"/></svg>
<span class="t" style="left:1005.64px;top:382.78px;font-size:12.5px;font-weight:bold;color:#111;transform:scaleX(1.1562);">Metal2_Label 36/10</span>
<svg style="position:absolute;left:981px;top:400px" width="6" height="9"><path d="M0 0L5.5 4.5L0 9Z" fill="#b09244"/></svg>
<svg style="position:absolute;left:989px;top:397px" width="9" height="15"><rect x="0.5" y="0.5" width="8" height="14" fill="none" stroke="#b09244" stroke-width="1.3"/><path d="M0.5 6L8.5 -2M0.5 14L8.5 6" stroke="#b09244" stroke-width="1" fill="none"/></svg>
<span class="t" style="left:1005.64px;top:398.78px;font-size:12.5px;font-weight:bold;color:#111;transform:scaleX(1.1562);">Metal3_Label 42/10</span>
<svg style="position:absolute;left:981px;top:416px" width="6" height="9"><path d="M0 0L5.5 4.5L0 9Z" fill="#8f72e0"/></svg>
<svg style="position:absolute;left:989px;top:413px" width="9" height="15"><rect x="0.5" y="0.5" width="8" height="14" fill="none" stroke="#8f72e0" stroke-width="1.3"/><path d="M0.5 1L8.5 9M0.5 8L7 14.5" stroke="#8f72e0" stroke-width="1" fill="none"/></svg>
<span class="t" style="left:1005.64px;top:414.78px;font-size:12.5px;font-weight:bold;color:#111;transform:scaleX(1.1562);">Metal4_Label 46/10</span>
<svg style="position:absolute;left:981px;top:432px" width="6" height="9"><path d="M0 0L5.5 4.5L0 9Z" fill="#22b422"/></svg>
<svg style="position:absolute;left:989px;top:429px" width="9" height="15"><rect x="0.5" y="0.5" width="8" height="14" fill="none" stroke="#22b422" stroke-width="1.3"/><path d="M0.5 1L8.5 9M0.5 8L7 14.5" stroke="#22b422" stroke-width="1" fill="none"/></svg>
<span class="t" style="left:1006.80px;top:430.78px;font-size:12.5px;font-weight:bold;color:#111;transform:scaleX(1.1121);">V5_XTOR 112/1</span>
<svg style="position:absolute;left:966px;top:445px" width="32" height="15"><rect x="0.5" y="0.5" width="31" height="14" fill="none" stroke="#9a0090" stroke-width="1.3"/><path d="M26 0.5L31.5 6M22 5L31.5 14.5" stroke="#9a0090" stroke-width="1" fill="none"/></svg>
<span class="t" style="left:1005.68px;top:446.78px;font-size:12.5px;font-weight:bold;color:#111;transform:scaleX(1.1182);">DIODE_MK 115/5</span>
<div style="position:absolute;left:963px;top:460px;width:35px;height:16px;background:#c3daee;"></div>
<div style="position:absolute;left:998px;top:460px;width:184px;height:16px;background:#308cc6;"></div>
<svg style="position:absolute;left:981px;top:464px" width="6" height="9"><path d="M0 0L5.5 4.5L0 9Z" fill="#88d048"/></svg>
<svg style="position:absolute;left:989px;top:461px" width="9" height="15"><rect x="0.5" y="0.5" width="8" height="14" fill="none" stroke="#88d048" stroke-width="1.3"/><path d="M0.5 6L8.5 -2M0.5 14L8.5 6" stroke="#88d048" stroke-width="1" fill="none"/></svg>
<span class="t" style="left:1005.69px;top:462.78px;font-size:12.5px;font-weight:bold;color:#fff;transform:scaleX(1.1076);">PR_bndry 0/0</span>
<div style="position:absolute;left:962px;top:573px;width:23px;height:22px;box-sizing:border-box;border:1px solid #c3bfba;border-radius:3px;background:linear-gradient(#f6f5f3,#ebe8e4);"></div>
<div style="position:absolute;left:986px;top:573px;width:23px;height:22px;box-sizing:border-box;border:1px solid #c3bfba;border-radius:3px;background:linear-gradient(#f6f5f3,#ebe8e4);"></div>
<div style="position:absolute;left:1010px;top:573px;width:23px;height:22px;box-sizing:border-box;border:1px solid #c3bfba;border-radius:3px;background:linear-gradient(#f6f5f3,#ebe8e4);"></div>
<div style="position:absolute;left:1034px;top:573px;width:23px;height:22px;box-sizing:border-box;border:1px solid #c3bfba;border-radius:3px;background:linear-gradient(#f6f5f3,#ebe8e4);"></div>
<svg style="position:absolute;left:962px;top:573px;overflow:visible" width="23" height="22" viewBox="0 0 23 22"><path d="M7.5 5H15.5V9.5H19L11.5 16L4 9.5H7.5Z" fill="#222"/><rect x="5" y="17.5" width="13" height="1.3" fill="#222"/></svg>
<svg style="position:absolute;left:986px;top:573px;overflow:visible" width="23" height="22" viewBox="0 0 23 22"><path d="M7.5 4.5H15.5V9H19L11.5 15.5L4 9H7.5Z" fill="#222"/></svg>
<svg style="position:absolute;left:1010px;top:573px;overflow:visible" width="23" height="22" viewBox="0 0 23 22"><path d="M7.5 18H15.5V13H19L11.5 6.5L4 13H7.5Z" fill="#222"/></svg>
<svg style="position:absolute;left:1034px;top:573px;overflow:visible" width="23" height="22" viewBox="0 0 23 22"><path d="M7.5 18.5H15.5V13.5H19L11.5 7L4 13.5H7.5Z" fill="#222"/><rect x="5" y="4" width="13" height="1.3" fill="#222"/></svg>
<svg style="position:absolute;left:1166px;top:574px" width="18" height="16"><path d="M9 1L17 15H1Z" fill="#f5e000" stroke="#222" stroke-width="1.3" stroke-linejoin="round"/><rect x="8" y="5" width="2" height="6" fill="#222"/><rect x="8" y="12" width="2" height="2" fill="#222"/></svg>
<span class="t" style="left:965.20px;top:605.08px;font-size:12.5px;color:#1a1a1a;transform:scaleX(1.1000);">Layer Toolbox</span>
<div style="position:absolute;left:1156px;top:605px;width:11px;height:11px;box-sizing:border-box;border:1px solid #6f6d6a;border-radius:2.5px;"></div><div style="position:absolute;left:1170px;top:605px;width:11px;height:11px;box-sizing:border-box;border:1px solid #6f6d6a;border-radius:2.5px;"></div><svg style="position:absolute;left:1156px;top:605px" width="11" height="11"><rect x="3.7" y="2.7" width="4.8" height="4.3" rx="1" fill="none" stroke="#6f6d6a" stroke-width="1"/><rect x="2.6" y="4.2" width="4.4" height="4.4" rx="1.2" fill="#f4f2ef" stroke="#6f6d6a" stroke-width="1"/></svg><svg style="position:absolute;left:1170px;top:605px" width="11" height="11"><path d="M2.8 2.8L8.2 8.2M8.2 2.8L2.8 8.2" stroke="#666461" stroke-width="2.1"/></svg>
<div style="position:absolute;left:963px;top:621px;width:219px;height:17px;background:#308cc6;"></div>
<div style="position:absolute;left:963px;top:638px;width:219px;height:2px;background:#e4eef5;"></div>
<div style="position:absolute;left:964px;top:623px;width:13px;height:13px;background:#fff;border-radius:1px;"></div>
<span class="t" style="left:981.25px;top:624.27px;font-size:12.5px;color:#fff;transform:scaleX(1.0517);">Color</span>
<div style="position:absolute;left:963px;top:640px;width:219px;height:17px;background:#308cc6;"></div>
<div style="position:absolute;left:963px;top:657px;width:219px;height:2px;background:#e4eef5;"></div>
<div style="position:absolute;left:964px;top:642px;width:13px;height:13px;background:#fff;border-radius:1px;"></div>
<span class="t" style="left:981.23px;top:643.27px;font-size:12.5px;color:#fff;transform:scaleX(1.0742);">Frame color</span>
<div style="position:absolute;left:963px;top:659px;width:219px;height:17px;background:#308cc6;"></div>
<div style="position:absolute;left:963px;top:676px;width:219px;height:2px;background:#e4eef5;"></div>
<div style="position:absolute;left:964px;top:661px;width:13px;height:13px;background:#fff;border-radius:1px;"></div>
<span class="t" style="left:981.20px;top:662.27px;font-size:12.5px;color:#fff;transform:scaleX(1.1000);">Stipple</span>
<div style="position:absolute;left:963px;top:678px;width:219px;height:17px;background:#308cc6;"></div>
<div style="position:absolute;left:963px;top:695px;width:219px;height:2px;background:#e4eef5;"></div>
<div style="position:absolute;left:964px;top:680px;width:13px;height:13px;background:#fff;border-radius:1px;"></div>
<span class="t" style="left:982.30px;top:681.27px;font-size:12.5px;color:#fff;transform:scaleX(1.0909);">Animation</span>
<div style="position:absolute;left:963px;top:697px;width:219px;height:17px;background:#308cc6;"></div>
<div style="position:absolute;left:963px;top:714px;width:219px;height:2px;background:#e4eef5;"></div>
<div style="position:absolute;left:964px;top:699px;width:13px;height:13px;background:#fff;border-radius:1px;"></div>
<span class="t" style="left:981.18px;top:700.27px;font-size:12.5px;color:#fff;transform:scaleX(1.1154);">Style</span>
<div style="position:absolute;left:963px;top:716px;width:219px;height:17px;background:#308cc6;"></div>
<div style="position:absolute;left:963px;top:733px;width:219px;height:2px;background:#e4eef5;"></div>
<div style="position:absolute;left:964px;top:718px;width:13px;height:13px;background:#fff;border-radius:1px;"></div>
<span class="t" style="left:982.30px;top:719.27px;font-size:12.5px;color:#fff;transform:scaleX(1.1000);">Visibility</span>
<div style="position:absolute;left:1178px;top:744px;width:1px;height:1px;background:#bdb9b4;"></div>
<div style="position:absolute;left:1175px;top:747px;width:1px;height:1px;background:#bdb9b4;"></div>
<div style="position:absolute;left:1178px;top:747px;width:1px;height:1px;background:#bdb9b4;"></div>
<div style="position:absolute;left:1172px;top:750px;width:1px;height:1px;background:#bdb9b4;"></div>
<div style="position:absolute;left:1175px;top:750px;width:1px;height:1px;background:#bdb9b4;"></div>
<div style="position:absolute;left:1178px;top:750px;width:1px;height:1px;background:#bdb9b4;"></div>
<div style="position:absolute;left:1169px;top:753px;width:1px;height:1px;background:#bdb9b4;"></div>
<div style="position:absolute;left:1172px;top:753px;width:1px;height:1px;background:#bdb9b4;"></div>
<div style="position:absolute;left:1175px;top:753px;width:1px;height:1px;background:#bdb9b4;"></div>
<div style="position:absolute;left:1178px;top:753px;width:1px;height:1px;background:#bdb9b4;"></div>
</body></html>
